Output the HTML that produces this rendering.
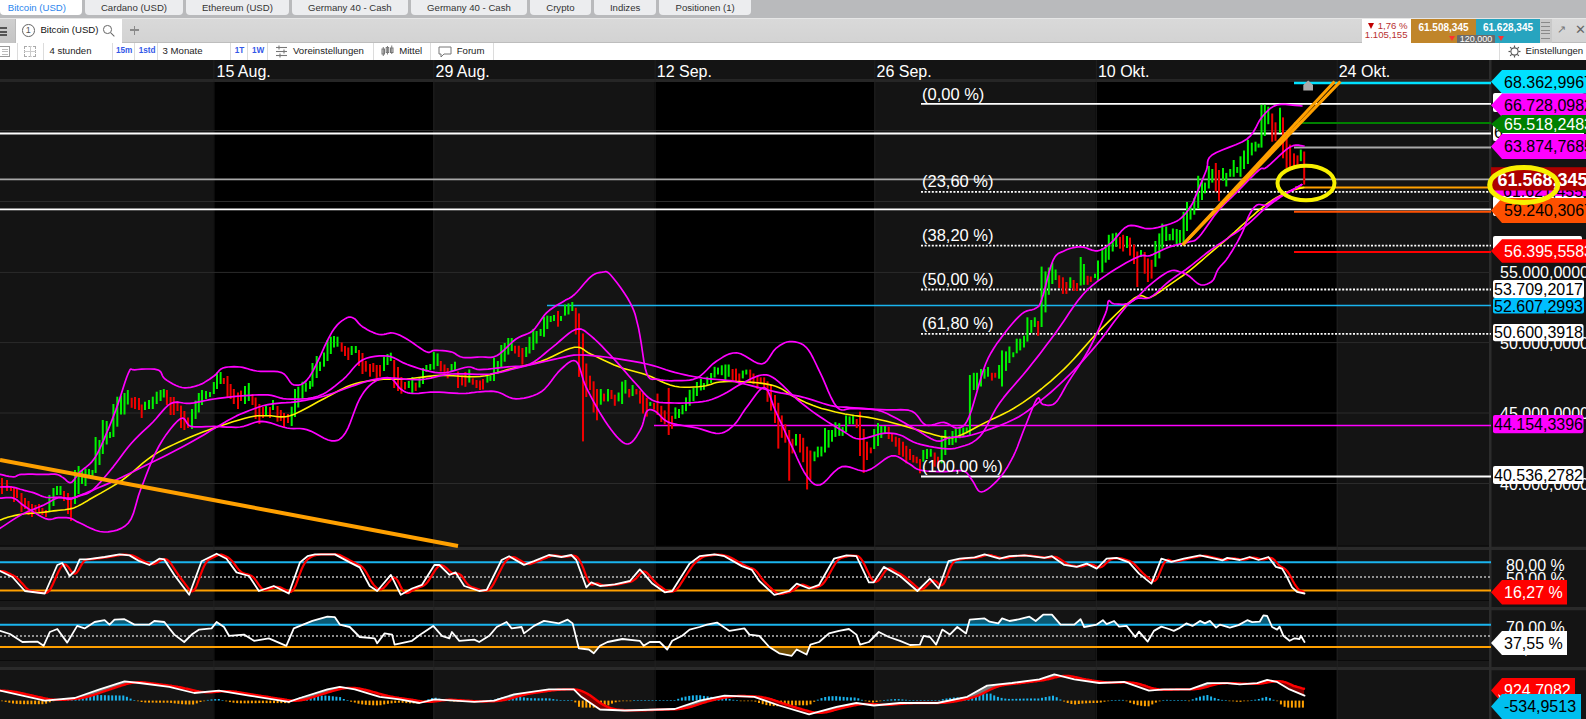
<!DOCTYPE html>
<html><head><meta charset="utf-8">
<style>
html,body{margin:0;padding:0;width:1586px;height:719px;overflow:hidden;background:#000;}
*{box-sizing:border-box;}
body{font-family:"Liberation Sans",sans-serif;position:relative;}
.abs{position:absolute;}
#tabs{left:0;top:0;width:1586px;height:18px;background:#b9babc;}
.tab{position:absolute;top:0;height:14.5px;background:#ecedef;border-radius:0 0 4px 4px;font-size:9.6px;line-height:15.6px;color:#333;text-align:center;white-space:nowrap;}
#bar2{left:0;top:18px;width:1586px;height:24.6px;background:linear-gradient(#d9d9d9,#d3d3d3);border-top:1px solid #e6e6e6;border-bottom:1px solid #bdbdbd;}
#tool{left:0;top:42.6px;width:1586px;height:17.4px;background:#fff;}
.sep{position:absolute;top:0;width:1px;height:17.7px;background:#dcdcdc;}
.tt{position:absolute;top:-1px;font-size:9.6px;line-height:17.7px;color:#222;white-space:nowrap;}
.bl{color:#3358e8;font-size:8.2px;font-weight:bold;}
svg text{font-family:"Liberation Sans",sans-serif;}
</style></head><body>
<svg class="abs" style="left:0;top:0" width="1586" height="719" viewBox="0 0 1586 719">
<rect x="0" y="60" width="1586" height="659" fill="#000"/>
<rect x="0" y="82" width="213.4" height="464.70000000000005" fill="#141414"/>
<rect x="213.4" y="82" width="219.9" height="464.70000000000005" fill="#000"/>
<rect x="433.3" y="82" width="221.3" height="464.70000000000005" fill="#141414"/>
<rect x="654.6" y="82" width="219.69999999999993" height="464.70000000000005" fill="#000"/>
<rect x="874.3" y="82" width="221.5" height="464.70000000000005" fill="#141414"/>
<rect x="1095.8" y="82" width="240.9000000000001" height="464.70000000000005" fill="#000"/>
<rect x="1336.7" y="82" width="154.29999999999995" height="464.70000000000005" fill="#141414"/>
<rect x="0" y="550" width="213.4" height="50" fill="#141414"/>
<rect x="213.4" y="550" width="219.9" height="50" fill="#000"/>
<rect x="433.3" y="550" width="221.3" height="50" fill="#141414"/>
<rect x="654.6" y="550" width="219.69999999999993" height="50" fill="#000"/>
<rect x="874.3" y="550" width="221.5" height="50" fill="#141414"/>
<rect x="1095.8" y="550" width="240.9000000000001" height="50" fill="#000"/>
<rect x="1336.7" y="550" width="154.29999999999995" height="50" fill="#141414"/>
<rect x="0" y="610" width="213.4" height="50" fill="#141414"/>
<rect x="213.4" y="610" width="219.9" height="50" fill="#000"/>
<rect x="433.3" y="610" width="221.3" height="50" fill="#141414"/>
<rect x="654.6" y="610" width="219.69999999999993" height="50" fill="#000"/>
<rect x="874.3" y="610" width="221.5" height="50" fill="#141414"/>
<rect x="1095.8" y="610" width="240.9000000000001" height="50" fill="#000"/>
<rect x="1336.7" y="610" width="154.29999999999995" height="50" fill="#141414"/>
<rect x="0" y="670" width="213.4" height="49" fill="#141414"/>
<rect x="213.4" y="670" width="219.9" height="49" fill="#000"/>
<rect x="433.3" y="670" width="221.3" height="49" fill="#141414"/>
<rect x="654.6" y="670" width="219.69999999999993" height="49" fill="#000"/>
<rect x="874.3" y="670" width="221.5" height="49" fill="#141414"/>
<rect x="1095.8" y="670" width="240.9000000000001" height="49" fill="#000"/>
<rect x="1336.7" y="670" width="154.29999999999995" height="49" fill="#141414"/>
<rect x="0" y="60" width="1491" height="19" fill="#141414"/>
<rect x="0" y="79" width="1491" height="3" fill="#262626"/>
<rect x="0" y="545.6" width="1491" height="1.1" fill="#060606"/>
<rect x="0" y="546.7" width="1491" height="3.3" fill="#2a2a2a"/>
<rect x="0" y="600" width="1491" height="1" fill="#0a0a0a"/>
<rect x="0" y="601" width="1491" height="6" fill="#191919"/>
<rect x="0" y="607" width="1491" height="3" fill="#2a2a2a"/>
<rect x="0" y="660" width="1491" height="1" fill="#0a0a0a"/>
<rect x="0" y="661" width="1491" height="6" fill="#191919"/>
<rect x="0" y="667" width="1491" height="3" fill="#2a2a2a"/>
<rect x="213.4" y="60" width="1" height="659" fill="#242424" opacity="0.8"/>
<rect x="433.3" y="60" width="1" height="659" fill="#242424" opacity="0.8"/>
<rect x="654.6" y="60" width="1" height="659" fill="#242424" opacity="0.8"/>
<rect x="874.3" y="60" width="1" height="659" fill="#242424" opacity="0.8"/>
<rect x="1095.8" y="60" width="1" height="659" fill="#242424" opacity="0.8"/>
<rect x="1336.7" y="60" width="1" height="659" fill="#242424" opacity="0.8"/>
<rect x="1491" y="60" width="95" height="659" fill="#141414"/>
<rect x="1489" y="60" width="2.5" height="659" fill="#2c2c2c"/>
<rect x="1491" y="546.7" width="95" height="3.3" fill="#2a2a2a"/>
<rect x="1491" y="607" width="95" height="3.3" fill="#2a2a2a"/>
<rect x="1491" y="667" width="95" height="3.3" fill="#2a2a2a"/>
<rect x="1491" y="79" width="95" height="3" fill="#262626"/>
<rect x="0" y="130.0" width="1491" height="1" fill="#2b2b2b"/>
<rect x="0" y="201.0" width="1491" height="1" fill="#2b2b2b"/>
<rect x="0" y="271.9" width="1491" height="1" fill="#2b2b2b"/>
<rect x="0" y="342.1" width="1491" height="1" fill="#2b2b2b"/>
<rect x="0" y="412.5" width="1491" height="1" fill="#2b2b2b"/>
<rect x="0" y="483.0" width="1491" height="1" fill="#2b2b2b"/>
<text x="216.5" y="77.4" font-size="16" fill="#fff">15 Aug.</text>
<text x="435.5" y="77.4" font-size="16" fill="#fff">29 Aug.</text>
<text x="656.8" y="77.4" font-size="16" fill="#fff">12 Sep.</text>
<text x="876.5" y="77.4" font-size="16" fill="#fff">26 Sep.</text>
<text x="1097.9" y="77.4" font-size="16" fill="#fff">10 Okt.</text>
<text x="1338.7" y="77.4" font-size="16" fill="#fff">24 Okt.</text>
<line x1="0" y1="133.4" x2="1491" y2="133.4" stroke="#ffffff" stroke-width="2"/>
<line x1="0" y1="179.3" x2="1491" y2="179.3" stroke="#a8a8a8" stroke-width="1.8"/>
<line x1="0" y1="209.4" x2="1491" y2="209.4" stroke="#ffffff" stroke-width="1.7"/>
<line x1="547" y1="305.4" x2="1491" y2="305.4" stroke="#1ab4ee" stroke-width="1.5"/>
<line x1="654" y1="425.4" x2="1491" y2="425.4" stroke="#ff00ff" stroke-width="1.5"/>
<line x1="921" y1="103.8" x2="1491" y2="103.8" stroke="#ffffff" stroke-width="1.8"/>
<line x1="921" y1="191.8" x2="1491" y2="191.8" stroke="#ffffff" stroke-width="1.8" stroke-dasharray="2 1.6"/>
<line x1="921" y1="245.6" x2="1491" y2="245.6" stroke="#ffffff" stroke-width="1.8" stroke-dasharray="2 1.6"/>
<line x1="921" y1="289.5" x2="1491" y2="289.5" stroke="#ffffff" stroke-width="1.8" stroke-dasharray="2 1.6"/>
<line x1="921" y1="333.8" x2="1491" y2="333.8" stroke="#ffffff" stroke-width="1.8" stroke-dasharray="2 1.6"/>
<line x1="921" y1="476.4" x2="1491" y2="476.4" stroke="#ffffff" stroke-width="2"/>
<line x1="1294" y1="83" x2="1491" y2="83" stroke="#00e1ff" stroke-width="2.4"/>
<line x1="1294" y1="123" x2="1491" y2="123" stroke="#008000" stroke-width="2"/>
<line x1="1294" y1="147.5" x2="1491" y2="147.5" stroke="#aaaaaa" stroke-width="2"/>
<line x1="1295" y1="187.5" x2="1491" y2="187.5" stroke="#ffa000" stroke-width="2"/>
<line x1="1294" y1="211.7" x2="1491" y2="211.7" stroke="#ff5000" stroke-width="2"/>
<line x1="1294" y1="252" x2="1491" y2="252" stroke="#ff0000" stroke-width="2"/>
<rect x="1.0" y="478.0" width="2" height="16.0" fill="#f00000"/>
<rect x="6.0" y="480.0" width="2" height="11.0" fill="#f00000"/>
<rect x="10.0" y="486.0" width="2" height="5.0" fill="#f00000"/>
<rect x="13.0" y="488.0" width="2" height="14.0" fill="#f00000"/>
<rect x="16.0" y="489.0" width="2" height="9.0" fill="#f00000"/>
<rect x="20.5" y="493.0" width="2" height="19.0" fill="#f00000"/>
<rect x="24.0" y="498.0" width="2" height="11.0" fill="#f00000"/>
<rect x="27.5" y="501.0" width="2" height="14.0" fill="#f00000"/>
<rect x="31.0" y="504.0" width="2" height="13.0" fill="#f00000"/>
<rect x="34.5" y="505.0" width="2" height="7.0" fill="#f00000"/>
<rect x="38.0" y="504.0" width="2" height="8.0" fill="#f00000"/>
<rect x="41.4" y="508.0" width="2" height="7.0" fill="#f00000"/>
<rect x="45.0" y="510.0" width="2" height="7.0" fill="#f00000"/>
<rect x="48.4" y="495.0" width="2" height="16.0" fill="#00f200"/>
<rect x="52.5" y="488.0" width="2" height="18.0" fill="#00f200"/>
<rect x="56.0" y="486.0" width="2" height="9.0" fill="#00f200"/>
<rect x="59.5" y="486.0" width="2" height="9.0" fill="#00f200"/>
<rect x="63.0" y="491.0" width="2" height="10.0" fill="#f00000"/>
<rect x="67.0" y="493.0" width="2" height="21.0" fill="#f00000"/>
<rect x="70.0" y="498.0" width="2" height="23.0" fill="#f00000"/>
<rect x="74.0" y="470.0" width="2" height="34.0" fill="#00f200"/>
<rect x="77.6" y="466.0" width="2" height="28.0" fill="#00f200"/>
<rect x="81.0" y="470.0" width="2" height="14.0" fill="#00f200"/>
<rect x="84.5" y="468.5" width="2" height="17.5" fill="#00f200"/>
<rect x="88.0" y="469.0" width="2" height="7.0" fill="#00f200"/>
<rect x="91.5" y="470.0" width="2" height="6.0" fill="#00f200"/>
<rect x="94.6" y="437.0" width="2" height="36.0" fill="#00f200"/>
<rect x="98.5" y="440.0" width="2" height="25.0" fill="#00f200"/>
<rect x="101.8" y="420.0" width="2" height="34.0" fill="#00f200"/>
<rect x="105.7" y="421.0" width="2" height="23.5" fill="#00f200"/>
<rect x="109.0" y="432.0" width="2" height="6.0" fill="#00f200"/>
<rect x="112.4" y="404.0" width="2" height="33.0" fill="#00f200"/>
<rect x="116.3" y="396.7" width="2" height="30.0" fill="#00f200"/>
<rect x="120.0" y="395.6" width="2" height="18.9" fill="#00f200"/>
<rect x="123.5" y="393.0" width="2" height="21.5" fill="#00f200"/>
<rect x="126.8" y="390.0" width="2" height="14.5" fill="#00f200"/>
<rect x="130.7" y="397.8" width="2" height="10.0" fill="#f00000"/>
<rect x="134.0" y="397.0" width="2" height="12.0" fill="#f00000"/>
<rect x="138.0" y="398.0" width="2" height="12.0" fill="#f00000"/>
<rect x="140.7" y="404.5" width="2" height="13.5" fill="#f00000"/>
<rect x="144.0" y="401.7" width="2" height="8.3" fill="#00f200"/>
<rect x="148.0" y="400.0" width="2" height="9.0" fill="#00f200"/>
<rect x="151.8" y="396.7" width="2" height="12.3" fill="#00f200"/>
<rect x="155.7" y="391.7" width="2" height="12.3" fill="#00f200"/>
<rect x="159.6" y="390.0" width="2" height="11.0" fill="#00f200"/>
<rect x="162.8" y="389.0" width="2" height="8.5" fill="#00f200"/>
<rect x="165.9" y="390.0" width="2" height="15.0" fill="#f00000"/>
<rect x="169.6" y="397.0" width="2" height="18.0" fill="#f00000"/>
<rect x="172.8" y="397.0" width="2" height="18.0" fill="#f00000"/>
<rect x="176.5" y="401.0" width="2" height="10.0" fill="#f00000"/>
<rect x="180.0" y="405.6" width="2" height="22.4" fill="#f00000"/>
<rect x="183.4" y="411.0" width="2" height="19.0" fill="#f00000"/>
<rect x="187.0" y="417.5" width="2" height="10.5" fill="#f00000"/>
<rect x="191.0" y="409.0" width="2" height="20.0" fill="#00f200"/>
<rect x="194.6" y="400.6" width="2" height="18.4" fill="#00f200"/>
<rect x="197.8" y="393.0" width="2" height="19.5" fill="#00f200"/>
<rect x="201.0" y="390.0" width="2" height="15.0" fill="#00f200"/>
<rect x="205.0" y="391.0" width="2" height="8.0" fill="#00f200"/>
<rect x="209.0" y="392.0" width="2" height="5.0" fill="#00f200"/>
<rect x="212.8" y="382.0" width="2" height="12.0" fill="#00f200"/>
<rect x="216.0" y="372.5" width="2" height="16.5" fill="#00f200"/>
<rect x="219.6" y="372.0" width="2" height="12.0" fill="#00f200"/>
<rect x="222.8" y="378.0" width="2" height="6.0" fill="#f00000"/>
<rect x="226.5" y="376.0" width="2" height="21.0" fill="#f00000"/>
<rect x="229.6" y="384.0" width="2" height="15.0" fill="#f00000"/>
<rect x="232.8" y="389.0" width="2" height="15.0" fill="#f00000"/>
<rect x="237.0" y="392.5" width="2" height="16.5" fill="#f00000"/>
<rect x="240.0" y="390.6" width="2" height="10.4" fill="#f00000"/>
<rect x="244.0" y="386.0" width="2" height="18.0" fill="#00f200"/>
<rect x="247.8" y="383.0" width="2" height="18.0" fill="#00f200"/>
<rect x="251.5" y="394.0" width="2" height="11.0" fill="#f00000"/>
<rect x="254.6" y="397.5" width="2" height="21.5" fill="#f00000"/>
<rect x="258.4" y="404.0" width="2" height="20.0" fill="#f00000"/>
<rect x="262.0" y="407.0" width="2" height="11.0" fill="#f00000"/>
<rect x="265.0" y="406.0" width="2" height="9.0" fill="#00f200"/>
<rect x="269.0" y="407.0" width="2" height="11.0" fill="#f00000"/>
<rect x="272.0" y="400.0" width="2" height="10.0" fill="#00f200"/>
<rect x="276.5" y="406.0" width="2" height="15.7" fill="#f00000"/>
<rect x="279.8" y="410.0" width="2" height="11.0" fill="#f00000"/>
<rect x="283.0" y="413.0" width="2" height="14.0" fill="#f00000"/>
<rect x="287.0" y="414.0" width="2" height="9.0" fill="#f00000"/>
<rect x="290.7" y="406.7" width="2" height="19.3" fill="#00f200"/>
<rect x="294.0" y="389.0" width="2" height="28.0" fill="#00f200"/>
<rect x="297.3" y="386.7" width="2" height="20.8" fill="#00f200"/>
<rect x="301.5" y="381.7" width="2" height="17.3" fill="#00f200"/>
<rect x="304.8" y="382.5" width="2" height="9.2" fill="#00f200"/>
<rect x="309.0" y="381.0" width="2" height="8.0" fill="#00f200"/>
<rect x="311.5" y="363.0" width="2" height="23.7" fill="#00f200"/>
<rect x="315.7" y="356.0" width="2" height="22.0" fill="#00f200"/>
<rect x="319.0" y="361.7" width="2" height="9.3" fill="#00f200"/>
<rect x="323.0" y="352.5" width="2" height="14.2" fill="#00f200"/>
<rect x="326.5" y="340.0" width="2" height="21.0" fill="#00f200"/>
<rect x="329.8" y="336.7" width="2" height="17.3" fill="#00f200"/>
<rect x="333.0" y="336.0" width="2" height="11.5" fill="#00f200"/>
<rect x="336.5" y="336.7" width="2" height="10.0" fill="#00f200"/>
<rect x="340.7" y="342.5" width="2" height="9.2" fill="#f00000"/>
<rect x="344.0" y="346.0" width="2" height="10.0" fill="#f00000"/>
<rect x="347.3" y="347.5" width="2" height="12.5" fill="#f00000"/>
<rect x="350.7" y="346.0" width="2" height="9.0" fill="#00f200"/>
<rect x="354.8" y="346.0" width="2" height="7.0" fill="#00f200"/>
<rect x="358.0" y="350.0" width="2" height="16.0" fill="#f00000"/>
<rect x="361.5" y="353.0" width="2" height="21.0" fill="#f00000"/>
<rect x="364.8" y="361.0" width="2" height="10.7" fill="#f00000"/>
<rect x="369.0" y="364.0" width="2" height="12.7" fill="#f00000"/>
<rect x="372.3" y="363.0" width="2" height="9.0" fill="#f00000"/>
<rect x="375.7" y="365.0" width="2" height="15.0" fill="#f00000"/>
<rect x="379.0" y="365.0" width="2" height="11.7" fill="#f00000"/>
<rect x="383.0" y="356.7" width="2" height="14.3" fill="#00f200"/>
<rect x="386.5" y="354.0" width="2" height="11.0" fill="#00f200"/>
<rect x="389.8" y="352.7" width="2" height="8.3" fill="#00f200"/>
<rect x="393.2" y="360.0" width="2" height="28.0" fill="#f00000"/>
<rect x="397.0" y="367.0" width="2" height="24.0" fill="#f00000"/>
<rect x="400.4" y="377.0" width="2" height="16.7" fill="#f00000"/>
<rect x="404.0" y="382.0" width="2" height="7.5" fill="#f00000"/>
<rect x="407.8" y="381.0" width="2" height="7.0" fill="#00f200"/>
<rect x="411.3" y="377.0" width="2" height="16.0" fill="#00f200"/>
<rect x="414.7" y="382.6" width="2" height="8.4" fill="#f00000"/>
<rect x="418.5" y="377.0" width="2" height="10.5" fill="#00f200"/>
<rect x="422.0" y="368.0" width="2" height="16.0" fill="#00f200"/>
<rect x="425.4" y="365.0" width="2" height="7.0" fill="#00f200"/>
<rect x="429.3" y="364.0" width="2" height="6.0" fill="#00f200"/>
<rect x="432.8" y="352.0" width="2" height="17.4" fill="#00f200"/>
<rect x="436.6" y="353.4" width="2" height="12.6" fill="#00f200"/>
<rect x="439.8" y="361.0" width="2" height="10.5" fill="#f00000"/>
<rect x="443.5" y="364.5" width="2" height="11.1" fill="#f00000"/>
<rect x="446.7" y="368.0" width="2" height="10.4" fill="#f00000"/>
<rect x="450.6" y="364.0" width="2" height="8.0" fill="#00f200"/>
<rect x="454.0" y="361.7" width="2" height="9.1" fill="#00f200"/>
<rect x="457.0" y="371.5" width="2" height="16.5" fill="#f00000"/>
<rect x="461.0" y="375.6" width="2" height="9.8" fill="#f00000"/>
<rect x="464.4" y="372.0" width="2" height="14.8" fill="#f00000"/>
<rect x="468.3" y="369.4" width="2" height="13.2" fill="#00f200"/>
<rect x="471.8" y="378.4" width="2" height="6.3" fill="#f00000"/>
<rect x="475.5" y="380.0" width="2" height="8.0" fill="#f00000"/>
<rect x="479.0" y="380.5" width="2" height="9.5" fill="#f00000"/>
<rect x="482.0" y="379.0" width="2" height="10.5" fill="#f00000"/>
<rect x="486.4" y="375.6" width="2" height="7.0" fill="#00f200"/>
<rect x="489.4" y="375.6" width="2" height="5.4" fill="#00f200"/>
<rect x="493.0" y="357.6" width="2" height="23.4" fill="#00f200"/>
<rect x="496.8" y="361.0" width="2" height="12.5" fill="#00f200"/>
<rect x="500.3" y="345.0" width="2" height="22.3" fill="#00f200"/>
<rect x="503.7" y="343.0" width="2" height="18.7" fill="#00f200"/>
<rect x="507.3" y="338.0" width="2" height="16.6" fill="#00f200"/>
<rect x="510.7" y="338.0" width="2" height="13.0" fill="#00f200"/>
<rect x="514.0" y="345.7" width="2" height="7.8" fill="#f00000"/>
<rect x="517.8" y="345.7" width="2" height="11.3" fill="#f00000"/>
<rect x="521.4" y="348.0" width="2" height="16.6" fill="#f00000"/>
<rect x="525.2" y="347.0" width="2" height="10.0" fill="#00f200"/>
<rect x="528.5" y="336.8" width="2" height="16.7" fill="#00f200"/>
<rect x="532.3" y="329.0" width="2" height="21.0" fill="#00f200"/>
<rect x="535.6" y="331.0" width="2" height="12.5" fill="#00f200"/>
<rect x="539.6" y="329.0" width="2" height="7.0" fill="#00f200"/>
<rect x="543.0" y="316.7" width="2" height="20.1" fill="#00f200"/>
<rect x="546.3" y="315.6" width="2" height="13.4" fill="#00f200"/>
<rect x="549.7" y="316.0" width="2" height="6.0" fill="#00f200"/>
<rect x="553.0" y="315.0" width="2" height="6.0" fill="#00f200"/>
<rect x="557.0" y="311.0" width="2" height="15.7" fill="#f00000"/>
<rect x="560.0" y="316.0" width="2" height="5.0" fill="#00f200"/>
<rect x="564.0" y="304.5" width="2" height="11.1" fill="#00f200"/>
<rect x="567.5" y="303.4" width="2" height="11.1" fill="#00f200"/>
<rect x="571.3" y="302.0" width="2" height="9.0" fill="#00f200"/>
<rect x="574.8" y="307.8" width="2" height="26.7" fill="#f00000"/>
<rect x="578.0" y="313.4" width="2" height="63.5" fill="#f00000"/>
<rect x="582.0" y="333.4" width="2" height="108.0" fill="#f00000"/>
<rect x="585.3" y="363.5" width="2" height="33.5" fill="#f00000"/>
<rect x="589.0" y="375.7" width="2" height="14.3" fill="#f00000"/>
<rect x="592.6" y="381.3" width="2" height="31.2" fill="#f00000"/>
<rect x="596.0" y="389.0" width="2" height="31.3" fill="#f00000"/>
<rect x="599.8" y="389.0" width="2" height="15.7" fill="#00f200"/>
<rect x="603.0" y="393.6" width="2" height="7.8" fill="#f00000"/>
<rect x="607.0" y="389.0" width="2" height="12.4" fill="#00f200"/>
<rect x="610.5" y="390.0" width="2" height="9.0" fill="#f00000"/>
<rect x="613.8" y="394.7" width="2" height="11.1" fill="#f00000"/>
<rect x="617.6" y="392.5" width="2" height="8.9" fill="#00f200"/>
<rect x="621.1" y="381.6" width="2" height="22.4" fill="#00f200"/>
<rect x="624.4" y="380.0" width="2" height="13.6" fill="#00f200"/>
<rect x="628.2" y="389.0" width="2" height="8.4" fill="#f00000"/>
<rect x="631.6" y="385.0" width="2" height="11.0" fill="#00f200"/>
<rect x="635.4" y="389.0" width="2" height="5.4" fill="#f00000"/>
<rect x="639.0" y="390.5" width="2" height="13.1" fill="#f00000"/>
<rect x="642.0" y="392.8" width="2" height="20.7" fill="#f00000"/>
<rect x="645.8" y="398.0" width="2" height="18.6" fill="#f00000"/>
<rect x="649.3" y="402.0" width="2" height="4.0" fill="#00f200"/>
<rect x="653.0" y="402.8" width="2" height="6.9" fill="#f00000"/>
<rect x="656.5" y="393.6" width="2" height="21.4" fill="#f00000"/>
<rect x="660.3" y="405.8" width="2" height="16.2" fill="#f00000"/>
<rect x="663.7" y="410.4" width="2" height="13.8" fill="#f00000"/>
<rect x="667.7" y="388.0" width="2" height="47.0" fill="#f00000"/>
<rect x="671.0" y="415.8" width="2" height="13.0" fill="#f00000"/>
<rect x="674.4" y="407.4" width="2" height="11.5" fill="#00f200"/>
<rect x="678.0" y="409.0" width="2" height="9.0" fill="#00f200"/>
<rect x="681.5" y="405.0" width="2" height="9.3" fill="#00f200"/>
<rect x="685.0" y="397.4" width="2" height="13.8" fill="#00f200"/>
<rect x="688.7" y="389.8" width="2" height="16.0" fill="#00f200"/>
<rect x="692.5" y="388.0" width="2" height="13.3" fill="#00f200"/>
<rect x="695.9" y="382.0" width="2" height="14.0" fill="#00f200"/>
<rect x="699.9" y="379.0" width="2" height="11.5" fill="#00f200"/>
<rect x="702.9" y="383.0" width="2" height="6.8" fill="#00f200"/>
<rect x="706.3" y="376.8" width="2" height="9.2" fill="#00f200"/>
<rect x="710.1" y="373.0" width="2" height="10.0" fill="#00f200"/>
<rect x="713.6" y="366.8" width="2" height="10.7" fill="#00f200"/>
<rect x="717.0" y="367.6" width="2" height="6.9" fill="#00f200"/>
<rect x="720.8" y="365.3" width="2" height="9.9" fill="#00f200"/>
<rect x="724.4" y="364.5" width="2" height="15.3" fill="#00f200"/>
<rect x="727.7" y="364.5" width="2" height="12.3" fill="#00f200"/>
<rect x="731.6" y="369.0" width="2" height="12.3" fill="#f00000"/>
<rect x="735.0" y="368.6" width="2" height="13.7" fill="#f00000"/>
<rect x="738.3" y="373.5" width="2" height="10.9" fill="#f00000"/>
<rect x="741.8" y="370.6" width="2" height="7.8" fill="#00f200"/>
<rect x="745.3" y="369.6" width="2" height="4.9" fill="#00f200"/>
<rect x="749.2" y="369.6" width="2" height="12.7" fill="#f00000"/>
<rect x="752.5" y="373.5" width="2" height="10.7" fill="#f00000"/>
<rect x="756.4" y="375.5" width="2" height="13.5" fill="#f00000"/>
<rect x="759.7" y="377.4" width="2" height="6.8" fill="#f00000"/>
<rect x="763.2" y="377.4" width="2" height="9.8" fill="#f00000"/>
<rect x="766.5" y="381.3" width="2" height="20.5" fill="#f00000"/>
<rect x="770.0" y="385.0" width="2" height="25.6" fill="#f00000"/>
<rect x="774.0" y="395.0" width="2" height="28.0" fill="#f00000"/>
<rect x="777.3" y="402.8" width="2" height="45.8" fill="#f00000"/>
<rect x="780.8" y="415.4" width="2" height="22.4" fill="#f00000"/>
<rect x="784.3" y="424.2" width="2" height="18.5" fill="#f00000"/>
<rect x="788.2" y="430.0" width="2" height="50.7" fill="#f00000"/>
<rect x="791.5" y="438.8" width="2" height="14.6" fill="#f00000"/>
<rect x="795.0" y="434.0" width="2" height="11.6" fill="#00f200"/>
<rect x="799.0" y="434.0" width="2" height="18.5" fill="#f00000"/>
<rect x="802.2" y="437.8" width="2" height="24.4" fill="#f00000"/>
<rect x="806.1" y="446.6" width="2" height="42.9" fill="#f00000"/>
<rect x="809.4" y="450.5" width="2" height="29.3" fill="#f00000"/>
<rect x="813.5" y="451.5" width="2" height="9.7" fill="#00f200"/>
<rect x="816.8" y="446.6" width="2" height="10.7" fill="#00f200"/>
<rect x="820.4" y="446.6" width="2" height="9.8" fill="#00f200"/>
<rect x="824.0" y="428.0" width="2" height="24.5" fill="#00f200"/>
<rect x="827.6" y="430.0" width="2" height="17.6" fill="#00f200"/>
<rect x="831.0" y="430.0" width="2" height="11.7" fill="#00f200"/>
<rect x="834.4" y="422.2" width="2" height="14.7" fill="#00f200"/>
<rect x="838.3" y="423.2" width="2" height="12.7" fill="#00f200"/>
<rect x="841.6" y="427.1" width="2" height="8.8" fill="#00f200"/>
<rect x="845.1" y="415.4" width="2" height="16.6" fill="#00f200"/>
<rect x="848.6" y="416.4" width="2" height="7.8" fill="#00f200"/>
<rect x="852.1" y="415.8" width="2" height="8.4" fill="#00f200"/>
<rect x="855.7" y="419.0" width="2" height="9.0" fill="#f00000"/>
<rect x="859.0" y="411.7" width="2" height="44.3" fill="#f00000"/>
<rect x="862.7" y="429.0" width="2" height="44.0" fill="#f00000"/>
<rect x="866.0" y="441.7" width="2" height="18.3" fill="#f00000"/>
<rect x="869.8" y="447.5" width="2" height="5.8" fill="#f00000"/>
<rect x="873.2" y="429.0" width="2" height="20.0" fill="#00f200"/>
<rect x="877.0" y="423.0" width="2" height="23.0" fill="#00f200"/>
<rect x="880.3" y="426.0" width="2" height="12.0" fill="#00f200"/>
<rect x="884.0" y="426.0" width="2" height="7.0" fill="#00f200"/>
<rect x="887.7" y="426.7" width="2" height="12.3" fill="#f00000"/>
<rect x="891.0" y="434.0" width="2" height="7.7" fill="#f00000"/>
<rect x="894.8" y="436.7" width="2" height="10.0" fill="#f00000"/>
<rect x="898.2" y="438.0" width="2" height="17.0" fill="#f00000"/>
<rect x="902.0" y="441.7" width="2" height="15.0" fill="#f00000"/>
<rect x="905.3" y="445.8" width="2" height="17.5" fill="#f00000"/>
<rect x="909.0" y="449.0" width="2" height="11.0" fill="#f00000"/>
<rect x="912.3" y="455.0" width="2" height="7.5" fill="#f00000"/>
<rect x="915.7" y="456.7" width="2" height="6.6" fill="#f00000"/>
<rect x="919.0" y="459.0" width="2" height="14.3" fill="#f00000"/>
<rect x="922.3" y="450.0" width="2" height="11.7" fill="#00f200"/>
<rect x="926.0" y="449.0" width="2" height="10.0" fill="#00f200"/>
<rect x="929.8" y="449.0" width="2" height="7.7" fill="#00f200"/>
<rect x="933.7" y="452.5" width="2" height="14.2" fill="#f00000"/>
<rect x="937.0" y="456.7" width="2" height="11.6" fill="#f00000"/>
<rect x="940.7" y="436.7" width="2" height="26.6" fill="#00f200"/>
<rect x="944.3" y="430.0" width="2" height="25.0" fill="#00f200"/>
<rect x="948.2" y="436.0" width="2" height="9.0" fill="#00f200"/>
<rect x="951.5" y="431.0" width="2" height="14.0" fill="#00f200"/>
<rect x="954.8" y="428.3" width="2" height="14.2" fill="#00f200"/>
<rect x="958.7" y="426.7" width="2" height="11.6" fill="#00f200"/>
<rect x="962.3" y="427.5" width="2" height="9.2" fill="#00f200"/>
<rect x="965.7" y="427.5" width="2" height="5.8" fill="#00f200"/>
<rect x="968.9" y="375.0" width="2" height="60.0" fill="#00f200"/>
<rect x="972.8" y="372.8" width="2" height="17.2" fill="#00f200"/>
<rect x="976.0" y="372.8" width="2" height="17.2" fill="#00f200"/>
<rect x="980.0" y="369.0" width="2" height="17.5" fill="#00f200"/>
<rect x="983.5" y="369.0" width="2" height="9.7" fill="#00f200"/>
<rect x="987.0" y="367.0" width="2" height="9.7" fill="#00f200"/>
<rect x="990.9" y="372.8" width="2" height="7.8" fill="#f00000"/>
<rect x="994.2" y="372.8" width="2" height="4.9" fill="#f00000"/>
<rect x="998.1" y="365.0" width="2" height="13.7" fill="#00f200"/>
<rect x="1001.0" y="350.4" width="2" height="36.1" fill="#00f200"/>
<rect x="1005.0" y="351.4" width="2" height="19.5" fill="#00f200"/>
<rect x="1008.4" y="346.5" width="2" height="16.5" fill="#00f200"/>
<rect x="1012.3" y="352.3" width="2" height="4.9" fill="#00f200"/>
<rect x="1015.7" y="338.7" width="2" height="14.6" fill="#00f200"/>
<rect x="1019.2" y="338.7" width="2" height="11.7" fill="#00f200"/>
<rect x="1023.0" y="335.8" width="2" height="11.7" fill="#00f200"/>
<rect x="1026.4" y="317.3" width="2" height="24.3" fill="#00f200"/>
<rect x="1030.3" y="320.0" width="2" height="12.8" fill="#00f200"/>
<rect x="1033.8" y="317.3" width="2" height="9.7" fill="#00f200"/>
<rect x="1037.1" y="321.0" width="2" height="14.8" fill="#f00000"/>
<rect x="1040.6" y="266.6" width="2" height="60.4" fill="#00f200"/>
<rect x="1044.5" y="271.4" width="2" height="41.0" fill="#00f200"/>
<rect x="1047.8" y="267.5" width="2" height="27.3" fill="#00f200"/>
<rect x="1051.3" y="262.7" width="2" height="21.3" fill="#00f200"/>
<rect x="1054.6" y="269.5" width="2" height="10.5" fill="#00f200"/>
<rect x="1058.2" y="275.3" width="2" height="12.7" fill="#f00000"/>
<rect x="1061.9" y="277.3" width="2" height="16.6" fill="#f00000"/>
<rect x="1065.4" y="282.0" width="2" height="11.9" fill="#f00000"/>
<rect x="1069.3" y="277.3" width="2" height="10.7" fill="#00f200"/>
<rect x="1072.6" y="280.0" width="2" height="11.0" fill="#f00000"/>
<rect x="1076.0" y="283.0" width="2" height="8.0" fill="#f00000"/>
<rect x="1079.7" y="257.0" width="2" height="28.5" fill="#00f200"/>
<rect x="1082.9" y="264.0" width="2" height="20.8" fill="#00f200"/>
<rect x="1086.6" y="275.8" width="2" height="9.0" fill="#f00000"/>
<rect x="1089.8" y="276.5" width="2" height="5.5" fill="#f00000"/>
<rect x="1094.0" y="273.7" width="2" height="4.3" fill="#00f200"/>
<rect x="1097.0" y="260.5" width="2" height="20.2" fill="#00f200"/>
<rect x="1101.3" y="248.0" width="2" height="24.3" fill="#00f200"/>
<rect x="1104.7" y="247.3" width="2" height="15.3" fill="#00f200"/>
<rect x="1107.8" y="234.8" width="2" height="25.0" fill="#00f200"/>
<rect x="1111.7" y="233.4" width="2" height="18.1" fill="#00f200"/>
<rect x="1115.2" y="232.7" width="2" height="13.9" fill="#00f200"/>
<rect x="1119.0" y="236.9" width="2" height="11.8" fill="#f00000"/>
<rect x="1122.1" y="234.8" width="2" height="16.7" fill="#f00000"/>
<rect x="1126.0" y="236.0" width="2" height="12.0" fill="#00f200"/>
<rect x="1129.0" y="237.6" width="2" height="18.0" fill="#f00000"/>
<rect x="1133.0" y="244.5" width="2" height="19.5" fill="#f00000"/>
<rect x="1136.3" y="251.5" width="2" height="35.5" fill="#f00000"/>
<rect x="1140.0" y="250.0" width="2" height="7.0" fill="#00f200"/>
<rect x="1143.7" y="252.0" width="2" height="21.7" fill="#f00000"/>
<rect x="1146.9" y="258.4" width="2" height="23.6" fill="#f00000"/>
<rect x="1150.6" y="259.8" width="2" height="18.8" fill="#f00000"/>
<rect x="1154.4" y="241.0" width="2" height="25.8" fill="#00f200"/>
<rect x="1158.3" y="233.4" width="2" height="25.0" fill="#00f200"/>
<rect x="1161.3" y="223.6" width="2" height="25.1" fill="#00f200"/>
<rect x="1165.2" y="226.4" width="2" height="14.6" fill="#00f200"/>
<rect x="1168.7" y="234.0" width="2" height="6.3" fill="#00f200"/>
<rect x="1171.9" y="228.5" width="2" height="11.8" fill="#00f200"/>
<rect x="1175.7" y="229.0" width="2" height="15.5" fill="#00f200"/>
<rect x="1178.9" y="230.0" width="2" height="14.5" fill="#00f200"/>
<rect x="1182.6" y="211.8" width="2" height="31.2" fill="#00f200"/>
<rect x="1186.0" y="202.0" width="2" height="29.0" fill="#00f200"/>
<rect x="1189.5" y="206.0" width="2" height="13.6" fill="#00f200"/>
<rect x="1193.3" y="198.0" width="2" height="16.7" fill="#00f200"/>
<rect x="1197.2" y="175.8" width="2" height="33.2" fill="#00f200"/>
<rect x="1201.0" y="178.7" width="2" height="21.3" fill="#00f200"/>
<rect x="1204.0" y="182.6" width="2" height="10.7" fill="#00f200"/>
<rect x="1207.8" y="166.0" width="2" height="22.5" fill="#00f200"/>
<rect x="1211.3" y="169.0" width="2" height="13.6" fill="#00f200"/>
<rect x="1214.8" y="163.0" width="2" height="28.4" fill="#f00000"/>
<rect x="1218.0" y="170.0" width="2" height="31.0" fill="#f00000"/>
<rect x="1222.0" y="168.0" width="2" height="12.7" fill="#00f200"/>
<rect x="1225.3" y="172.9" width="2" height="13.6" fill="#00f200"/>
<rect x="1229.2" y="169.0" width="2" height="7.8" fill="#00f200"/>
<rect x="1232.7" y="160.0" width="2" height="16.8" fill="#00f200"/>
<rect x="1236.2" y="167.0" width="2" height="5.9" fill="#00f200"/>
<rect x="1239.5" y="156.3" width="2" height="20.5" fill="#00f200"/>
<rect x="1243.0" y="150.5" width="2" height="18.5" fill="#00f200"/>
<rect x="1246.9" y="139.8" width="2" height="24.2" fill="#00f200"/>
<rect x="1250.8" y="142.7" width="2" height="12.7" fill="#00f200"/>
<rect x="1254.5" y="141.7" width="2" height="9.8" fill="#00f200"/>
<rect x="1257.6" y="143.7" width="2" height="3.9" fill="#00f200"/>
<rect x="1260.5" y="104.7" width="2" height="42.9" fill="#00f200"/>
<rect x="1263.8" y="104.7" width="2" height="31.3" fill="#00f200"/>
<rect x="1267.3" y="106.7" width="2" height="17.5" fill="#00f200"/>
<rect x="1271.2" y="113.5" width="2" height="28.2" fill="#f00000"/>
<rect x="1274.5" y="122.3" width="2" height="18.5" fill="#f00000"/>
<rect x="1279.0" y="107.7" width="2" height="25.3" fill="#00f200"/>
<rect x="1282.0" y="117.4" width="2" height="40.9" fill="#f00000"/>
<rect x="1285.6" y="136.9" width="2" height="31.1" fill="#f00000"/>
<rect x="1289.1" y="144.6" width="2" height="22.4" fill="#f00000"/>
<rect x="1293.0" y="153.4" width="2" height="15.6" fill="#f00000"/>
<rect x="1296.5" y="155.4" width="2" height="9.6" fill="#f00000"/>
<rect x="1299.8" y="149.5" width="2" height="11.7" fill="#00f200"/>
<rect x="1303.2" y="151.5" width="2" height="33.1" fill="#f00000"/>
<path d="M0.0,520.1 L1.0,519.7 L2.3,519.2 L3.9,518.6 L5.7,517.9 L7.7,517.3 L9.7,516.7 L11.8,516.2 L14.2,515.6 L16.7,515.1 L19.3,514.6 L21.8,514.2 L24.3,513.8 L26.7,513.5 L29.2,513.4 L31.6,513.2 L34.0,513.1 L36.5,513.0 L38.9,512.8 L41.3,512.5 L43.7,512.2 L46.1,511.9 L48.5,511.6 L51.0,511.2 L53.5,510.9 L56.2,510.6 L59.1,510.3 L62.0,510.0 L64.9,509.7 L67.6,509.3 L70.0,508.9 L72.0,508.4 L73.7,507.9 L75.3,507.3 L76.8,506.6 L78.3,505.9 L80.0,505.0 L81.7,504.1 L83.2,503.3 L84.7,502.4 L86.6,501.3 L88.9,499.8 L92.0,498.0 L96.0,495.7 L100.8,493.1 L106.0,490.1 L111.6,486.9 L117.1,483.5 L122.4,480.0 L127.5,476.2 L132.6,472.0 L137.7,467.6 L142.8,463.2 L147.9,459.1 L153.0,455.5 L158.1,452.4 L163.2,449.5 L168.3,447.0 L173.4,444.6 L178.5,442.3 L183.6,440.0 L188.6,437.8 L193.5,435.7 L198.5,433.7 L203.5,431.8 L208.6,429.9 L214.0,428.0 L219.9,426.0 L226.3,423.9 L232.8,421.8 L239.1,419.9 L245.0,418.3 L250.0,417.0 L254.0,416.2 L257.1,415.8 L259.8,415.7 L262.2,415.7 L264.8,415.7 L267.8,415.7 L271.1,415.8 L274.5,416.2 L277.9,416.7 L281.6,416.9 L285.6,416.7 L290.0,415.7 L295.0,413.9 L300.5,411.3 L306.3,408.2 L312.3,405.0 L318.0,401.8 L323.4,399.0 L328.4,396.4 L333.1,393.8 L337.6,391.3 L342.1,388.9 L346.6,386.8 L351.2,385.0 L355.8,383.5 L360.5,382.4 L365.1,381.5 L369.7,380.7 L374.4,380.1 L379.0,379.6 L383.6,379.3 L388.1,379.2 L392.6,379.2 L397.1,379.2 L401.9,379.2 L406.8,379.0 L411.9,378.5 L417.2,377.8 L422.6,377.1 L428.2,376.4 L434.0,375.8 L440.0,375.4 L446.4,375.4 L453.3,375.7 L460.3,376.2 L467.3,376.6 L474.0,376.7 L480.0,376.5 L485.3,375.8 L490.0,374.8 L494.3,373.6 L498.6,372.3 L503.0,370.9 L507.8,369.6 L513.0,368.4 L518.5,367.1 L524.2,365.8 L529.9,364.5 L535.6,362.9 L541.2,361.2 L546.9,359.0 L552.9,356.2 L558.9,353.3 L564.6,350.6 L569.9,348.5 L574.5,347.3 L578.1,347.2 L580.9,347.9 L583.2,349.2 L585.4,350.8 L588.0,352.6 L591.2,354.3 L595.2,356.1 L599.6,358.2 L604.4,360.5 L609.3,362.7 L614.2,364.9 L619.0,366.8 L623.6,368.4 L628.3,369.7 L632.9,371.0 L637.5,372.2 L642.2,373.5 L646.8,375.0 L651.4,376.8 L656.1,379.0 L660.7,381.2 L665.4,383.3 L670.1,385.0 L674.7,386.3 L679.5,387.0 L684.4,387.3 L689.2,387.3 L694.0,387.0 L698.5,386.7 L702.5,386.3 L705.9,385.8 L708.7,385.0 L711.3,384.2 L713.8,383.3 L716.6,382.5 L720.0,382.0 L724.0,381.7 L728.5,381.5 L733.3,381.5 L738.2,381.5 L743.0,381.7 L747.8,382.0 L752.5,382.4 L757.4,382.8 L762.2,383.4 L767.0,384.1 L771.5,385.1 L775.6,386.2 L779.3,387.7 L782.6,389.4 L785.6,391.4 L788.6,393.4 L791.7,395.5 L795.0,397.3 L798.5,399.0 L802.0,400.7 L805.6,402.4 L809.4,404.0 L813.2,405.6 L817.3,407.0 L821.6,408.4 L826.1,409.6 L830.8,410.8 L835.5,412.0 L840.3,413.0 L845.0,414.0 L849.7,414.8 L854.3,415.5 L859.0,416.1 L863.7,416.7 L868.3,417.4 L873.0,418.2 L877.6,419.2 L882.2,420.2 L886.8,421.3 L891.4,422.5 L896.1,423.7 L900.8,425.0 L905.8,426.4 L911.0,427.9 L916.3,429.5 L921.3,431.1 L926.0,432.5 L930.0,433.6 L933.2,434.5 L935.8,435.2 L937.9,435.8 L939.8,436.3 L941.8,436.6 L943.9,436.9 L946.1,437.2 L948.0,437.5 L950.0,437.7 L952.1,437.6 L954.7,437.2 L957.8,436.3 L961.6,434.8 L966.0,432.7 L970.8,430.2 L975.8,427.5 L980.8,424.9 L985.6,422.4 L990.2,420.1 L994.9,418.0 L999.6,415.8 L1004.2,413.5 L1008.9,411.1 L1013.5,408.5 L1018.1,405.6 L1022.8,402.6 L1027.4,399.4 L1032.0,396.1 L1036.7,392.6 L1041.3,389.0 L1045.9,385.2 L1050.6,381.3 L1055.2,377.2 L1059.8,373.0 L1064.5,368.6 L1069.1,364.0 L1073.6,359.3 L1078.0,354.4 L1082.4,349.4 L1086.9,344.2 L1091.7,338.8 L1096.9,333.4 L1102.9,327.4 L1109.6,320.6 L1116.6,313.8 L1123.4,307.3 L1129.6,301.8 L1134.7,297.9 L1138.5,295.9 L1141.3,295.6 L1143.5,296.3 L1145.4,297.2 L1147.5,297.9 L1150.0,297.5 L1153.0,296.1 L1156.2,294.2 L1159.5,292.0 L1162.9,289.6 L1166.2,287.1 L1169.5,284.8 L1172.7,282.6 L1176.0,280.4 L1179.2,278.2 L1182.4,276.0 L1185.7,273.6 L1188.9,271.2 L1192.1,268.6 L1195.4,265.9 L1198.6,263.1 L1201.9,260.3 L1205.1,257.5 L1208.4,254.7 L1211.7,251.9 L1214.9,249.2 L1218.2,246.5 L1221.4,243.7 L1224.7,240.9 L1227.9,238.1 L1231.1,235.2 L1234.4,232.3 L1237.6,229.3 L1240.8,226.4 L1244.1,223.5 L1247.3,220.6 L1250.5,217.7 L1253.8,214.8 L1257.0,211.9 L1260.3,209.1 L1263.5,206.5 L1266.8,204.0 L1270.1,201.7 L1273.4,199.5 L1276.7,197.5 L1279.9,195.6 L1283.2,193.9 L1286.3,192.4 L1289.5,191.1 L1292.9,190.1 L1296.3,189.2 L1299.3,188.5 L1301.9,188.0 L1303.8,187.5" fill="none" stroke="#ffee00" stroke-width="1.6" stroke-linejoin="round" stroke-linecap="round"/>
<path d="M0.0,528.4 L2.2,526.9 L5.3,524.9 L9.0,522.4 L12.8,519.9 L16.4,517.6 L19.5,515.7 L22.0,514.3 L24.2,513.2 L26.3,512.3 L28.2,511.5 L30.1,510.7 L32.1,509.9 L34.1,509.1 L36.0,508.3 L37.8,507.5 L39.7,506.8 L41.7,505.9 L43.8,505.0 L46.1,503.8 L48.6,502.4 L51.1,500.9 L53.6,499.6 L56.1,498.4 L58.4,497.7 L60.5,497.5 L62.5,497.7 L64.5,498.2 L66.4,498.8 L68.2,499.2 L70.0,499.2 L71.7,498.9 L73.4,498.3 L75.0,497.6 L76.6,496.9 L78.2,496.1 L80.0,495.3 L81.6,494.7 L83.1,494.1 L84.6,493.6 L86.4,492.9 L88.7,491.9 L91.8,490.6 L95.5,489.0 L99.5,487.3 L104.0,485.4 L109.2,483.1 L115.3,480.3 L122.4,476.9 L131.1,472.7 L141.4,467.6 L152.6,462.1 L163.9,456.4 L174.5,451.1 L183.6,446.3 L191.3,442.1 L198.3,438.1 L204.5,434.4 L210.2,430.9 L215.5,427.7 L220.3,424.9 L224.5,422.5 L227.8,420.5 L230.7,418.9 L233.5,417.4 L236.4,415.9 L240.0,414.3 L244.2,412.6 L248.7,410.7 L253.4,409.0 L258.2,407.3 L263.1,405.8 L267.8,404.6 L272.4,403.8 L277.1,403.3 L281.7,402.9 L286.3,402.7 L291.0,402.3 L295.6,401.8 L300.2,401.1 L304.9,400.3 L309.5,399.5 L314.1,398.6 L318.8,397.5 L323.4,396.3 L328.1,394.9 L332.9,393.2 L337.6,391.5 L342.3,389.7 L346.9,388.0 L351.2,386.5 L355.3,385.1 L359.3,383.8 L363.1,382.5 L366.7,381.4 L370.2,380.4 L373.5,379.6 L376.4,379.0 L378.9,378.6 L381.2,378.3 L383.7,378.1 L386.5,378.0 L390.0,378.0 L394.3,378.2 L399.2,378.6 L404.5,379.1 L410.0,379.5 L415.5,379.7 L420.8,379.6 L425.8,379.0 L430.7,378.1 L435.6,376.9 L440.5,375.7 L445.7,374.7 L451.3,374.0 L457.4,373.8 L463.9,373.9 L470.6,374.1 L477.3,374.3 L483.9,374.4 L490.0,374.0 L495.6,373.2 L500.9,372.2 L506.0,370.9 L511.1,369.5 L516.2,368.1 L521.7,366.8 L527.7,365.4 L534.1,363.9 L540.6,362.4 L546.9,361.0 L552.8,359.6 L557.9,358.5 L562.0,357.6 L565.3,356.8 L568.1,356.1 L570.8,355.6 L573.8,355.2 L577.3,355.0 L581.3,355.0 L585.4,355.1 L589.8,355.3 L594.5,355.8 L599.6,356.3 L605.1,357.0 L611.4,357.9 L618.5,358.9 L625.9,360.1 L633.4,361.4 L640.5,362.7 L646.8,364.0 L652.2,365.4 L657.1,366.8 L661.6,368.3 L665.9,369.8 L670.2,371.1 L674.7,372.4 L679.3,373.5 L684.0,374.6 L688.6,375.6 L693.3,376.5 L697.9,377.3 L702.5,378.0 L707.3,378.6 L712.3,379.1 L717.2,379.5 L722.0,379.9 L726.3,380.3 L730.0,380.7 L732.7,381.1 L734.4,381.4 L735.7,381.7 L737.1,382.1 L739.1,382.6 L742.2,383.4 L746.6,384.5 L752.0,385.9 L757.9,387.4 L764.1,389.0 L770.1,390.5 L775.6,391.8 L780.6,392.9 L785.3,393.7 L789.9,394.6 L794.3,395.4 L798.8,396.2 L803.4,397.3 L808.1,398.6 L813.0,400.1 L817.9,401.7 L822.6,403.3 L827.1,404.6 L831.2,405.7 L834.8,406.4 L837.8,406.8 L840.7,407.0 L843.5,407.1 L846.5,407.2 L850.0,407.5 L854.1,407.8 L858.7,408.1 L863.5,408.4 L868.3,408.8 L872.7,409.3 L876.7,410.0 L880.0,410.8 L882.7,411.7 L885.2,412.7 L887.6,413.8 L890.3,415.2 L893.3,416.7 L896.8,418.6 L900.7,420.7 L904.8,423.1 L908.9,425.5 L912.9,427.8 L916.7,430.0 L920.3,432.1 L923.9,434.4 L927.3,436.6 L930.7,438.5 L933.8,440.0 L936.7,441.0 L939.2,441.2 L941.3,440.9 L943.2,440.1 L945.2,439.1 L947.4,438.2 L950.0,437.5 L952.9,437.2 L955.9,437.1 L959.1,437.0 L962.7,436.8 L966.8,436.2 L971.7,435.0 L977.7,433.2 L984.7,431.0 L992.2,428.4 L999.9,425.5 L1007.1,422.5 L1013.5,419.6 L1018.9,416.7 L1023.8,413.6 L1028.3,410.5 L1032.6,407.2 L1036.8,403.8 L1041.3,400.2 L1045.9,396.4 L1050.6,392.5 L1055.2,388.3 L1059.8,384.1 L1064.5,379.7 L1069.1,375.1 L1073.7,370.5 L1078.1,365.7 L1082.6,360.9 L1087.2,355.8 L1091.9,350.4 L1096.9,344.5 L1102.4,337.7 L1108.3,329.8 L1114.3,321.6 L1120.3,313.8 L1125.8,307.0 L1130.7,302.0 L1134.8,299.2 L1138.2,298.1 L1141.2,298.1 L1144.1,298.5 L1146.9,298.5 L1150.0,297.5 L1153.2,295.4 L1156.5,292.8 L1159.7,289.8 L1163.0,286.7 L1166.3,283.7 L1169.5,281.0 L1172.7,278.6 L1176.0,276.3 L1179.2,274.1 L1182.4,271.9 L1185.7,269.7 L1188.9,267.3 L1192.1,264.8 L1195.4,262.2 L1198.6,259.6 L1201.9,256.9 L1205.1,254.3 L1208.4,251.8 L1211.7,249.4 L1214.9,247.1 L1218.2,244.8 L1221.4,242.6 L1224.7,240.4 L1227.9,238.1 L1231.1,235.9 L1234.4,233.7 L1237.6,231.5 L1240.8,229.3 L1244.1,227.0 L1247.3,224.5 L1250.5,221.8 L1253.8,218.8 L1257.0,215.8 L1260.3,212.7 L1263.5,209.7 L1266.8,207.0 L1270.1,204.5 L1273.4,202.0 L1276.8,199.7 L1280.1,197.4 L1283.3,195.3 L1286.3,193.4 L1289.3,191.6 L1292.3,189.8 L1295.3,188.2 L1297.9,186.7 L1300.2,185.5 L1301.8,184.6" fill="none" stroke="#ff00ff" stroke-width="1.7" stroke-linejoin="round" stroke-linecap="round"/>
<path d="M0.0,498.2 L1.5,498.1 L3.6,497.9 L6.1,497.7 L8.8,497.6 L11.3,497.7 L13.6,498.2 L15.4,499.0 L17.0,500.0 L18.5,501.3 L20.0,502.7 L21.9,504.3 L24.3,506.0 L27.3,508.0 L31.0,510.4 L34.9,512.9 L38.8,515.3 L42.5,517.3 L45.7,518.7 L48.3,519.3 L50.6,519.3 L52.7,519.0 L54.6,518.4 L56.4,517.9 L58.4,517.7 L60.4,517.6 L62.4,517.6 L64.4,517.6 L66.3,517.7 L68.2,517.9 L70.0,518.2 L71.6,518.7 L72.9,519.3 L74.2,520.1 L75.7,520.9 L77.5,521.9 L80.0,523.0 L83.2,524.5 L86.9,526.4 L91.1,528.4 L95.4,530.2 L99.8,531.5 L104.0,532.0 L108.2,531.8 L112.6,531.2 L117.0,530.1 L121.2,528.4 L125.1,526.0 L128.5,522.8 L131.2,518.7 L133.3,513.7 L135.0,508.0 L136.7,501.9 L138.5,495.5 L140.8,489.0 L143.5,482.2 L146.3,474.8 L149.3,467.1 L152.5,459.5 L155.7,452.4 L159.0,446.0 L162.5,440.1 L166.3,434.4 L170.2,429.2 L174.0,424.6 L177.5,421.0 L180.5,418.7 L182.7,418.0 L184.4,419.0 L185.7,420.8 L187.0,423.1 L188.7,425.2 L191.0,426.4 L194.1,426.8 L197.6,426.9 L201.5,426.8 L205.6,426.6 L209.8,426.5 L214.0,426.4 L218.2,426.5 L222.6,426.8 L227.1,427.1 L231.5,427.2 L235.9,427.3 L240.0,427.0 L243.9,426.3 L247.5,425.1 L251.1,423.8 L254.6,422.5 L258.2,421.6 L262.0,421.3 L266.1,421.8 L270.3,422.8 L274.6,424.2 L278.9,425.7 L283.1,427.0 L287.0,428.0 L290.5,428.5 L293.8,428.6 L296.8,428.5 L299.9,428.5 L303.2,428.8 L306.7,429.6 L310.7,431.1 L315.1,433.3 L319.6,435.8 L324.1,438.2 L328.2,440.0 L331.8,440.8 L334.8,440.8 L337.3,440.4 L339.4,439.4 L341.5,437.8 L343.5,435.5 L345.7,432.4 L348.0,428.1 L350.3,422.5 L352.6,416.2 L355.0,409.8 L357.3,403.9 L359.6,399.0 L361.9,395.1 L364.1,391.8 L366.4,388.9 L368.7,386.4 L371.0,384.3 L373.5,382.4 L376.2,380.8 L379.0,379.4 L381.9,378.5 L384.8,377.9 L387.5,377.7 L390.0,378.0 L392.1,379.1 L394.1,380.9 L395.8,383.1 L397.5,385.5 L399.2,387.6 L401.0,389.3 L402.8,390.5 L404.4,391.4 L406.0,392.2 L407.8,392.8 L409.9,393.2 L412.4,393.5 L415.4,393.5 L418.8,393.3 L422.5,392.9 L426.5,392.5 L430.5,392.1 L434.7,392.0 L439.1,392.1 L443.9,392.4 L448.9,392.8 L453.8,393.1 L458.4,393.4 L462.5,393.5 L466.0,393.4 L469.1,393.1 L471.9,392.7 L474.6,392.4 L477.2,392.0 L480.0,391.8 L482.8,391.6 L485.5,391.4 L488.2,391.3 L491.0,391.2 L493.8,391.4 L496.7,391.8 L499.7,392.7 L502.7,394.1 L505.8,395.7 L509.0,397.2 L512.4,398.4 L516.0,398.8 L519.9,398.6 L524.2,398.1 L528.6,397.1 L533.0,395.8 L537.3,394.0 L541.2,391.8 L544.8,388.8 L548.2,385.0 L551.5,380.8 L554.6,376.5 L557.7,372.7 L560.6,369.6 L563.5,367.0 L566.2,364.5 L568.9,362.4 L571.4,361.0 L573.8,360.5 L576.0,361.2 L577.9,363.4 L579.4,366.9 L580.8,371.3 L582.2,376.3 L583.7,381.4 L585.7,386.3 L588.1,391.2 L590.8,396.4 L593.6,401.7 L596.6,407.0 L599.5,412.1 L602.4,416.8 L605.2,421.2 L608.1,425.5 L611.0,429.5 L613.9,433.2 L616.5,436.4 L619.0,439.0 L621.2,441.0 L623.1,442.5 L624.9,443.5 L626.7,444.0 L628.4,443.9 L630.2,443.3 L632.1,441.9 L634.1,439.7 L636.1,437.0 L638.0,433.9 L639.8,430.9 L641.3,428.0 L642.5,425.1 L643.4,421.9 L644.2,418.7 L645.0,415.7 L645.8,413.1 L646.8,411.3 L648.0,410.2 L649.2,409.7 L650.5,409.6 L651.9,409.9 L653.5,410.5 L655.2,411.3 L657.0,412.6 L658.9,414.4 L660.9,416.5 L663.1,418.7 L665.8,420.7 L669.0,422.4 L672.9,423.7 L677.5,424.7 L682.5,425.5 L687.6,426.3 L692.5,427.1 L697.0,428.0 L701.1,429.1 L705.0,430.4 L708.8,431.6 L712.4,432.7 L715.8,433.4 L719.0,433.5 L721.9,433.0 L724.6,432.1 L727.0,430.8 L729.3,429.2 L731.7,427.2 L734.0,425.0 L736.3,422.4 L738.6,419.3 L740.8,415.9 L743.0,412.4 L745.3,409.0 L747.8,405.7 L750.5,402.1 L753.4,398.0 L756.3,394.0 L759.2,390.5 L762.0,388.2 L764.5,387.6 L766.6,389.0 L768.4,391.9 L770.0,396.0 L771.7,400.9 L773.5,406.1 L775.6,411.2 L778.1,416.6 L780.9,422.6 L783.8,429.0 L786.7,435.5 L789.6,441.7 L792.3,447.4 L794.8,452.7 L797.1,458.0 L799.4,462.9 L801.7,467.6 L803.9,471.7 L806.2,475.2 L808.4,478.2 L810.5,480.8 L812.6,483.0 L814.8,484.5 L817.2,485.2 L820.0,485.0 L823.1,483.3 L826.5,480.2 L830.1,476.2 L833.9,472.2 L837.8,468.8 L841.7,466.7 L845.7,466.3 L849.8,467.1 L854.0,468.5 L858.2,470.0 L862.5,471.0 L866.7,470.8 L871.0,469.1 L875.3,466.4 L879.7,463.1 L884.0,459.8 L888.0,457.2 L891.7,455.8 L895.0,455.8 L898.0,456.7 L900.8,458.2 L903.4,460.0 L905.9,461.8 L908.3,463.3 L910.4,464.5 L912.2,465.8 L913.8,467.0 L915.5,468.2 L917.5,469.2 L920.0,470.0 L923.0,470.6 L926.5,471.0 L930.2,471.3 L934.1,471.5 L938.0,471.6 L941.7,471.7 L945.5,471.6 L949.4,471.3 L953.3,470.9 L957.1,470.6 L960.4,470.6 L963.3,471.0 L965.5,471.9 L967.1,473.2 L968.4,474.7 L969.5,476.4 L970.7,478.2 L972.0,480.0 L973.4,482.1 L974.8,484.7 L976.2,487.4 L977.7,489.8 L979.4,491.5 L981.5,492.0 L984.1,491.3 L987.1,489.6 L990.3,487.1 L993.6,484.2 L996.7,481.1 L999.6,478.0 L1002.2,474.8 L1004.6,471.4 L1007.0,467.8 L1009.2,463.9 L1011.4,459.9 L1013.5,455.8 L1015.5,451.5 L1017.4,447.0 L1019.1,442.3 L1020.9,437.6 L1022.7,432.8 L1024.6,428.0 L1026.7,422.8 L1028.9,417.1 L1031.2,411.3 L1033.4,406.0 L1035.4,401.7 L1037.1,398.8 L1038.4,397.8 L1039.2,398.3 L1039.9,399.8 L1040.6,401.7 L1041.4,403.4 L1042.7,404.3 L1044.4,404.7 L1046.3,405.1 L1048.4,405.4 L1050.7,405.2 L1053.0,404.5 L1055.2,403.0 L1057.4,400.6 L1059.5,397.4 L1061.7,393.7 L1064.0,389.5 L1066.4,385.1 L1069.1,380.7 L1072.1,376.1 L1075.3,371.3 L1078.7,366.2 L1082.1,360.9 L1085.4,355.5 L1088.6,350.0 L1091.7,344.0 L1094.9,337.5 L1098.0,330.8 L1100.8,324.4 L1103.3,318.6 L1105.3,313.9 L1106.6,310.2 L1107.3,307.3 L1107.6,305.0 L1107.8,303.3 L1108.0,302.0 L1108.5,301.0 L1109.2,300.6 L1109.7,300.9 L1110.4,301.7 L1111.3,302.6 L1112.4,303.4 L1114.0,303.8 L1116.1,304.0 L1118.6,304.2 L1121.5,304.4 L1124.5,304.2 L1127.6,303.6 L1130.7,302.4 L1133.8,300.4 L1136.9,297.6 L1140.2,294.4 L1143.5,291.0 L1146.7,287.7 L1150.0,284.8 L1153.3,282.1 L1156.8,279.4 L1160.2,276.8 L1163.6,274.5 L1166.7,272.6 L1169.5,271.2 L1171.9,270.5 L1174.1,270.3 L1176.0,270.6 L1177.8,271.1 L1179.5,271.7 L1181.1,272.2 L1182.6,272.6 L1183.8,273.1 L1185.0,273.6 L1186.2,274.3 L1187.4,275.0 L1188.9,276.0 L1190.6,277.3 L1192.5,279.0 L1194.5,280.9 L1196.6,282.6 L1198.6,284.0 L1200.6,284.8 L1202.6,285.0 L1204.7,284.8 L1206.8,284.2 L1208.8,283.3 L1210.7,282.2 L1212.3,281.0 L1213.6,279.5 L1214.5,277.7 L1215.3,275.6 L1216.1,273.5 L1217.0,271.3 L1218.1,269.3 L1219.5,267.5 L1220.9,265.8 L1222.5,264.2 L1224.2,262.4 L1226.0,260.2 L1227.9,257.6 L1230.0,254.3 L1232.4,250.5 L1234.8,246.4 L1237.3,242.1 L1239.5,238.0 L1241.5,234.2 L1243.1,230.6 L1244.5,227.1 L1245.8,223.7 L1246.9,220.4 L1248.1,217.4 L1249.3,214.8 L1250.6,212.5 L1251.8,210.5 L1253.0,208.7 L1254.3,207.2 L1255.6,206.0 L1257.0,205.0 L1258.5,204.5 L1260.1,204.5 L1261.8,204.8 L1263.5,205.1 L1265.1,205.3 L1266.8,205.0 L1268.4,204.3 L1269.9,203.2 L1271.4,202.0 L1273.0,200.7 L1274.7,199.4 L1276.5,198.2 L1278.6,197.1 L1280.8,195.9 L1283.2,194.8 L1285.6,193.7 L1287.9,192.5 L1290.1,191.4 L1292.3,190.2 L1294.6,188.9 L1296.8,187.6 L1298.8,186.4 L1300.5,185.3 L1301.8,184.6" fill="none" stroke="#ff00ff" stroke-width="1.7" stroke-linejoin="round" stroke-linecap="round"/>
<path d="M0.0,487.0 L1.3,487.0 L3.0,486.9 L5.1,486.8 L7.3,486.7 L9.6,486.8 L11.7,487.0 L13.8,487.4 L15.9,487.9 L18.1,488.5 L20.3,489.2 L22.4,489.8 L24.3,490.4 L26.1,490.8 L27.7,491.2 L29.2,491.6 L30.7,492.0 L32.3,492.4 L34.0,492.9 L35.8,493.6 L37.7,494.4 L39.7,495.3 L41.7,496.1 L43.7,496.8 L45.7,497.3 L47.8,497.5 L49.9,497.6 L52.1,497.5 L54.2,497.4 L56.3,497.3 L58.4,497.3 L60.4,497.4 L62.4,497.7 L64.4,497.9 L66.3,498.1 L68.2,498.2 L70.0,498.2 L71.7,498.0 L73.4,497.7 L75.0,497.4 L76.6,496.9 L78.2,496.4 L80.0,495.8 L81.8,495.3 L83.6,494.8 L85.5,494.3 L87.5,493.5 L89.6,492.3 L92.0,490.6 L94.6,488.2 L97.4,485.4 L100.4,482.1 L103.5,478.5 L106.7,474.7 L110.0,470.8 L113.4,466.6 L116.9,461.9 L120.6,457.0 L124.3,452.1 L128.0,447.3 L131.6,443.0 L135.2,439.1 L138.9,435.4 L142.5,431.9 L146.1,428.6 L149.6,425.3 L153.0,422.0 L156.2,418.5 L159.2,414.9 L162.2,411.4 L165.1,408.1 L168.0,405.4 L171.0,403.4 L174.1,402.4 L177.1,402.2 L180.1,402.5 L183.3,403.0 L186.5,403.4 L190.0,403.4 L193.7,402.9 L197.6,402.2 L201.6,401.4 L205.7,400.5 L209.8,399.7 L214.0,399.0 L218.2,398.4 L222.5,397.8 L226.8,397.3 L231.1,396.8 L235.5,396.4 L240.0,396.0 L244.6,395.6 L249.5,395.3 L254.3,395.0 L259.1,394.8 L263.6,394.8 L267.8,394.9 L271.4,395.4 L274.4,396.1 L277.2,397.0 L280.1,397.9 L283.2,398.6 L287.0,399.0 L291.5,399.1 L296.7,399.1 L302.1,399.0 L307.6,398.5 L313.0,397.6 L317.9,396.3 L322.5,394.4 L326.9,391.9 L331.1,389.0 L335.2,385.9 L339.1,382.7 L342.9,379.6 L346.4,376.3 L349.6,372.7 L352.6,369.0 L355.7,365.5 L358.9,362.4 L362.4,360.0 L366.3,358.3 L370.5,357.1 L374.9,356.3 L379.3,355.8 L383.5,355.8 L387.4,356.0 L390.9,356.7 L394.2,357.9 L397.3,359.5 L400.3,361.2 L403.5,362.9 L406.8,364.3 L410.4,365.6 L414.2,366.9 L418.1,368.2 L421.9,369.4 L425.6,370.4 L429.0,371.2 L432.0,371.8 L434.8,372.3 L437.4,372.7 L440.0,372.9 L442.8,372.8 L445.8,372.6 L449.3,372.0 L453.2,370.9 L457.2,369.7 L461.2,368.5 L464.8,367.5 L468.0,367.0 L470.4,367.0 L472.2,367.5 L473.6,368.1 L475.2,368.8 L477.2,369.4 L480.0,369.6 L483.8,369.4 L488.3,369.1 L493.3,368.5 L498.4,367.9 L503.3,367.3 L507.8,366.8 L511.8,366.5 L515.6,366.4 L519.2,366.3 L522.8,366.0 L526.4,365.3 L530.0,364.0 L533.7,362.0 L537.4,359.5 L541.1,356.6 L544.8,353.5 L548.5,350.3 L552.3,347.3 L556.3,344.1 L560.4,340.5 L564.6,336.8 L568.7,333.5 L572.5,330.9 L576.0,329.3 L578.9,328.8 L581.4,329.2 L583.7,330.2 L585.9,331.8 L588.4,333.9 L591.2,336.2 L594.5,339.0 L598.1,342.4 L601.9,346.2 L605.8,350.3 L609.7,354.4 L613.5,358.5 L617.3,362.6 L621.1,366.9 L625.0,371.4 L628.7,375.7 L632.3,379.8 L635.7,383.5 L638.7,386.9 L641.5,390.2 L644.0,393.2 L646.6,396.0 L649.4,398.3 L652.4,400.2 L655.7,401.5 L659.2,402.3 L662.9,402.7 L666.7,402.9 L670.6,402.9 L674.7,403.0 L679.1,403.1 L683.9,403.0 L688.9,402.8 L693.8,402.5 L698.4,402.1 L702.5,401.6 L706.0,401.0 L708.9,400.3 L711.6,399.5 L714.2,398.5 L716.9,397.4 L720.0,396.0 L723.5,394.3 L727.2,392.2 L731.0,389.9 L734.8,387.5 L738.6,385.3 L742.2,383.4 L745.7,381.6 L749.1,379.8 L752.5,378.1 L755.7,376.7 L758.8,375.6 L761.7,375.0 L764.2,374.8 L766.4,374.9 L768.5,375.3 L770.6,376.2 L772.9,377.5 L775.6,379.3 L778.8,381.8 L782.4,385.1 L786.2,388.9 L790.2,392.8 L794.1,396.6 L797.9,400.0 L801.6,403.1 L805.3,406.0 L808.9,408.8 L812.6,411.6 L816.3,414.2 L820.0,416.8 L823.8,419.3 L827.7,421.9 L831.5,424.3 L835.4,426.6 L839.0,428.7 L842.4,430.7 L845.4,432.6 L848.1,434.4 L850.6,436.1 L853.1,437.5 L855.9,438.5 L859.0,439.0 L862.7,438.8 L866.8,437.9 L871.1,436.6 L875.5,435.2 L879.6,434.0 L883.3,433.3 L886.5,433.1 L889.4,433.1 L892.1,433.3 L894.7,433.7 L897.3,434.2 L900.0,435.0 L902.7,436.0 L905.3,437.4 L907.8,438.9 L910.5,440.5 L913.4,442.0 L916.7,443.3 L920.5,444.4 L924.7,445.4 L929.2,446.4 L933.7,447.2 L937.9,447.8 L941.7,448.3 L944.9,448.6 L947.7,448.8 L950.2,448.9 L952.7,448.7 L955.4,448.3 L958.3,447.5 L961.6,446.5 L965.1,445.5 L968.8,444.2 L972.5,442.4 L976.2,439.9 L979.7,436.7 L983.0,432.4 L986.2,427.2 L989.3,421.3 L992.4,415.1 L995.8,408.9 L999.6,403.0 L1003.8,397.4 L1008.3,391.9 L1013.0,386.5 L1017.8,380.9 L1022.7,375.3 L1027.4,369.6 L1032.0,363.8 L1036.7,357.9 L1041.3,351.9 L1045.9,345.8 L1050.5,339.7 L1055.2,333.4 L1059.9,326.8 L1064.6,319.9 L1069.3,312.8 L1074.0,306.0 L1078.7,299.6 L1083.4,294.0 L1088.1,289.2 L1092.7,285.1 L1097.4,281.4 L1102.0,278.1 L1106.7,274.9 L1111.3,271.8 L1116.1,268.7 L1121.2,265.7 L1126.2,262.8 L1131.0,260.3 L1135.4,258.1 L1139.0,256.5 L1141.7,255.6 L1143.6,255.4 L1145.0,255.6 L1146.3,255.9 L1147.9,256.0 L1150.0,255.6 L1152.8,254.6 L1155.9,253.1 L1159.2,251.5 L1162.7,249.8 L1166.2,248.2 L1169.5,246.9 L1172.9,245.9 L1176.3,245.0 L1179.8,244.2 L1183.1,243.5 L1186.2,242.8 L1188.9,242.0 L1191.0,241.4 L1192.5,241.2 L1193.8,240.9 L1195.1,240.4 L1196.6,239.2 L1198.7,237.2 L1201.4,234.0 L1204.5,229.8 L1207.8,225.0 L1211.3,220.0 L1214.7,215.1 L1218.1,210.9 L1221.3,207.3 L1224.5,204.0 L1227.7,200.8 L1231.0,197.8 L1234.2,194.7 L1237.6,191.4 L1241.2,187.7 L1245.1,183.7 L1249.0,179.7 L1252.8,175.8 L1256.2,172.5 L1259.0,170.0 L1260.9,168.6 L1262.1,168.3 L1262.9,168.4 L1263.7,168.6 L1265.0,168.3 L1267.0,167.0 L1270.1,164.4 L1273.9,160.9 L1278.1,156.9 L1282.4,152.9 L1286.5,149.4 L1290.0,147.0 L1293.0,145.7 L1295.9,145.2 L1298.4,145.2 L1300.7,145.6 L1302.6,145.9 L1304.0,146.0" fill="none" stroke="#ff00ff" stroke-width="1.7" stroke-linejoin="round" stroke-linecap="round"/>
<path d="M0.0,474.4 L1.5,474.7 L3.7,475.2 L6.3,475.8 L9.0,476.3 L11.5,476.6 L13.6,476.8 L15.1,476.6 L16.1,476.3 L16.9,475.8 L17.9,475.2 L19.3,474.7 L21.4,474.4 L24.4,474.3 L28.1,474.2 L32.3,474.2 L36.5,474.3 L40.5,474.4 L43.8,474.4 L46.5,474.4 L48.9,474.3 L51.1,474.2 L53.0,474.1 L54.7,474.2 L56.4,474.4 L57.9,474.8 L59.1,475.2 L60.2,475.8 L61.2,476.4 L62.2,477.1 L63.3,477.8 L64.5,478.7 L65.8,479.9 L67.0,481.1 L68.3,482.1 L69.6,482.7 L71.0,482.6 L72.4,481.7 L73.8,480.2 L75.2,478.3 L76.7,476.1 L78.3,473.9 L80.0,472.0 L81.9,470.3 L83.9,468.7 L86.0,467.1 L88.1,465.4 L90.1,463.6 L92.0,461.6 L93.6,459.5 L95.0,457.6 L96.3,455.4 L97.7,452.9 L99.2,449.9 L101.0,446.0 L103.2,441.1 L105.6,435.4 L108.3,429.1 L111.0,422.5 L113.6,415.9 L116.0,409.6 L118.3,403.1 L120.6,396.1 L122.8,389.1 L124.9,382.6 L126.8,377.0 L128.5,372.8 L129.7,370.3 L130.4,369.2 L130.9,369.0 L131.6,369.3 L132.7,369.7 L134.6,369.8 L137.6,369.5 L141.6,369.2 L146.0,369.0 L150.5,369.0 L154.5,369.2 L157.6,369.8 L159.6,370.8 L160.9,372.2 L161.7,373.9 L162.4,375.6 L163.4,377.4 L165.0,379.0 L167.3,380.6 L170.0,382.3 L172.9,384.0 L176.0,385.5 L179.1,386.7 L182.0,387.5 L184.9,387.8 L187.7,387.7 L190.6,387.3 L193.5,386.7 L196.3,385.9 L199.0,385.0 L201.7,383.9 L204.4,382.4 L207.0,380.8 L209.5,379.2 L211.9,377.5 L214.0,376.0 L215.8,374.5 L217.1,373.0 L218.4,371.5 L219.6,370.1 L221.1,368.9 L223.0,368.0 L225.4,367.4 L228.1,367.0 L231.0,366.8 L234.1,366.7 L237.1,366.8 L240.0,367.0 L242.7,367.4 L245.3,368.1 L247.8,368.8 L250.5,369.7 L253.4,370.4 L256.7,371.0 L260.5,371.3 L264.9,371.3 L269.5,371.3 L274.0,371.4 L278.2,371.7 L281.7,372.6 L284.4,374.3 L286.6,376.7 L288.4,379.4 L290.1,382.0 L291.9,384.0 L294.0,385.0 L296.3,385.2 L298.7,385.1 L301.1,384.5 L303.7,383.0 L306.5,380.5 L309.5,376.8 L312.9,371.1 L316.7,363.5 L320.8,354.9 L324.7,346.2 L328.5,338.4 L331.8,332.3 L334.7,328.1 L337.3,324.9 L339.6,322.6 L341.8,320.9 L343.8,319.6 L345.7,318.4 L347.4,317.5 L348.9,317.1 L350.2,317.0 L351.4,317.3 L352.7,317.8 L354.0,318.4 L355.3,319.3 L356.5,320.6 L357.7,322.1 L359.0,323.7 L360.5,325.2 L362.4,326.7 L364.7,328.1 L367.4,329.7 L370.3,331.2 L373.4,332.6 L376.3,333.7 L379.0,334.5 L381.5,334.7 L383.9,334.4 L386.2,333.9 L388.4,333.3 L390.7,332.9 L393.0,333.0 L395.2,333.5 L397.4,334.2 L399.6,335.1 L401.8,336.2 L404.2,337.5 L406.8,339.0 L409.8,340.9 L413.3,343.3 L416.9,345.9 L420.4,348.3 L423.6,350.4 L426.3,351.8 L428.3,352.4 L429.6,352.3 L430.7,351.8 L431.7,351.2 L433.0,350.6 L434.7,350.4 L437.0,350.4 L439.7,350.5 L442.7,350.7 L445.6,350.9 L448.5,351.3 L451.0,351.8 L453.1,352.5 L455.0,353.5 L456.7,354.7 L458.4,355.7 L460.3,356.7 L462.5,357.3 L465.1,357.6 L467.9,357.7 L470.9,357.6 L474.0,357.4 L477.1,357.2 L480.0,357.0 L482.8,357.0 L485.5,357.2 L488.2,357.4 L491.0,357.3 L493.8,356.8 L496.7,355.7 L499.8,353.7 L503.0,351.0 L506.3,347.8 L509.7,344.5 L512.9,341.5 L516.0,339.0 L519.0,337.2 L521.9,335.9 L524.7,334.9 L527.5,333.8 L530.2,332.5 L532.8,330.6 L535.3,328.1 L537.5,325.1 L539.8,321.8 L542.0,318.5 L544.3,315.3 L546.7,312.6 L549.4,310.3 L552.3,308.2 L555.2,306.3 L558.1,304.6 L560.9,302.9 L563.4,301.4 L565.5,300.1 L567.3,299.2 L568.9,298.4 L570.6,297.5 L572.4,296.2 L574.5,294.5 L577.0,292.0 L579.9,288.8 L582.8,285.3 L585.8,281.8 L588.7,278.7 L591.2,276.4 L593.4,274.8 L595.4,273.7 L597.3,273.0 L599.1,272.6 L600.8,272.3 L602.4,272.2 L603.8,272.0 L605.0,271.7 L606.0,271.6 L607.2,272.0 L608.7,273.0 L610.7,275.0 L613.4,278.2 L616.8,282.5 L620.5,287.5 L624.1,292.8 L627.5,298.0 L630.2,302.8 L632.2,306.9 L633.8,310.6 L635.1,314.2 L636.1,318.1 L637.2,322.6 L638.5,327.9 L639.8,334.8 L641.2,343.1 L642.5,352.0 L643.8,360.6 L645.2,368.2 L646.8,373.7 L648.4,377.0 L650.1,378.7 L651.9,379.3 L653.8,379.2 L655.8,379.1 L658.0,379.3 L660.4,379.8 L663.0,380.2 L665.7,380.5 L668.5,380.7 L671.5,380.8 L674.7,380.7 L678.1,380.7 L681.8,380.6 L685.7,380.5 L689.6,380.1 L693.4,379.3 L697.0,378.0 L700.4,375.9 L703.6,373.1 L706.8,370.0 L710.0,366.7 L713.1,363.7 L716.4,361.2 L719.7,359.1 L722.9,357.1 L726.2,355.2 L729.6,353.8 L733.0,353.0 L736.7,352.8 L740.7,353.8 L745.1,356.1 L749.6,358.8 L754.0,361.5 L758.1,363.4 L761.7,364.0 L764.7,362.9 L767.2,360.6 L769.3,357.5 L771.4,354.2 L773.4,351.1 L775.6,348.7 L777.9,346.9 L780.1,345.3 L782.4,343.9 L784.7,342.8 L787.0,342.0 L789.5,341.7 L792.2,341.7 L795.0,341.9 L797.9,342.5 L800.7,343.5 L803.6,345.1 L806.2,347.3 L808.6,350.2 L810.9,353.8 L813.1,358.0 L815.3,362.5 L817.6,367.3 L820.0,372.3 L822.6,377.9 L825.4,384.4 L828.2,391.1 L831.1,397.5 L834.0,403.0 L836.8,407.0 L839.4,409.2 L841.8,410.0 L844.1,409.8 L846.7,409.2 L849.8,408.6 L853.5,408.5 L858.2,408.7 L863.7,408.9 L869.6,409.2 L875.7,409.4 L881.5,409.6 L886.8,409.8 L891.6,409.9 L896.2,409.8 L900.6,409.7 L904.7,409.8 L908.5,410.2 L911.9,411.2 L914.8,413.0 L917.2,415.5 L919.3,418.3 L921.3,421.2 L923.4,423.5 L925.8,425.0 L928.6,425.4 L931.7,425.0 L934.9,424.2 L938.0,423.3 L941.1,422.5 L943.9,422.4 L946.5,423.1 L948.9,424.3 L951.3,425.7 L953.5,427.1 L955.7,427.9 L957.8,428.0 L959.8,427.6 L961.5,427.1 L963.2,426.1 L965.0,424.3 L966.9,421.4 L969.0,416.9 L971.5,410.2 L974.1,401.4 L977.0,391.5 L979.9,381.3 L982.8,371.8 L985.6,364.0 L988.3,357.9 L991.1,352.7 L993.8,348.2 L996.5,344.1 L999.4,340.2 L1002.3,336.2 L1005.5,332.0 L1008.8,327.7 L1012.2,323.7 L1015.6,319.9 L1018.8,316.6 L1021.8,313.9 L1024.5,312.0 L1027.1,310.9 L1029.6,310.2 L1031.9,309.8 L1033.9,309.2 L1035.7,308.3 L1037.1,307.4 L1038.1,306.7 L1038.9,306.0 L1039.6,304.9 L1040.5,302.8 L1041.7,299.6 L1043.3,294.5 L1045.1,287.8 L1047.0,280.2 L1049.0,272.6 L1051.0,265.8 L1052.9,260.7 L1054.7,257.3 L1056.4,255.1 L1058.1,253.6 L1059.9,252.7 L1061.8,251.9 L1064.0,250.9 L1066.5,249.8 L1069.2,248.8 L1072.0,248.0 L1074.9,247.3 L1077.9,246.9 L1080.7,246.8 L1083.5,247.2 L1086.4,248.0 L1089.2,249.1 L1092.0,250.1 L1094.8,250.8 L1097.4,250.9 L1099.8,250.3 L1102.1,249.4 L1104.4,248.0 L1106.6,246.4 L1108.9,244.6 L1111.3,242.6 L1113.9,240.1 L1116.6,236.9 L1119.3,233.6 L1122.1,230.3 L1125.0,227.7 L1128.0,225.9 L1131.1,225.3 L1134.5,225.6 L1137.9,226.4 L1141.2,227.4 L1144.4,228.3 L1147.4,228.7 L1150.0,228.7 L1152.4,228.5 L1154.7,228.1 L1156.9,227.7 L1159.2,227.1 L1161.7,226.4 L1164.5,225.6 L1167.5,224.7 L1170.6,223.7 L1173.7,222.5 L1176.6,221.2 L1179.2,219.6 L1181.6,217.7 L1183.7,215.5 L1185.8,213.2 L1187.7,210.7 L1189.4,208.3 L1190.9,206.0 L1192.2,204.0 L1193.1,202.1 L1193.9,200.3 L1194.7,198.4 L1195.6,196.1 L1196.7,193.4 L1198.1,190.0 L1199.8,186.1 L1201.6,181.9 L1203.3,177.6 L1205.0,173.5 L1206.4,170.0 L1207.2,167.0 L1207.5,164.4 L1207.6,162.0 L1208.1,159.8 L1209.4,157.5 L1212.0,155.0 L1216.4,152.5 L1222.2,150.0 L1228.9,147.4 L1235.7,144.8 L1242.0,142.0 L1247.0,139.0 L1250.7,135.6 L1253.5,131.7 L1255.8,127.8 L1257.7,123.8 L1259.7,120.2 L1262.0,117.0 L1264.4,114.3 L1266.6,111.8 L1268.9,109.6 L1271.3,107.7 L1273.9,106.1 L1277.0,105.0 L1280.9,104.4 L1285.5,104.4 L1290.4,104.8 L1295.1,105.3 L1299.2,105.7 L1302.0,106.0" fill="none" stroke="#ff00ff" stroke-width="1.7" stroke-linejoin="round" stroke-linecap="round"/>
<text x="922" y="100" font-size="16.5" fill="#fff">(0,00 %)</text>
<text x="922" y="187" font-size="16.5" fill="#fff">(23,60 %)</text>
<text x="922" y="241" font-size="16.5" fill="#fff">(38,20 %)</text>
<text x="922" y="285" font-size="16.5" fill="#fff">(50,00 %)</text>
<text x="922" y="329" font-size="16.5" fill="#fff">(61,80 %)</text>
<text x="922" y="472" font-size="16.5" fill="#fff">(100,00 %)</text>
<line x1="0" y1="460" x2="458" y2="546" stroke="#ffa000" stroke-width="4"/>
<line x1="1182.5" y1="245" x2="1334.6" y2="81.5" stroke="#ffa000" stroke-width="3.2"/>
<line x1="1182.5" y1="245" x2="1340.4" y2="81.5" stroke="#ffa000" stroke-width="3.2"/>
<path d="M1303.3,85 L1308.2,80.4 L1313,85 L1313,90.4 L1303.3,90.4 Z" fill="#aaaaaa"/>
<ellipse cx="1306" cy="183" rx="28.5" ry="17.3" fill="none" stroke="#f8f000" stroke-width="4"/>
<line x1="0" y1="562.3" x2="1491" y2="562.3" stroke="#1ab4ee" stroke-width="2"/>
<line x1="0" y1="577" x2="1491" y2="577" stroke="#bbbbbb" stroke-width="1.6" stroke-dasharray="2 2"/>
<line x1="0" y1="590.6" x2="1491" y2="590.6" stroke="#ffa000" stroke-width="2"/>
<path d="M0.0,571.0 L1.5,571.1 L3.0,571.2 L4.5,571.6 L6.0,572.1 L7.5,572.7 L9.0,573.4 L10.5,574.1 L12.0,574.9 L13.5,575.6 L15.0,576.5 L16.5,577.7 L18.0,579.0 L19.5,580.5 L21.0,582.2 L22.5,583.8 L24.0,585.5 L25.5,587.2 L27.0,588.7 L28.5,589.8 L30.0,590.7 L31.5,591.2 L33.0,591.5 L34.5,591.7 L36.0,591.9 L37.5,592.1 L39.0,592.3 L40.5,592.5 L42.0,592.6 L43.5,592.8 L45.0,593.0 L46.5,592.9 L48.0,592.0 L49.5,590.4 L51.0,588.1 L52.5,585.1 L54.0,581.6 L55.5,578.2 L57.0,574.8 L58.5,571.5 L60.0,568.7 L61.5,566.5 L63.0,564.8 L64.5,564.3 L66.0,564.8 L67.5,566.1 L69.0,567.9 L70.5,570.5 L72.0,572.3 L73.5,573.4 L75.0,573.7 L76.5,572.9 L78.0,570.9 L79.5,568.4 L81.0,565.6 L82.5,563.2 L84.0,561.2 L85.5,560.0 L87.0,559.4 L88.5,559.4 L90.0,559.3 L91.5,559.2 L93.0,559.1 L94.5,558.9 L96.0,558.7 L97.5,558.5 L99.0,558.3 L100.5,558.1 L102.0,557.9 L103.5,557.7 L105.0,557.5 L106.5,557.3 L108.0,557.1 L109.5,556.8 L111.0,556.6 L112.5,556.3 L114.0,556.1 L115.5,555.8 L117.0,555.5 L118.5,555.3 L120.0,555.0 L121.5,554.8 L123.0,554.7 L124.5,554.6 L126.0,554.7 L127.5,554.8 L129.0,555.0 L130.5,555.1 L132.0,555.4 L133.5,555.8 L135.0,556.4 L136.5,557.2 L138.0,558.0 L139.5,558.9 L141.0,559.8 L142.5,560.6 L144.0,561.3 L145.5,562.0 L147.0,562.6 L148.5,563.1 L150.0,563.7 L151.5,564.1 L153.0,564.1 L154.5,563.8 L156.0,563.3 L157.5,562.4 L159.0,561.4 L160.5,560.5 L162.0,559.8 L163.5,559.4 L165.0,559.1 L166.5,559.5 L168.0,560.5 L169.5,561.9 L171.0,563.7 L172.5,566.0 L174.0,568.3 L175.5,570.6 L177.0,572.9 L178.5,575.1 L180.0,577.2 L181.5,579.3 L183.0,581.2 L184.5,583.2 L186.0,585.2 L187.5,587.2 L189.0,589.2 L190.5,591.0 L192.0,591.5 L193.5,590.8 L195.0,589.0 L196.5,585.9 L198.0,581.8 L199.5,577.7 L201.0,573.7 L202.5,569.6 L204.0,566.2 L205.5,563.4 L207.0,561.3 L208.5,559.8 L210.0,559.0 L211.5,558.2 L213.0,557.5 L214.5,556.8 L216.0,556.0 L217.5,555.2 L219.0,554.8 L220.5,554.6 L222.0,554.7 L223.5,555.2 L225.0,555.9 L226.5,556.7 L228.0,557.5 L229.5,558.6 L231.0,560.0 L232.5,561.6 L234.0,563.5 L235.5,565.5 L237.0,567.6 L238.5,569.4 L240.0,571.0 L241.5,572.1 L243.0,573.0 L244.5,573.6 L246.0,574.0 L247.5,574.4 L249.0,574.8 L250.5,575.4 L252.0,576.3 L253.5,577.6 L255.0,579.3 L256.5,581.3 L258.0,583.6 L259.5,585.8 L261.0,587.7 L262.5,589.0 L264.0,589.8 L265.5,590.0 L267.0,589.6 L268.5,589.1 L270.0,588.6 L271.5,588.1 L273.0,587.6 L274.5,587.1 L276.0,586.8 L277.5,586.8 L279.0,587.0 L280.5,587.4 L282.0,588.1 L283.5,588.9 L285.0,589.6 L286.5,590.4 L288.0,591.1 L289.5,591.9 L291.0,591.8 L292.5,590.8 L294.0,588.8 L295.5,585.8 L297.0,581.8 L298.5,577.7 L300.0,573.5 L301.5,569.5 L303.0,566.2 L304.5,563.4 L306.0,561.1 L307.5,559.5 L309.0,558.3 L310.5,557.3 L312.0,556.5 L313.5,555.8 L315.0,555.4 L316.5,555.0 L318.0,554.8 L319.5,554.6 L321.0,554.4 L322.5,554.4 L324.0,554.4 L325.5,554.4 L327.0,554.4 L328.5,554.4 L330.0,554.4 L331.5,554.4 L333.0,554.4 L334.5,554.4 L336.0,554.4 L337.5,554.6 L339.0,554.9 L340.5,555.4 L342.0,556.1 L343.5,556.9 L345.0,557.7 L346.5,558.5 L348.0,559.3 L349.5,560.1 L351.0,560.9 L352.5,561.7 L354.0,562.5 L355.5,563.3 L357.0,564.0 L358.5,564.8 L360.0,565.5 L361.5,566.5 L363.0,567.9 L364.5,569.7 L366.0,571.9 L367.5,574.5 L369.0,577.3 L370.5,580.0 L372.0,582.5 L373.5,584.6 L375.0,586.4 L376.5,587.8 L378.0,588.9 L379.5,589.4 L381.0,589.4 L382.5,588.8 L384.0,587.6 L385.5,585.9 L387.0,584.2 L388.5,582.4 L390.0,580.7 L391.5,578.9 L393.0,577.8 L394.5,577.7 L396.0,578.6 L397.5,580.4 L399.0,583.1 L400.5,586.2 L402.0,589.1 L403.5,591.2 L405.0,592.6 L406.5,593.2 L408.0,593.0 L409.5,592.2 L411.0,591.3 L412.5,590.5 L414.0,589.7 L415.5,588.9 L417.0,588.2 L418.5,587.6 L420.0,587.0 L421.5,586.5 L423.0,585.9 L424.5,585.0 L426.0,583.7 L427.5,582.0 L429.0,580.0 L430.5,577.6 L432.0,575.2 L433.5,572.8 L435.0,570.4 L436.5,568.4 L438.0,566.8 L439.5,565.7 L441.0,565.2 L442.5,565.5 L444.0,566.2 L445.5,567.3 L447.0,568.6 L448.5,570.0 L450.0,571.5 L451.5,572.7 L453.0,573.5 L454.5,573.8 L456.0,573.7 L457.5,573.6 L459.0,573.9 L460.5,574.9 L462.0,576.4 L463.5,578.5 L465.0,580.8 L466.5,582.9 L468.0,584.6 L469.5,585.9 L471.0,586.8 L472.5,587.4 L474.0,587.9 L475.5,588.4 L477.0,588.9 L478.5,589.4 L480.0,589.9 L481.5,590.3 L483.0,590.5 L484.5,590.6 L486.0,590.5 L487.5,590.3 L489.0,589.6 L490.5,588.3 L492.0,586.5 L493.5,584.1 L495.0,581.2 L496.5,578.2 L498.0,575.2 L499.5,572.2 L501.0,569.2 L502.5,566.2 L504.0,563.6 L505.5,561.5 L507.0,559.8 L508.5,558.6 L510.0,557.8 L511.5,557.3 L513.0,557.2 L514.5,557.4 L516.0,557.9 L517.5,558.8 L519.0,559.6 L520.5,560.5 L522.0,561.4 L523.5,562.3 L525.0,563.1 L526.5,563.7 L528.0,564.0 L529.5,564.1 L531.0,563.8 L532.5,563.2 L534.0,562.7 L535.5,562.1 L537.0,561.5 L538.5,561.0 L540.0,560.4 L541.5,559.7 L543.0,559.1 L544.5,558.5 L546.0,557.9 L547.5,557.2 L549.0,556.6 L550.5,556.1 L552.0,555.7 L553.5,555.5 L555.0,555.4 L556.5,555.6 L558.0,555.8 L559.5,556.1 L561.0,556.3 L562.5,556.5 L564.0,556.7 L565.5,556.7 L567.0,556.6 L568.5,556.4 L570.0,556.1 L571.5,555.8 L573.0,555.6 L574.5,555.9 L576.0,556.4 L577.5,557.5 L579.0,559.4 L580.5,562.0 L582.0,565.1 L583.5,568.7 L585.0,572.8 L586.5,576.9 L588.0,580.5 L589.5,583.0 L591.0,584.3 L592.5,584.6 L594.0,584.1 L595.5,583.6 L597.0,583.4 L598.5,583.7 L600.0,584.3 L601.5,584.9 L603.0,585.3 L604.5,585.6 L606.0,585.7 L607.5,585.6 L609.0,585.4 L610.5,585.3 L612.0,585.1 L613.5,584.9 L615.0,584.7 L616.5,584.6 L618.0,584.3 L619.5,584.1 L621.0,583.8 L622.5,583.5 L624.0,583.2 L625.5,582.8 L627.0,582.5 L628.5,582.2 L630.0,581.9 L631.5,581.4 L633.0,580.7 L634.5,579.7 L636.0,578.4 L637.5,576.8 L639.0,575.0 L640.5,573.3 L642.0,572.1 L643.5,571.5 L645.0,571.7 L646.5,572.5 L648.0,574.1 L649.5,575.7 L651.0,577.5 L652.5,579.2 L654.0,580.9 L655.5,582.4 L657.0,583.8 L658.5,585.1 L660.0,586.2 L661.5,587.2 L663.0,588.3 L664.5,589.4 L666.0,590.4 L667.5,591.1 L669.0,591.6 L670.5,591.8 L672.0,591.7 L673.5,591.4 L675.0,590.6 L676.5,589.4 L678.0,587.8 L679.5,585.8 L681.0,583.4 L682.5,581.1 L684.0,578.7 L685.5,576.4 L687.0,574.0 L688.5,571.6 L690.0,569.3 L691.5,567.1 L693.0,565.1 L694.5,563.4 L696.0,561.9 L697.5,560.7 L699.0,559.6 L700.5,558.5 L702.0,557.6 L703.5,556.8 L705.0,556.2 L706.5,555.9 L708.0,555.7 L709.5,555.5 L711.0,555.3 L712.5,555.1 L714.0,554.9 L715.5,554.8 L717.0,554.7 L718.5,554.7 L720.0,554.8 L721.5,554.9 L723.0,555.2 L724.5,555.5 L726.0,555.8 L727.5,556.2 L729.0,556.8 L730.5,557.4 L732.0,558.2 L733.5,559.0 L735.0,559.9 L736.5,560.8 L738.0,561.6 L739.5,562.5 L741.0,563.3 L742.5,564.2 L744.0,565.0 L745.5,565.7 L747.0,566.4 L748.5,567.1 L750.0,567.7 L751.5,568.2 L753.0,568.8 L754.5,569.7 L756.0,571.0 L757.5,572.6 L759.0,574.6 L760.5,576.8 L762.0,578.8 L763.5,580.7 L765.0,582.4 L766.5,583.9 L768.0,585.3 L769.5,586.7 L771.0,588.1 L772.5,589.5 L774.0,590.8 L775.5,592.2 L777.0,593.2 L778.5,593.8 L780.0,594.1 L781.5,594.0 L783.0,593.6 L784.5,593.2 L786.0,592.8 L787.5,592.5 L789.0,592.1 L790.5,591.6 L792.0,591.0 L793.5,590.1 L795.0,589.0 L796.5,587.7 L798.0,586.3 L799.5,585.4 L801.0,584.8 L802.5,584.6 L804.0,584.9 L805.5,585.5 L807.0,586.1 L808.5,586.7 L810.0,587.3 L811.5,587.7 L813.0,587.8 L814.5,587.7 L816.0,587.4 L817.5,586.9 L819.0,586.3 L820.5,585.7 L822.0,584.6 L823.5,583.1 L825.0,581.2 L826.5,578.8 L828.0,576.2 L829.5,573.6 L831.0,571.0 L832.5,568.3 L834.0,565.7 L835.5,563.2 L837.0,561.2 L838.5,559.6 L840.0,558.5 L841.5,557.8 L843.0,557.4 L844.5,557.0 L846.0,556.6 L847.5,556.2 L849.0,555.9 L850.5,555.7 L852.0,555.6 L853.5,555.6 L855.0,555.8 L856.5,555.9 L858.0,556.2 L859.5,557.2 L861.0,558.8 L862.5,560.9 L864.0,563.7 L865.5,566.8 L867.0,570.0 L868.5,573.1 L870.0,576.2 L871.5,578.7 L873.0,580.5 L874.5,581.7 L876.0,581.9 L877.5,581.1 L879.0,579.8 L880.5,578.0 L882.0,575.8 L883.5,573.5 L885.0,571.3 L886.5,569.7 L888.0,568.7 L889.5,568.4 L891.0,568.7 L892.5,569.5 L894.0,570.4 L895.5,571.2 L897.0,572.1 L898.5,572.9 L900.0,573.8 L901.5,574.6 L903.0,575.6 L904.5,576.6 L906.0,577.8 L907.5,579.0 L909.0,580.3 L910.5,581.6 L912.0,582.9 L913.5,584.2 L915.0,585.5 L916.5,586.8 L918.0,588.1 L919.5,589.0 L921.0,589.3 L922.5,589.1 L924.0,588.3 L925.5,586.9 L927.0,585.4 L928.5,584.0 L930.0,582.5 L931.5,581.2 L933.0,580.6 L934.5,580.7 L936.0,581.4 L937.5,582.7 L939.0,584.4 L940.5,585.4 L942.0,585.2 L943.5,583.9 L945.0,581.4 L946.5,577.7 L948.0,573.6 L949.5,569.5 L951.0,566.1 L952.5,563.5 L954.0,561.6 L955.5,560.5 L957.0,560.2 L958.5,559.9 L960.0,559.5 L961.5,559.2 L963.0,558.9 L964.5,558.7 L966.0,558.5 L967.5,558.4 L969.0,558.2 L970.5,558.1 L972.0,558.0 L973.5,557.9 L975.0,557.7 L976.5,557.6 L978.0,557.3 L979.5,557.0 L981.0,556.7 L982.5,556.2 L984.0,555.8 L985.5,555.3 L987.0,555.0 L988.5,554.9 L990.0,555.0 L991.5,555.2 L993.0,555.7 L994.5,556.1 L996.0,556.5 L997.5,557.0 L999.0,557.4 L1000.5,557.8 L1002.0,558.1 L1003.5,558.2 L1005.0,558.2 L1006.5,558.0 L1008.0,557.6 L1009.5,557.2 L1011.0,556.9 L1012.5,556.6 L1014.0,556.3 L1015.5,556.1 L1017.0,556.0 L1018.5,555.9 L1020.0,555.9 L1021.5,555.8 L1023.0,555.7 L1024.5,555.6 L1026.0,555.6 L1027.5,555.5 L1029.0,555.6 L1030.5,555.7 L1032.0,555.8 L1033.5,556.0 L1035.0,556.2 L1036.5,556.4 L1038.0,556.6 L1039.5,556.8 L1041.0,557.0 L1042.5,557.2 L1044.0,557.3 L1045.5,557.5 L1047.0,557.6 L1048.5,557.6 L1050.0,557.4 L1051.5,557.2 L1053.0,556.9 L1054.5,556.8 L1056.0,557.1 L1057.5,557.6 L1059.0,558.4 L1060.5,559.4 L1062.0,560.5 L1063.5,561.5 L1065.0,562.6 L1066.5,563.5 L1068.0,564.3 L1069.5,564.9 L1071.0,565.3 L1072.5,565.6 L1074.0,565.8 L1075.5,566.1 L1077.0,566.3 L1078.5,566.5 L1080.0,566.5 L1081.5,566.4 L1083.0,566.1 L1084.5,565.6 L1086.0,565.2 L1087.5,564.7 L1089.0,564.4 L1090.5,564.3 L1092.0,564.6 L1093.5,565.0 L1095.0,565.8 L1096.5,566.5 L1098.0,567.2 L1099.5,567.4 L1101.0,567.1 L1102.5,566.4 L1104.0,565.3 L1105.5,563.8 L1107.0,562.3 L1108.5,561.0 L1110.0,559.9 L1111.5,559.1 L1113.0,558.6 L1114.5,558.4 L1116.0,558.3 L1117.5,558.1 L1119.0,558.2 L1120.5,558.3 L1122.0,558.6 L1123.5,559.0 L1125.0,559.5 L1126.5,560.0 L1128.0,560.6 L1129.5,561.1 L1131.0,561.8 L1132.5,562.7 L1134.0,563.9 L1135.5,565.3 L1137.0,566.9 L1138.5,568.6 L1140.0,570.2 L1141.5,571.8 L1143.0,573.3 L1144.5,574.7 L1146.0,576.0 L1147.5,577.2 L1149.0,578.4 L1150.5,579.6 L1152.0,580.9 L1153.5,581.3 L1155.0,580.8 L1156.5,579.3 L1158.0,576.9 L1159.5,573.4 L1161.0,569.7 L1162.5,566.0 L1164.0,563.1 L1165.5,561.2 L1167.0,560.0 L1168.5,559.7 L1170.0,560.2 L1171.5,560.7 L1173.0,561.1 L1174.5,561.3 L1176.0,561.4 L1177.5,561.2 L1179.0,561.0 L1180.5,560.6 L1182.0,560.2 L1183.5,559.8 L1185.0,559.4 L1186.5,559.1 L1188.0,558.7 L1189.5,558.4 L1191.0,558.0 L1192.5,557.7 L1194.0,557.4 L1195.5,557.1 L1197.0,556.8 L1198.5,556.5 L1200.0,556.2 L1201.5,556.0 L1203.0,555.8 L1204.5,555.8 L1206.0,555.9 L1207.5,556.2 L1209.0,556.5 L1210.5,556.8 L1212.0,557.2 L1213.5,557.5 L1215.0,557.8 L1216.5,558.2 L1218.0,558.5 L1219.5,558.8 L1221.0,559.2 L1222.5,559.5 L1224.0,559.8 L1225.5,559.8 L1227.0,559.6 L1228.5,559.2 L1230.0,558.8 L1231.5,558.5 L1233.0,558.4 L1234.5,558.4 L1236.0,558.7 L1237.5,558.9 L1239.0,559.2 L1240.5,559.4 L1242.0,559.6 L1243.5,559.6 L1245.0,559.4 L1246.5,559.2 L1248.0,558.7 L1249.5,558.3 L1251.0,557.9 L1252.5,557.6 L1254.0,557.6 L1255.5,557.8 L1257.0,558.1 L1258.5,558.6 L1260.0,559.1 L1261.5,559.3 L1263.0,559.4 L1264.5,559.3 L1266.0,558.9 L1267.5,558.5 L1269.0,558.0 L1270.5,557.9 L1272.0,558.3 L1273.5,559.2 L1275.0,560.6 L1276.5,562.4 L1278.0,564.2 L1279.5,565.6 L1281.0,566.7 L1282.5,567.5 L1284.0,568.3 L1285.5,569.4 L1287.0,571.0 L1288.5,573.0 L1290.0,575.5 L1291.5,578.3 L1293.0,581.2 L1294.5,583.8 L1296.0,586.2 L1297.5,588.2 L1299.0,589.8 L1300.5,590.9 L1302.0,591.4 L1303.5,591.9" fill="none" stroke="#ff0000" stroke-width="2.2" stroke-linejoin="round" stroke-linecap="round"/>
<path d="M0.0,571.0 L12.4,577.0 L24.9,591.0 L44.8,593.5 L57.3,565.0 L62.2,563.0 L69.7,576.0 L74.7,571.0 L79.7,559.4 L87.0,559.4 L104.6,557.0 L119.5,554.4 L129.5,555.4 L139.4,561.2 L149.4,565.0 L159.3,558.7 L164.3,559.4 L174.3,575.0 L189.2,594.8 L201.6,561.2 L216.6,553.7 L226.5,558.7 L236.5,572.4 L249.0,576.0 L258.9,591.0 L273.8,586.0 L288.8,593.5 L300.0,562.4 L307.5,556.2 L315.0,554.4 L334.9,554.4 L349.8,562.4 L359.7,567.4 L369.7,586.0 L377.2,591.0 L390.9,574.9 L400.8,594.8 L412.0,588.5 L422.0,584.8 L434.4,565.0 L439.4,565.0 L449.4,574.9 L455.6,572.4 L464.3,586.0 L479.2,591.0 L486.7,589.8 L501.6,560.0 L509.1,556.2 L524.0,564.9 L534.0,561.2 L548.9,555.0 L561.4,557.0 L571.3,555.0 L576.3,560.0 L586.3,587.3 L591.3,582.3 L600.0,586.0 L614.9,584.3 L629.9,581.0 L639.8,569.4 L644.8,574.9 L652.3,583.6 L664.7,592.3 L672.2,591.0 L689.6,563.6 L699.6,556.2 L714.5,554.4 L724.5,556.2 L741.9,566.1 L751.9,569.9 L759.3,581.0 L774.3,594.8 L789.2,591.0 L796.7,583.6 L809.1,588.5 L819.1,584.8 L834.0,558.7 L846.5,555.4 L856.4,556.2 L868.9,582.3 L873.8,582.3 L883.8,566.9 L900.0,576.0 L917.4,591.0 L929.9,578.6 L938.6,588.5 L948.5,561.2 L959.7,558.7 L974.7,557.4 L984.6,554.4 L999.6,558.7 L1009.5,556.2 L1024.5,555.4 L1044.4,557.9 L1051.9,556.2 L1064.3,564.9 L1076.7,566.9 L1086.7,563.6 L1096.7,568.6 L1106.6,558.7 L1116.6,557.9 L1129.0,562.4 L1139.0,573.6 L1151.4,583.6 L1161.4,558.7 L1171.3,561.9 L1183.8,558.7 L1200.0,555.4 L1214.9,558.7 L1222.4,560.4 L1227.3,557.9 L1239.8,560.0 L1249.7,557.0 L1258.5,560.0 L1268.4,557.0 L1275.9,566.9 L1282.1,568.6 L1287.1,577.3 L1292.1,587.3 L1297.0,591.8 L1304.5,593.5" fill="none" stroke="#ffffff" stroke-width="1.8" stroke-linejoin="round" stroke-linecap="round"/>
<path d="M90.5,624.7 L90.5,624.6 L91.0,624.3 L91.5,624.0 L92.0,623.7 L92.5,623.3 L93.0,623.0 L93.5,622.7 L94.0,622.4 L94.5,622.1 L95.0,621.9 L95.5,621.8 L96.0,621.7 L96.5,621.7 L97.0,621.6 L97.5,621.5 L98.0,621.4 L98.5,621.3 L99.0,621.2 L99.5,621.1 L100.0,621.0 L100.5,620.9 L101.0,620.8 L101.5,620.8 L102.0,620.7 L102.5,620.6 L103.0,620.5 L103.5,620.4 L104.0,620.3 L104.5,620.2 L105.0,620.6 L105.5,621.0 L106.0,621.5 L106.5,621.9 L107.0,622.4 L107.5,622.8 L108.0,623.3 L108.5,623.7 L109.0,624.2 L109.5,624.6 L110.0,624.1 L110.5,623.6 L111.0,623.1 L111.5,622.6 L112.0,622.2 L112.5,621.7 L113.0,621.2 L113.5,620.7 L114.0,620.2 L114.5,619.7 L115.0,619.7 L115.5,619.7 L116.0,619.6 L116.5,619.6 L117.0,619.6 L117.5,619.6 L118.0,619.5 L118.5,619.5 L119.0,619.5 L119.5,619.5 L120.0,619.4 L120.5,619.4 L121.0,619.4 L121.5,619.4 L122.0,619.3 L122.5,619.3 L123.0,619.3 L123.5,619.2 L124.0,619.2 L124.5,619.2 L125.0,619.5 L125.5,619.7 L126.0,620.0 L126.5,620.3 L127.0,620.6 L127.5,620.8 L128.0,621.1 L128.5,621.4 L129.0,621.7 L129.5,621.9 L130.0,622.2 L130.5,622.5 L131.0,622.7 L131.5,623.0 L132.0,623.3 L132.5,623.6 L133.0,623.8 L133.5,624.1 L134.0,624.4 L134.5,624.6 L135.0,624.6 L135.5,624.6 L136.0,624.6 L136.5,624.6 L137.0,624.6 L137.5,624.6 L138.0,624.6 L138.5,624.6 L139.0,624.6 L139.5,624.6 L140.0,624.6 L140.5,624.6 L141.0,624.6 L141.5,624.6 L142.0,624.6 L142.5,624.6 L143.0,624.6 L143.5,624.6 L144.0,624.6 L144.5,624.6 L145.0,624.6 L145.5,624.6 L146.0,624.6 L146.5,624.6 L147.0,624.6 L147.5,624.6 L148.0,624.6 L148.5,624.6 L149.0,624.6 L149.5,624.5 L150.0,624.2 L150.5,623.8 L151.0,623.4 L151.5,623.1 L152.0,622.7 L152.5,622.3 L153.0,622.0 L153.5,621.6 L154.0,621.2 L154.5,621.0 L155.0,621.1 L155.5,621.1 L156.0,621.2 L156.5,621.2 L157.0,621.3 L157.5,621.3 L158.0,621.4 L158.5,621.4 L159.0,621.5 L159.5,621.5 L160.0,621.6 L160.5,621.6 L161.0,621.7 L161.5,621.7 L162.0,621.8 L162.5,621.8 L163.0,621.9 L163.5,621.9 L164.0,622.0 L164.5,622.3 L165.0,622.9 L165.5,623.5 L166.0,624.1 L166.0,624.7 Z" fill="#0b5a74"/>
<path d="M214.5,624.7 L214.5,624.7 L215.0,624.0 L215.5,623.4 L216.0,622.8 L216.5,622.1 L217.0,622.3 L217.5,622.6 L218.0,622.9 L218.5,623.3 L219.0,623.6 L219.5,624.0 L220.0,624.3 L220.5,624.6 L220.5,624.7 Z" fill="#0b5a74"/>
<path d="M303.0,624.7 L303.0,624.7 L303.5,624.5 L304.0,624.3 L304.5,624.1 L305.0,623.9 L305.5,623.7 L306.0,623.5 L306.5,623.3 L307.0,623.1 L307.5,622.9 L308.0,622.7 L308.5,622.5 L309.0,622.3 L309.5,622.1 L310.0,621.9 L310.5,621.7 L311.0,621.5 L311.5,621.3 L312.0,621.1 L312.5,620.9 L313.0,620.7 L313.5,620.6 L314.0,620.5 L314.5,620.3 L315.0,620.2 L315.5,620.0 L316.0,619.9 L316.5,619.8 L317.0,619.6 L317.5,619.5 L318.0,619.3 L318.5,619.2 L319.0,619.1 L319.5,618.9 L320.0,618.8 L320.5,618.6 L321.0,618.5 L321.5,618.4 L322.0,618.2 L322.5,618.1 L323.0,617.9 L323.5,617.8 L324.0,617.7 L324.5,617.5 L325.0,617.4 L325.5,617.2 L326.0,617.1 L326.5,617.0 L327.0,616.8 L327.5,616.7 L328.0,616.7 L328.5,616.8 L329.0,616.8 L329.5,616.8 L330.0,616.9 L330.5,616.9 L331.0,616.9 L331.5,617.0 L332.0,617.0 L332.5,617.0 L333.0,617.1 L333.5,617.1 L334.0,617.1 L334.5,617.2 L335.0,617.4 L335.5,618.1 L336.0,618.9 L336.5,619.6 L337.0,620.4 L337.5,621.1 L338.0,621.9 L338.5,622.6 L339.0,623.4 L339.5,624.1 L340.0,624.6 L340.0,624.7 Z" fill="#0b5a74"/>
<path d="M501.5,624.7 L501.5,624.6 L502.0,624.3 L502.5,624.1 L503.0,623.8 L503.5,623.6 L504.0,623.3 L504.5,623.1 L505.0,622.8 L505.5,622.6 L506.0,622.3 L506.5,622.1 L507.0,622.5 L507.5,623.2 L508.0,623.8 L508.5,624.4 L508.5,624.7 Z" fill="#0b5a74"/>
<path d="M536.5,624.7 L536.5,624.6 L537.0,624.4 L537.5,624.1 L538.0,623.9 L538.5,623.6 L539.0,623.4 L539.5,623.1 L540.0,622.9 L540.5,622.6 L541.0,622.4 L541.5,622.1 L542.0,621.9 L542.5,621.6 L543.0,621.4 L543.5,621.1 L544.0,620.9 L544.5,621.0 L545.0,621.1 L545.5,621.2 L546.0,621.2 L546.5,621.3 L547.0,621.4 L547.5,621.5 L548.0,621.6 L548.5,621.7 L549.0,621.7 L549.5,621.8 L550.0,621.9 L550.5,622.0 L551.0,622.1 L551.5,622.2 L552.0,622.2 L552.5,622.3 L553.0,622.4 L553.5,622.5 L554.0,622.6 L554.5,622.7 L555.0,622.7 L555.5,622.8 L556.0,622.9 L556.5,623.0 L557.0,623.1 L557.5,623.2 L558.0,623.2 L558.5,623.3 L559.0,623.4 L559.5,623.1 L560.0,622.9 L560.5,622.7 L561.0,622.5 L561.5,622.3 L562.0,622.1 L562.5,621.9 L563.0,621.7 L563.5,621.4 L564.0,621.2 L564.5,621.0 L565.0,620.8 L565.5,620.6 L566.0,620.4 L566.5,620.2 L567.0,620.0 L567.5,619.7 L568.0,620.0 L568.5,620.4 L569.0,620.7 L569.5,621.1 L570.0,621.5 L570.5,621.8 L571.0,622.2 L571.5,622.6 L572.0,623.0 L572.5,623.3 L572.5,624.7 Z" fill="#0b5a74"/>
<path d="M707.0,624.7 L707.0,624.6 L707.5,624.5 L708.0,624.4 L708.5,624.3 L709.0,624.2 L709.5,624.1 L710.0,624.0 L710.5,623.9 L711.0,623.8 L711.5,623.7 L712.0,623.6 L712.5,623.5 L713.0,623.4 L713.5,623.3 L714.0,623.2 L714.5,623.1 L715.0,623.0 L715.5,622.9 L716.0,622.8 L716.5,622.7 L717.0,622.6 L717.5,622.9 L718.0,623.3 L718.5,623.6 L719.0,623.9 L719.5,624.3 L720.0,624.6 L720.0,624.7 Z" fill="#0b5a74"/>
<path d="M968.5,624.7 L968.5,624.1 L969.0,622.3 L969.5,620.4 L970.0,619.7 L970.5,619.6 L971.0,619.6 L971.5,619.5 L972.0,619.5 L972.5,619.5 L973.0,619.4 L973.5,619.4 L974.0,619.3 L974.5,619.3 L975.0,619.2 L975.5,619.2 L976.0,619.2 L976.5,619.1 L977.0,619.1 L977.5,619.0 L978.0,619.0 L978.5,618.9 L979.0,618.9 L979.5,618.8 L980.0,618.8 L980.5,618.8 L981.0,618.7 L981.5,618.7 L982.0,618.6 L982.5,618.6 L983.0,618.5 L983.5,618.5 L984.0,618.5 L984.5,618.4 L985.0,618.7 L985.5,619.0 L986.0,619.3 L986.5,619.7 L987.0,620.0 L987.5,620.3 L988.0,620.6 L988.5,621.0 L989.0,621.3 L989.5,621.6 L990.0,621.8 L990.5,621.9 L991.0,622.0 L991.5,622.1 L992.0,622.2 L992.5,622.3 L993.0,622.4 L993.5,622.5 L994.0,622.6 L994.5,622.7 L995.0,622.8 L995.5,622.9 L996.0,623.0 L996.5,623.0 L997.0,623.1 L997.5,623.2 L998.0,623.3 L998.5,623.1 L999.0,622.5 L999.5,621.8 L1000.0,621.2 L1000.5,620.5 L1001.0,619.8 L1001.5,619.2 L1002.0,618.5 L1002.5,618.5 L1003.0,618.7 L1003.5,618.9 L1004.0,619.1 L1004.5,619.2 L1005.0,619.4 L1005.5,619.6 L1006.0,619.8 L1006.5,619.9 L1007.0,620.1 L1007.5,620.3 L1008.0,620.5 L1008.5,620.6 L1009.0,620.8 L1009.5,621.0 L1010.0,620.9 L1010.5,620.8 L1011.0,620.7 L1011.5,620.6 L1012.0,620.5 L1012.5,620.5 L1013.0,620.4 L1013.5,620.3 L1014.0,620.2 L1014.5,620.1 L1015.0,620.0 L1015.5,619.9 L1016.0,619.8 L1016.5,619.7 L1017.0,619.7 L1017.5,619.6 L1018.0,619.5 L1018.5,619.4 L1019.0,619.3 L1019.5,619.2 L1020.0,619.1 L1020.5,618.9 L1021.0,618.8 L1021.5,618.7 L1022.0,618.6 L1022.5,618.4 L1023.0,618.3 L1023.5,618.2 L1024.0,618.1 L1024.5,617.9 L1025.0,617.8 L1025.5,617.7 L1026.0,617.6 L1026.5,617.4 L1027.0,617.3 L1027.5,617.2 L1028.0,617.1 L1028.5,616.9 L1029.0,616.8 L1029.5,616.8 L1030.0,617.1 L1030.5,617.5 L1031.0,617.8 L1031.5,618.1 L1032.0,618.5 L1032.5,618.8 L1033.0,619.2 L1033.5,619.5 L1034.0,619.8 L1034.5,620.2 L1035.0,620.5 L1035.5,620.9 L1036.0,620.7 L1036.5,620.3 L1037.0,619.9 L1037.5,619.5 L1038.0,619.0 L1038.5,618.6 L1039.0,618.2 L1039.5,617.8 L1040.0,617.3 L1040.5,616.9 L1041.0,616.5 L1041.5,616.1 L1042.0,615.6 L1042.5,615.2 L1043.0,614.8 L1043.5,614.7 L1044.0,614.7 L1044.5,614.7 L1045.0,614.7 L1045.5,614.7 L1046.0,614.7 L1046.5,614.7 L1047.0,614.7 L1047.5,614.7 L1048.0,614.7 L1048.5,614.7 L1049.0,614.7 L1049.5,614.7 L1050.0,614.7 L1050.5,614.7 L1051.0,614.7 L1051.5,614.7 L1052.0,614.8 L1052.5,615.4 L1053.0,616.0 L1053.5,616.5 L1054.0,617.1 L1054.5,617.7 L1055.0,618.2 L1055.5,618.8 L1056.0,619.4 L1056.5,619.9 L1057.0,620.5 L1057.5,621.1 L1058.0,621.6 L1058.5,622.2 L1059.0,622.8 L1059.5,623.3 L1060.0,623.9 L1060.5,624.5 L1061.0,624.6 L1061.5,624.6 L1062.0,624.6 L1062.5,624.6 L1063.0,624.6 L1063.5,624.6 L1064.0,624.6 L1064.5,624.6 L1065.0,624.6 L1065.5,624.6 L1066.0,624.6 L1066.5,624.6 L1067.0,624.6 L1067.5,624.6 L1068.0,624.6 L1068.5,624.6 L1069.0,624.6 L1069.5,624.6 L1070.0,624.6 L1070.5,624.6 L1071.0,624.6 L1071.5,624.6 L1072.0,624.6 L1072.5,624.6 L1073.0,624.6 L1073.5,624.6 L1074.0,624.6 L1074.5,624.4 L1075.0,624.0 L1075.5,623.6 L1076.0,623.1 L1076.5,622.7 L1077.0,622.2 L1077.5,621.8 L1078.0,621.4 L1078.5,620.9 L1079.0,620.5 L1079.5,620.1 L1080.0,619.6 L1080.5,619.2 L1081.0,620.3 L1081.5,621.3 L1082.0,622.4 L1082.5,623.4 L1083.0,624.5 L1083.0,624.7 Z" fill="#0b5a74"/>
<path d="M1096.5,624.7 L1096.5,624.6 L1097.0,624.4 L1097.5,624.0 L1098.0,623.7 L1098.5,623.3 L1099.0,623.0 L1099.5,622.6 L1100.0,622.3 L1100.5,621.9 L1101.0,621.5 L1101.5,621.2 L1102.0,620.8 L1102.5,620.5 L1103.0,620.3 L1103.5,620.8 L1104.0,621.4 L1104.5,621.9 L1105.0,622.4 L1105.5,622.9 L1106.0,623.5 L1106.5,624.0 L1107.0,623.9 L1107.5,623.7 L1108.0,623.5 L1108.5,623.3 L1109.0,623.1 L1109.5,622.9 L1110.0,622.7 L1110.5,622.5 L1111.0,622.3 L1111.5,622.1 L1112.0,621.9 L1112.5,621.7 L1113.0,621.5 L1113.5,621.2 L1114.0,621.0 L1114.5,621.4 L1115.0,622.0 L1115.5,622.6 L1116.0,623.1 L1116.5,623.7 L1117.0,624.2 L1117.0,624.7 Z" fill="#0b5a74"/>
<path d="M1184.5,624.7 L1184.5,624.6 L1185.0,624.3 L1185.5,623.9 L1186.0,623.6 L1186.5,623.5 L1187.0,623.7 L1187.5,623.9 L1188.0,624.1 L1188.5,624.3 L1189.0,624.5 L1189.5,624.7 L1189.5,624.7 Z" fill="#0b5a74"/>
<path d="M1194.5,624.7 L1194.5,624.6 L1195.0,624.2 L1195.5,623.9 L1196.0,623.6 L1196.5,623.2 L1197.0,622.9 L1197.5,622.6 L1198.0,622.2 L1198.5,621.9 L1199.0,621.6 L1199.5,621.2 L1200.0,620.9 L1200.5,621.2 L1201.0,621.4 L1201.5,621.7 L1202.0,621.9 L1202.5,622.2 L1203.0,622.4 L1203.5,622.7 L1204.0,622.9 L1204.5,623.2 L1205.0,623.4 L1205.5,623.1 L1206.0,622.9 L1206.5,622.6 L1207.0,622.4 L1207.5,622.1 L1208.0,621.9 L1208.5,621.6 L1209.0,621.4 L1209.5,621.1 L1210.0,621.0 L1210.5,621.5 L1211.0,622.1 L1211.5,622.6 L1212.0,623.2 L1212.5,623.7 L1213.0,624.2 L1213.0,624.7 Z" fill="#0b5a74"/>
<path d="M1239.5,624.7 L1239.5,624.5 L1240.0,624.3 L1240.5,624.0 L1241.0,623.7 L1241.5,623.4 L1242.0,623.2 L1242.5,622.9 L1243.0,622.6 L1243.5,622.3 L1244.0,622.0 L1244.5,621.8 L1245.0,621.5 L1245.5,621.2 L1246.0,620.9 L1246.5,620.6 L1247.0,620.4 L1247.5,620.3 L1248.0,620.5 L1248.5,620.7 L1249.0,620.9 L1249.5,621.1 L1250.0,621.3 L1250.5,621.5 L1251.0,621.7 L1251.5,621.9 L1252.0,622.1 L1252.5,622.2 L1253.0,622.1 L1253.5,622.1 L1254.0,622.1 L1254.5,622.0 L1255.0,622.0 L1255.5,622.0 L1256.0,621.9 L1256.5,621.9 L1257.0,621.9 L1257.5,621.8 L1258.0,621.8 L1258.5,621.8 L1259.0,621.7 L1259.5,621.7 L1260.0,621.2 L1260.5,620.3 L1261.0,619.5 L1261.5,618.6 L1262.0,617.8 L1262.5,616.9 L1263.0,616.1 L1263.5,615.4 L1264.0,615.5 L1264.5,615.6 L1265.0,615.7 L1265.5,615.7 L1266.0,615.8 L1266.5,615.9 L1267.0,616.0 L1267.5,616.7 L1268.0,617.8 L1268.5,618.9 L1269.0,620.0 L1269.5,621.2 L1270.0,622.3 L1270.5,623.4 L1271.0,624.5 L1271.0,624.7 Z" fill="#0b5a74"/>
<path d="M578.5,647 L578.5,647.1 L579.0,648.3 L579.5,648.4 L580.0,648.4 L580.5,648.5 L581.0,648.6 L581.5,648.6 L582.0,648.7 L582.5,648.7 L583.0,648.8 L583.5,648.9 L584.0,648.9 L584.5,649.0 L585.0,649.0 L585.5,649.1 L586.0,649.2 L586.5,649.2 L587.0,649.3 L587.5,649.3 L588.0,649.4 L588.5,649.5 L589.0,649.7 L589.5,650.0 L590.0,650.4 L590.5,650.8 L591.0,651.2 L591.5,651.6 L592.0,651.9 L592.5,652.3 L593.0,652.7 L593.5,653.1 L594.0,653.1 L594.5,652.5 L595.0,651.8 L595.5,651.2 L596.0,650.6 L596.5,650.0 L597.0,649.4 L597.5,648.8 L598.0,648.2 L598.5,647.6 L599.0,647.0 L599.0,647 Z" fill="#6e4a00"/>
<path d="M665.0,647 L665.0,647.3 L665.5,647.8 L666.0,648.3 L666.5,648.8 L667.0,649.3 L667.5,649.0 L668.0,648.1 L668.5,647.2 L668.5,647 Z" fill="#6e4a00"/>
<path d="M769.5,647 L769.5,647.1 L770.0,647.4 L770.5,647.8 L771.0,648.1 L771.5,648.4 L772.0,648.7 L772.5,649.0 L773.0,649.4 L773.5,649.7 L774.0,650.0 L774.5,650.3 L775.0,650.6 L775.5,650.9 L776.0,651.3 L776.5,651.6 L777.0,651.9 L777.5,652.2 L778.0,652.5 L778.5,652.9 L779.0,653.2 L779.5,653.4 L780.0,653.5 L780.5,653.6 L781.0,653.7 L781.5,653.8 L782.0,653.9 L782.5,654.0 L783.0,654.1 L783.5,654.2 L784.0,654.3 L784.5,654.4 L785.0,654.5 L785.5,654.6 L786.0,654.7 L786.5,654.8 L787.0,654.9 L787.5,655.0 L788.0,655.1 L788.5,655.2 L789.0,655.3 L789.5,655.4 L790.0,655.5 L790.5,655.6 L791.0,655.7 L791.5,655.8 L792.0,655.4 L792.5,654.8 L793.0,654.2 L793.5,653.5 L794.0,652.9 L794.5,652.3 L795.0,651.6 L795.5,651.0 L796.0,650.4 L796.5,649.8 L797.0,649.7 L797.5,649.9 L798.0,650.2 L798.5,650.4 L799.0,650.7 L799.5,650.9 L800.0,651.2 L800.5,651.4 L801.0,651.7 L801.5,651.9 L802.0,652.2 L802.5,652.4 L803.0,652.7 L803.5,652.9 L804.0,653.2 L804.5,653.4 L805.0,653.7 L805.5,653.9 L806.0,654.2 L806.5,654.4 L807.0,653.5 L807.5,652.2 L808.0,650.9 L808.5,649.5 L809.0,648.2 L809.0,647 Z" fill="#6e4a00"/>
<line x1="0" y1="624.7" x2="1491" y2="624.7" stroke="#1ab4ee" stroke-width="2"/>
<line x1="0" y1="636" x2="1491" y2="636" stroke="#bbbbbb" stroke-width="1.6" stroke-dasharray="2 2"/>
<line x1="0" y1="647" x2="1491" y2="647" stroke="#ffa000" stroke-width="2"/>
<path d="M0.0,630.9 L10.0,634.0 L22.4,642.0 L37.3,641.6 L43.6,645.8 L49.8,632.0 L57.3,629.0 L67.2,642.6 L77.2,625.9 L84.6,628.4 L94.6,622.0 L104.6,620.2 L109.5,624.6 L114.5,619.7 L124.5,619.2 L134.4,624.6 L149.4,624.6 L154.3,621.0 L164.3,622.0 L174.3,634.6 L184.2,642.0 L191.7,634.6 L199.2,629.6 L211.6,628.4 L216.6,622.0 L224.0,627.0 L229.0,635.8 L244.0,634.6 L254.0,640.8 L268.9,638.3 L286.3,645.8 L293.8,628.4 L300.0,625.9 L312.4,620.9 L327.4,616.7 L334.9,617.2 L339.8,624.6 L349.8,627.0 L359.7,637.0 L374.7,638.3 L377.2,643.3 L384.6,633.4 L392.1,634.6 L394.6,644.6 L412.0,640.8 L422.0,633.4 L433.2,625.9 L441.9,635.8 L449.4,638.3 L451.9,632.0 L459.3,640.8 L474.3,639.6 L479.2,642.0 L489.2,635.8 L496.7,627.0 L506.6,622.0 L511.6,628.4 L521.6,627.0 L524.0,633.4 L534.0,625.9 L544.0,620.9 L558.9,623.4 L567.6,619.7 L572.6,623.4 L578.8,648.3 L588.8,649.5 L593.8,653.3 L600.0,645.8 L607.5,642.0 L622.4,639.0 L639.8,640.8 L643.6,645.8 L649.8,642.0 L659.7,642.0 L667.2,649.5 L672.2,640.8 L682.2,635.8 L689.6,629.6 L699.6,627.0 L707.0,624.6 L717.0,622.6 L729.5,630.9 L744.4,628.4 L749.4,634.6 L759.3,635.8 L769.3,647.0 L779.2,653.3 L791.7,655.8 L796.7,649.5 L806.6,654.5 L810.4,644.6 L819.1,642.0 L829.0,633.4 L839.0,630.9 L848.9,629.0 L856.4,634.6 L860.1,644.6 L868.9,642.0 L878.8,632.0 L888.8,637.0 L900.0,640.8 L910.0,645.0 L919.9,644.6 L923.6,635.8 L929.9,637.0 L936.1,644.6 L942.3,629.6 L949.8,634.6 L957.3,627.0 L966.0,633.4 L969.7,619.7 L984.6,618.4 L989.6,621.7 L998.3,623.4 L1002.1,618.4 L1009.5,621.0 L1019.5,619.2 L1029.4,616.7 L1035.7,621.0 L1043.1,614.7 L1051.9,614.7 L1060.6,624.6 L1074.3,624.6 L1080.5,619.2 L1084.2,627.0 L1096.7,624.6 L1102.9,620.2 L1106.6,624.1 L1114.1,621.0 L1119.1,626.6 L1126.5,625.9 L1135.3,637.0 L1139.0,631.6 L1147.7,641.6 L1153.9,630.9 L1161.4,626.6 L1168.9,629.0 L1173.8,630.9 L1178.8,628.4 L1186.3,623.4 L1192.5,625.9 L1200.0,620.9 L1204.9,623.4 L1209.9,620.9 L1216.1,627.6 L1219.9,624.6 L1229.8,627.6 L1238.5,625.1 L1247.3,620.2 L1252.2,622.2 L1259.7,621.7 L1263.4,615.4 L1267.2,616.0 L1272.1,627.0 L1277.1,629.6 L1279.6,626.6 L1283.4,635.8 L1289.6,640.8 L1294.6,638.3 L1299.5,639.0 L1300.8,635.8 L1304.5,642.0" fill="none" stroke="#ffffff" stroke-width="1.8" stroke-linejoin="round" stroke-linecap="round"/>
<rect x="1.0" y="700.6" width="2" height="0.6" fill="#ffa000"/>
<rect x="4.7" y="700.6" width="2" height="1.3" fill="#ffa000"/>
<rect x="8.3" y="700.6" width="2" height="2.1" fill="#ffa000"/>
<rect x="12.0" y="700.6" width="2" height="2.9" fill="#ffa000"/>
<rect x="15.7" y="700.6" width="2" height="3.3" fill="#ffa000"/>
<rect x="19.4" y="700.6" width="2" height="3.5" fill="#ffa000"/>
<rect x="23.1" y="700.6" width="2" height="3.6" fill="#ffa000"/>
<rect x="26.7" y="700.6" width="2" height="3.6" fill="#ffa000"/>
<rect x="30.4" y="700.6" width="2" height="3.6" fill="#ffa000"/>
<rect x="34.1" y="700.6" width="2" height="3.6" fill="#ffa000"/>
<rect x="37.8" y="700.6" width="2" height="3.6" fill="#ffa000"/>
<rect x="41.4" y="700.6" width="2" height="3.6" fill="#ffa000"/>
<rect x="45.1" y="700.6" width="2" height="3.1" fill="#ffa000"/>
<rect x="48.8" y="700.6" width="2" height="1.7" fill="#ffa000"/>
<rect x="52.4" y="700.6" width="2" height="0.6" fill="#ffa000"/>
<rect x="56.1" y="700.0" width="2" height="0.6" fill="#1ab4ee"/>
<rect x="59.8" y="699.7" width="2" height="0.9" fill="#1ab4ee"/>
<rect x="63.5" y="699.3" width="2" height="1.3" fill="#1ab4ee"/>
<rect x="67.1" y="699.2" width="2" height="1.4" fill="#1ab4ee"/>
<rect x="70.8" y="699.2" width="2" height="1.4" fill="#1ab4ee"/>
<rect x="74.5" y="699.0" width="2" height="1.6" fill="#1ab4ee"/>
<rect x="78.2" y="697.8" width="2" height="2.8" fill="#1ab4ee"/>
<rect x="81.8" y="696.8" width="2" height="3.8" fill="#1ab4ee"/>
<rect x="85.5" y="696.1" width="2" height="4.5" fill="#1ab4ee"/>
<rect x="89.2" y="695.5" width="2" height="5.1" fill="#1ab4ee"/>
<rect x="92.9" y="695.2" width="2" height="5.4" fill="#1ab4ee"/>
<rect x="96.5" y="695.1" width="2" height="5.5" fill="#1ab4ee"/>
<rect x="100.2" y="695.1" width="2" height="5.5" fill="#1ab4ee"/>
<rect x="103.9" y="695.2" width="2" height="5.4" fill="#1ab4ee"/>
<rect x="107.6" y="695.3" width="2" height="5.3" fill="#1ab4ee"/>
<rect x="111.2" y="695.4" width="2" height="5.2" fill="#1ab4ee"/>
<rect x="114.9" y="695.4" width="2" height="5.2" fill="#1ab4ee"/>
<rect x="118.6" y="695.5" width="2" height="5.1" fill="#1ab4ee"/>
<rect x="122.3" y="695.5" width="2" height="5.1" fill="#1ab4ee"/>
<rect x="125.9" y="696.8" width="2" height="3.8" fill="#1ab4ee"/>
<rect x="129.6" y="698.6" width="2" height="2.0" fill="#1ab4ee"/>
<rect x="133.3" y="700.0" width="2" height="0.6" fill="#1ab4ee"/>
<rect x="137.0" y="700.6" width="2" height="0.6" fill="#ffa000"/>
<rect x="140.6" y="700.6" width="2" height="1.4" fill="#ffa000"/>
<rect x="144.3" y="700.6" width="2" height="1.9" fill="#ffa000"/>
<rect x="148.0" y="700.6" width="2" height="2.0" fill="#ffa000"/>
<rect x="151.7" y="700.6" width="2" height="2.0" fill="#ffa000"/>
<rect x="155.4" y="700.6" width="2" height="2.1" fill="#ffa000"/>
<rect x="159.0" y="700.6" width="2" height="2.1" fill="#ffa000"/>
<rect x="162.7" y="700.6" width="2" height="2.1" fill="#ffa000"/>
<rect x="166.4" y="700.6" width="2" height="2.1" fill="#ffa000"/>
<rect x="170.1" y="700.6" width="2" height="2.3" fill="#ffa000"/>
<rect x="173.7" y="700.6" width="2" height="2.8" fill="#ffa000"/>
<rect x="177.4" y="700.6" width="2" height="3.2" fill="#ffa000"/>
<rect x="181.1" y="700.6" width="2" height="3.6" fill="#ffa000"/>
<rect x="184.8" y="700.6" width="2" height="3.8" fill="#ffa000"/>
<rect x="188.4" y="700.6" width="2" height="3.9" fill="#ffa000"/>
<rect x="192.1" y="700.6" width="2" height="3.9" fill="#ffa000"/>
<rect x="195.8" y="700.6" width="2" height="2.8" fill="#ffa000"/>
<rect x="199.5" y="700.6" width="2" height="1.4" fill="#ffa000"/>
<rect x="203.1" y="700.6" width="2" height="0.6" fill="#ffa000"/>
<rect x="206.8" y="699.9" width="2" height="0.7" fill="#1ab4ee"/>
<rect x="210.5" y="699.4" width="2" height="1.2" fill="#1ab4ee"/>
<rect x="214.2" y="699.1" width="2" height="1.5" fill="#1ab4ee"/>
<rect x="217.8" y="699.0" width="2" height="1.6" fill="#1ab4ee"/>
<rect x="221.5" y="700.0" width="2" height="0.6" fill="#1ab4ee"/>
<rect x="225.2" y="700.6" width="2" height="0.7" fill="#ffa000"/>
<rect x="228.9" y="700.6" width="2" height="1.5" fill="#ffa000"/>
<rect x="232.5" y="700.6" width="2" height="2.1" fill="#ffa000"/>
<rect x="236.2" y="700.6" width="2" height="2.5" fill="#ffa000"/>
<rect x="239.9" y="700.6" width="2" height="2.7" fill="#ffa000"/>
<rect x="243.6" y="700.6" width="2" height="2.7" fill="#ffa000"/>
<rect x="247.2" y="700.6" width="2" height="2.7" fill="#ffa000"/>
<rect x="250.9" y="700.6" width="2" height="2.6" fill="#ffa000"/>
<rect x="254.6" y="700.6" width="2" height="2.6" fill="#ffa000"/>
<rect x="258.3" y="700.6" width="2" height="2.5" fill="#ffa000"/>
<rect x="261.9" y="700.6" width="2" height="2.5" fill="#ffa000"/>
<rect x="265.6" y="700.6" width="2" height="2.5" fill="#ffa000"/>
<rect x="269.3" y="700.6" width="2" height="2.5" fill="#ffa000"/>
<rect x="273.0" y="700.6" width="2" height="2.5" fill="#ffa000"/>
<rect x="276.6" y="700.6" width="2" height="2.5" fill="#ffa000"/>
<rect x="280.3" y="700.6" width="2" height="2.5" fill="#ffa000"/>
<rect x="284.0" y="700.6" width="2" height="2.5" fill="#ffa000"/>
<rect x="287.7" y="700.6" width="2" height="2.6" fill="#ffa000"/>
<rect x="291.3" y="700.6" width="2" height="0.6" fill="#ffa000"/>
<rect x="295.0" y="698.9" width="2" height="1.7" fill="#1ab4ee"/>
<rect x="298.7" y="697.4" width="2" height="3.2" fill="#1ab4ee"/>
<rect x="302.4" y="696.3" width="2" height="4.3" fill="#1ab4ee"/>
<rect x="306.0" y="695.7" width="2" height="4.9" fill="#1ab4ee"/>
<rect x="309.7" y="695.5" width="2" height="5.1" fill="#1ab4ee"/>
<rect x="313.4" y="695.5" width="2" height="5.1" fill="#1ab4ee"/>
<rect x="317.1" y="695.6" width="2" height="5.0" fill="#1ab4ee"/>
<rect x="320.7" y="695.6" width="2" height="5.0" fill="#1ab4ee"/>
<rect x="324.4" y="695.6" width="2" height="5.0" fill="#1ab4ee"/>
<rect x="328.1" y="695.8" width="2" height="4.8" fill="#1ab4ee"/>
<rect x="331.8" y="696.3" width="2" height="4.3" fill="#1ab4ee"/>
<rect x="335.4" y="696.7" width="2" height="3.9" fill="#1ab4ee"/>
<rect x="339.1" y="697.1" width="2" height="3.5" fill="#1ab4ee"/>
<rect x="342.8" y="699.0" width="2" height="1.6" fill="#1ab4ee"/>
<rect x="346.5" y="700.0" width="2" height="0.6" fill="#1ab4ee"/>
<rect x="350.1" y="700.6" width="2" height="1.1" fill="#ffa000"/>
<rect x="353.8" y="700.6" width="2" height="1.9" fill="#ffa000"/>
<rect x="357.5" y="700.6" width="2" height="3.1" fill="#ffa000"/>
<rect x="361.2" y="700.6" width="2" height="3.8" fill="#ffa000"/>
<rect x="364.8" y="700.6" width="2" height="4.2" fill="#ffa000"/>
<rect x="368.5" y="700.6" width="2" height="4.5" fill="#ffa000"/>
<rect x="372.2" y="700.6" width="2" height="4.7" fill="#ffa000"/>
<rect x="375.9" y="700.6" width="2" height="4.8" fill="#ffa000"/>
<rect x="379.5" y="700.6" width="2" height="4.6" fill="#ffa000"/>
<rect x="383.2" y="700.6" width="2" height="3.8" fill="#ffa000"/>
<rect x="386.9" y="700.6" width="2" height="3.2" fill="#ffa000"/>
<rect x="390.6" y="700.6" width="2" height="2.7" fill="#ffa000"/>
<rect x="394.2" y="700.6" width="2" height="2.3" fill="#ffa000"/>
<rect x="397.9" y="700.6" width="2" height="2.1" fill="#ffa000"/>
<rect x="401.6" y="700.6" width="2" height="2.2" fill="#ffa000"/>
<rect x="405.3" y="700.6" width="2" height="2.5" fill="#ffa000"/>
<rect x="408.9" y="700.6" width="2" height="2.7" fill="#ffa000"/>
<rect x="412.6" y="700.6" width="2" height="2.8" fill="#ffa000"/>
<rect x="416.3" y="700.6" width="2" height="2.9" fill="#ffa000"/>
<rect x="420.0" y="700.6" width="2" height="2.2" fill="#ffa000"/>
<rect x="423.6" y="700.6" width="2" height="0.6" fill="#ffa000"/>
<rect x="427.3" y="699.3" width="2" height="1.3" fill="#1ab4ee"/>
<rect x="431.0" y="698.1" width="2" height="2.5" fill="#1ab4ee"/>
<rect x="434.7" y="697.7" width="2" height="2.9" fill="#1ab4ee"/>
<rect x="438.3" y="698.6" width="2" height="2.0" fill="#1ab4ee"/>
<rect x="442.0" y="699.6" width="2" height="1.0" fill="#1ab4ee"/>
<rect x="445.7" y="700.0" width="2" height="0.6" fill="#1ab4ee"/>
<rect x="449.4" y="700.6" width="2" height="0.6" fill="#ffa000"/>
<rect x="453.0" y="700.6" width="2" height="0.9" fill="#ffa000"/>
<rect x="456.7" y="700.6" width="2" height="1.0" fill="#ffa000"/>
<rect x="460.4" y="700.6" width="2" height="1.0" fill="#ffa000"/>
<rect x="464.1" y="700.6" width="2" height="1.0" fill="#ffa000"/>
<rect x="467.7" y="700.6" width="2" height="1.0" fill="#ffa000"/>
<rect x="471.4" y="700.6" width="2" height="1.0" fill="#ffa000"/>
<rect x="475.1" y="700.6" width="2" height="0.7" fill="#ffa000"/>
<rect x="478.8" y="700.6" width="2" height="0.6" fill="#ffa000"/>
<rect x="482.4" y="700.0" width="2" height="0.6" fill="#1ab4ee"/>
<rect x="486.1" y="700.0" width="2" height="0.6" fill="#1ab4ee"/>
<rect x="489.8" y="699.8" width="2" height="0.8" fill="#1ab4ee"/>
<rect x="493.5" y="699.6" width="2" height="1.0" fill="#1ab4ee"/>
<rect x="497.1" y="698.4" width="2" height="2.2" fill="#1ab4ee"/>
<rect x="500.8" y="697.4" width="2" height="3.2" fill="#1ab4ee"/>
<rect x="504.5" y="696.6" width="2" height="4.0" fill="#1ab4ee"/>
<rect x="508.2" y="696.0" width="2" height="4.6" fill="#1ab4ee"/>
<rect x="511.8" y="695.7" width="2" height="4.9" fill="#1ab4ee"/>
<rect x="515.5" y="696.1" width="2" height="4.5" fill="#1ab4ee"/>
<rect x="519.2" y="696.8" width="2" height="3.8" fill="#1ab4ee"/>
<rect x="522.9" y="697.4" width="2" height="3.2" fill="#1ab4ee"/>
<rect x="526.5" y="697.9" width="2" height="2.7" fill="#1ab4ee"/>
<rect x="530.2" y="698.2" width="2" height="2.4" fill="#1ab4ee"/>
<rect x="533.9" y="698.3" width="2" height="2.3" fill="#1ab4ee"/>
<rect x="537.6" y="698.3" width="2" height="2.3" fill="#1ab4ee"/>
<rect x="541.2" y="698.3" width="2" height="2.3" fill="#1ab4ee"/>
<rect x="544.9" y="698.3" width="2" height="2.3" fill="#1ab4ee"/>
<rect x="548.6" y="698.4" width="2" height="2.2" fill="#1ab4ee"/>
<rect x="552.3" y="699.1" width="2" height="1.5" fill="#1ab4ee"/>
<rect x="555.9" y="699.6" width="2" height="1.0" fill="#1ab4ee"/>
<rect x="559.6" y="700.0" width="2" height="0.6" fill="#1ab4ee"/>
<rect x="563.3" y="700.0" width="2" height="0.6" fill="#1ab4ee"/>
<rect x="567.0" y="700.0" width="2" height="0.6" fill="#1ab4ee"/>
<rect x="570.6" y="700.0" width="2" height="0.6" fill="#1ab4ee"/>
<rect x="574.3" y="700.6" width="2" height="1.8" fill="#ffa000"/>
<rect x="578.0" y="700.6" width="2" height="6.2" fill="#ffa000"/>
<rect x="581.7" y="700.6" width="2" height="7.0" fill="#ffa000"/>
<rect x="585.3" y="700.6" width="2" height="7.0" fill="#ffa000"/>
<rect x="589.0" y="700.6" width="2" height="7.0" fill="#ffa000"/>
<rect x="592.7" y="700.6" width="2" height="7.0" fill="#ffa000"/>
<rect x="596.4" y="700.6" width="2" height="7.0" fill="#ffa000"/>
<rect x="600.0" y="700.6" width="2" height="7.0" fill="#ffa000"/>
<rect x="603.7" y="700.6" width="2" height="7.0" fill="#ffa000"/>
<rect x="607.4" y="700.6" width="2" height="4.8" fill="#ffa000"/>
<rect x="611.0" y="700.6" width="2" height="3.0" fill="#ffa000"/>
<rect x="614.7" y="700.6" width="2" height="1.7" fill="#ffa000"/>
<rect x="618.4" y="700.6" width="2" height="0.9" fill="#ffa000"/>
<rect x="622.1" y="700.6" width="2" height="0.6" fill="#ffa000"/>
<rect x="625.7" y="700.6" width="2" height="0.6" fill="#ffa000"/>
<rect x="629.4" y="700.6" width="2" height="0.6" fill="#ffa000"/>
<rect x="633.1" y="700.0" width="2" height="0.6" fill="#1ab4ee"/>
<rect x="636.8" y="700.0" width="2" height="0.6" fill="#1ab4ee"/>
<rect x="640.4" y="700.0" width="2" height="0.6" fill="#1ab4ee"/>
<rect x="644.1" y="700.0" width="2" height="0.6" fill="#1ab4ee"/>
<rect x="647.8" y="700.0" width="2" height="0.6" fill="#1ab4ee"/>
<rect x="651.5" y="700.0" width="2" height="0.6" fill="#1ab4ee"/>
<rect x="655.1" y="700.0" width="2" height="0.6" fill="#1ab4ee"/>
<rect x="658.8" y="700.0" width="2" height="0.6" fill="#1ab4ee"/>
<rect x="662.5" y="700.0" width="2" height="0.6" fill="#1ab4ee"/>
<rect x="666.2" y="700.0" width="2" height="0.6" fill="#1ab4ee"/>
<rect x="669.8" y="700.0" width="2" height="0.6" fill="#1ab4ee"/>
<rect x="673.5" y="700.0" width="2" height="0.6" fill="#1ab4ee"/>
<rect x="677.2" y="698.8" width="2" height="1.8" fill="#1ab4ee"/>
<rect x="680.9" y="697.5" width="2" height="3.1" fill="#1ab4ee"/>
<rect x="684.5" y="696.6" width="2" height="4.0" fill="#1ab4ee"/>
<rect x="688.2" y="695.9" width="2" height="4.7" fill="#1ab4ee"/>
<rect x="691.9" y="695.4" width="2" height="5.2" fill="#1ab4ee"/>
<rect x="695.6" y="695.2" width="2" height="5.4" fill="#1ab4ee"/>
<rect x="699.2" y="695.3" width="2" height="5.3" fill="#1ab4ee"/>
<rect x="702.9" y="695.9" width="2" height="4.7" fill="#1ab4ee"/>
<rect x="706.6" y="696.4" width="2" height="4.2" fill="#1ab4ee"/>
<rect x="710.3" y="696.9" width="2" height="3.7" fill="#1ab4ee"/>
<rect x="713.9" y="697.1" width="2" height="3.5" fill="#1ab4ee"/>
<rect x="717.6" y="697.3" width="2" height="3.3" fill="#1ab4ee"/>
<rect x="721.3" y="697.4" width="2" height="3.2" fill="#1ab4ee"/>
<rect x="725.0" y="697.8" width="2" height="2.8" fill="#1ab4ee"/>
<rect x="728.6" y="698.9" width="2" height="1.7" fill="#1ab4ee"/>
<rect x="732.3" y="699.8" width="2" height="0.8" fill="#1ab4ee"/>
<rect x="736.0" y="700.0" width="2" height="0.6" fill="#1ab4ee"/>
<rect x="739.7" y="700.6" width="2" height="0.6" fill="#ffa000"/>
<rect x="743.3" y="700.6" width="2" height="0.6" fill="#ffa000"/>
<rect x="747.0" y="700.6" width="2" height="0.6" fill="#ffa000"/>
<rect x="750.7" y="700.6" width="2" height="0.6" fill="#ffa000"/>
<rect x="754.4" y="700.6" width="2" height="1.0" fill="#ffa000"/>
<rect x="758.0" y="700.6" width="2" height="2.4" fill="#ffa000"/>
<rect x="761.7" y="700.6" width="2" height="3.6" fill="#ffa000"/>
<rect x="765.4" y="700.6" width="2" height="4.5" fill="#ffa000"/>
<rect x="769.1" y="700.6" width="2" height="5.1" fill="#ffa000"/>
<rect x="772.7" y="700.6" width="2" height="5.5" fill="#ffa000"/>
<rect x="776.4" y="700.6" width="2" height="5.6" fill="#ffa000"/>
<rect x="780.1" y="700.6" width="2" height="5.5" fill="#ffa000"/>
<rect x="783.8" y="700.6" width="2" height="5.2" fill="#ffa000"/>
<rect x="787.4" y="700.6" width="2" height="5.0" fill="#ffa000"/>
<rect x="791.1" y="700.6" width="2" height="4.9" fill="#ffa000"/>
<rect x="794.8" y="700.6" width="2" height="4.8" fill="#ffa000"/>
<rect x="798.5" y="700.6" width="2" height="4.7" fill="#ffa000"/>
<rect x="802.1" y="700.6" width="2" height="4.7" fill="#ffa000"/>
<rect x="805.8" y="700.6" width="2" height="4.7" fill="#ffa000"/>
<rect x="809.5" y="700.6" width="2" height="3.8" fill="#ffa000"/>
<rect x="813.2" y="700.6" width="2" height="1.2" fill="#ffa000"/>
<rect x="816.8" y="699.7" width="2" height="0.9" fill="#1ab4ee"/>
<rect x="820.5" y="698.1" width="2" height="2.5" fill="#1ab4ee"/>
<rect x="824.2" y="697.0" width="2" height="3.6" fill="#1ab4ee"/>
<rect x="827.9" y="696.4" width="2" height="4.2" fill="#1ab4ee"/>
<rect x="831.5" y="696.2" width="2" height="4.4" fill="#1ab4ee"/>
<rect x="835.2" y="696.2" width="2" height="4.4" fill="#1ab4ee"/>
<rect x="838.9" y="696.6" width="2" height="4.0" fill="#1ab4ee"/>
<rect x="842.6" y="696.9" width="2" height="3.7" fill="#1ab4ee"/>
<rect x="846.2" y="697.2" width="2" height="3.4" fill="#1ab4ee"/>
<rect x="849.9" y="697.4" width="2" height="3.2" fill="#1ab4ee"/>
<rect x="853.6" y="697.5" width="2" height="3.1" fill="#1ab4ee"/>
<rect x="857.3" y="698.3" width="2" height="2.3" fill="#1ab4ee"/>
<rect x="860.9" y="699.8" width="2" height="0.8" fill="#1ab4ee"/>
<rect x="864.6" y="700.6" width="2" height="0.6" fill="#ffa000"/>
<rect x="868.3" y="700.6" width="2" height="1.3" fill="#ffa000"/>
<rect x="872.0" y="700.6" width="2" height="1.9" fill="#ffa000"/>
<rect x="875.6" y="700.6" width="2" height="1.4" fill="#ffa000"/>
<rect x="879.3" y="700.6" width="2" height="0.6" fill="#ffa000"/>
<rect x="883.0" y="700.0" width="2" height="0.6" fill="#1ab4ee"/>
<rect x="886.7" y="699.7" width="2" height="0.9" fill="#1ab4ee"/>
<rect x="890.3" y="699.3" width="2" height="1.3" fill="#1ab4ee"/>
<rect x="894.0" y="699.1" width="2" height="1.5" fill="#1ab4ee"/>
<rect x="897.7" y="699.1" width="2" height="1.5" fill="#1ab4ee"/>
<rect x="901.4" y="699.4" width="2" height="1.2" fill="#1ab4ee"/>
<rect x="905.0" y="699.8" width="2" height="0.8" fill="#1ab4ee"/>
<rect x="908.7" y="700.0" width="2" height="0.6" fill="#1ab4ee"/>
<rect x="912.4" y="700.0" width="2" height="0.6" fill="#1ab4ee"/>
<rect x="916.1" y="700.0" width="2" height="0.6" fill="#1ab4ee"/>
<rect x="919.7" y="700.0" width="2" height="0.6" fill="#1ab4ee"/>
<rect x="923.4" y="700.0" width="2" height="0.6" fill="#1ab4ee"/>
<rect x="927.1" y="700.0" width="2" height="0.6" fill="#1ab4ee"/>
<rect x="930.8" y="700.0" width="2" height="0.6" fill="#1ab4ee"/>
<rect x="934.4" y="700.0" width="2" height="0.6" fill="#1ab4ee"/>
<rect x="938.1" y="700.0" width="2" height="0.6" fill="#1ab4ee"/>
<rect x="941.8" y="699.2" width="2" height="1.4" fill="#1ab4ee"/>
<rect x="945.5" y="698.5" width="2" height="2.1" fill="#1ab4ee"/>
<rect x="949.1" y="697.9" width="2" height="2.7" fill="#1ab4ee"/>
<rect x="952.8" y="697.5" width="2" height="3.1" fill="#1ab4ee"/>
<rect x="956.5" y="697.3" width="2" height="3.3" fill="#1ab4ee"/>
<rect x="960.2" y="697.3" width="2" height="3.3" fill="#1ab4ee"/>
<rect x="963.8" y="697.3" width="2" height="3.3" fill="#1ab4ee"/>
<rect x="967.5" y="696.7" width="2" height="3.9" fill="#1ab4ee"/>
<rect x="971.2" y="695.1" width="2" height="5.5" fill="#1ab4ee"/>
<rect x="974.9" y="693.8" width="2" height="6.8" fill="#1ab4ee"/>
<rect x="978.5" y="693.6" width="2" height="7.0" fill="#1ab4ee"/>
<rect x="982.2" y="693.6" width="2" height="7.0" fill="#1ab4ee"/>
<rect x="985.9" y="693.6" width="2" height="7.0" fill="#1ab4ee"/>
<rect x="989.6" y="693.6" width="2" height="7.0" fill="#1ab4ee"/>
<rect x="993.2" y="695.4" width="2" height="5.2" fill="#1ab4ee"/>
<rect x="996.9" y="696.9" width="2" height="3.7" fill="#1ab4ee"/>
<rect x="1000.6" y="697.9" width="2" height="2.7" fill="#1ab4ee"/>
<rect x="1004.3" y="698.6" width="2" height="2.0" fill="#1ab4ee"/>
<rect x="1007.9" y="698.9" width="2" height="1.7" fill="#1ab4ee"/>
<rect x="1011.6" y="698.9" width="2" height="1.7" fill="#1ab4ee"/>
<rect x="1015.3" y="698.8" width="2" height="1.8" fill="#1ab4ee"/>
<rect x="1019.0" y="698.7" width="2" height="1.9" fill="#1ab4ee"/>
<rect x="1022.6" y="698.6" width="2" height="2.0" fill="#1ab4ee"/>
<rect x="1026.3" y="698.5" width="2" height="2.1" fill="#1ab4ee"/>
<rect x="1030.0" y="698.5" width="2" height="2.1" fill="#1ab4ee"/>
<rect x="1033.7" y="698.5" width="2" height="2.1" fill="#1ab4ee"/>
<rect x="1037.3" y="698.5" width="2" height="2.1" fill="#1ab4ee"/>
<rect x="1041.0" y="697.8" width="2" height="2.8" fill="#1ab4ee"/>
<rect x="1044.7" y="697.0" width="2" height="3.6" fill="#1ab4ee"/>
<rect x="1048.4" y="696.3" width="2" height="4.3" fill="#1ab4ee"/>
<rect x="1052.0" y="695.7" width="2" height="4.9" fill="#1ab4ee"/>
<rect x="1055.7" y="697.2" width="2" height="3.4" fill="#1ab4ee"/>
<rect x="1059.4" y="699.5" width="2" height="1.1" fill="#1ab4ee"/>
<rect x="1063.1" y="700.6" width="2" height="0.9" fill="#ffa000"/>
<rect x="1066.7" y="700.6" width="2" height="2.4" fill="#ffa000"/>
<rect x="1070.4" y="700.6" width="2" height="3.4" fill="#ffa000"/>
<rect x="1074.1" y="700.6" width="2" height="3.9" fill="#ffa000"/>
<rect x="1077.8" y="700.6" width="2" height="3.4" fill="#ffa000"/>
<rect x="1081.4" y="700.6" width="2" height="3.0" fill="#ffa000"/>
<rect x="1085.1" y="700.6" width="2" height="2.7" fill="#ffa000"/>
<rect x="1088.8" y="700.6" width="2" height="2.5" fill="#ffa000"/>
<rect x="1092.5" y="700.6" width="2" height="2.4" fill="#ffa000"/>
<rect x="1096.1" y="700.6" width="2" height="2.3" fill="#ffa000"/>
<rect x="1099.8" y="700.6" width="2" height="1.9" fill="#ffa000"/>
<rect x="1103.5" y="700.6" width="2" height="1.1" fill="#ffa000"/>
<rect x="1107.2" y="700.6" width="2" height="0.6" fill="#ffa000"/>
<rect x="1110.8" y="700.0" width="2" height="0.6" fill="#1ab4ee"/>
<rect x="1114.5" y="700.0" width="2" height="0.6" fill="#1ab4ee"/>
<rect x="1118.2" y="699.9" width="2" height="0.7" fill="#1ab4ee"/>
<rect x="1121.9" y="699.9" width="2" height="0.7" fill="#1ab4ee"/>
<rect x="1125.5" y="700.6" width="2" height="0.6" fill="#ffa000"/>
<rect x="1129.2" y="700.6" width="2" height="2.2" fill="#ffa000"/>
<rect x="1132.9" y="700.6" width="2" height="3.6" fill="#ffa000"/>
<rect x="1136.6" y="700.6" width="2" height="4.6" fill="#ffa000"/>
<rect x="1140.2" y="700.6" width="2" height="5.2" fill="#ffa000"/>
<rect x="1143.9" y="700.6" width="2" height="5.6" fill="#ffa000"/>
<rect x="1147.6" y="700.6" width="2" height="5.7" fill="#ffa000"/>
<rect x="1151.3" y="700.6" width="2" height="3.8" fill="#ffa000"/>
<rect x="1154.9" y="700.6" width="2" height="2.0" fill="#ffa000"/>
<rect x="1158.6" y="700.6" width="2" height="0.7" fill="#ffa000"/>
<rect x="1162.3" y="700.0" width="2" height="0.6" fill="#1ab4ee"/>
<rect x="1166.0" y="699.9" width="2" height="0.7" fill="#1ab4ee"/>
<rect x="1169.6" y="700.0" width="2" height="0.6" fill="#1ab4ee"/>
<rect x="1173.3" y="700.0" width="2" height="0.6" fill="#1ab4ee"/>
<rect x="1177.0" y="700.0" width="2" height="0.6" fill="#1ab4ee"/>
<rect x="1180.7" y="700.0" width="2" height="0.6" fill="#1ab4ee"/>
<rect x="1184.3" y="700.0" width="2" height="0.6" fill="#1ab4ee"/>
<rect x="1188.0" y="700.6" width="2" height="0.6" fill="#ffa000"/>
<rect x="1191.7" y="699.3" width="2" height="1.3" fill="#1ab4ee"/>
<rect x="1195.4" y="697.8" width="2" height="2.8" fill="#1ab4ee"/>
<rect x="1199.0" y="696.6" width="2" height="4.0" fill="#1ab4ee"/>
<rect x="1202.7" y="695.7" width="2" height="4.9" fill="#1ab4ee"/>
<rect x="1206.4" y="695.0" width="2" height="5.6" fill="#1ab4ee"/>
<rect x="1210.1" y="696.5" width="2" height="4.1" fill="#1ab4ee"/>
<rect x="1213.7" y="697.9" width="2" height="2.7" fill="#1ab4ee"/>
<rect x="1217.4" y="699.0" width="2" height="1.6" fill="#1ab4ee"/>
<rect x="1221.1" y="699.9" width="2" height="0.7" fill="#1ab4ee"/>
<rect x="1224.8" y="700.0" width="2" height="0.6" fill="#1ab4ee"/>
<rect x="1228.4" y="700.6" width="2" height="0.6" fill="#ffa000"/>
<rect x="1232.1" y="700.6" width="2" height="0.7" fill="#ffa000"/>
<rect x="1235.8" y="700.6" width="2" height="1.1" fill="#ffa000"/>
<rect x="1239.5" y="700.6" width="2" height="1.2" fill="#ffa000"/>
<rect x="1243.1" y="700.6" width="2" height="0.6" fill="#ffa000"/>
<rect x="1246.8" y="700.6" width="2" height="0.6" fill="#ffa000"/>
<rect x="1250.5" y="700.0" width="2" height="0.6" fill="#1ab4ee"/>
<rect x="1254.2" y="699.7" width="2" height="0.9" fill="#1ab4ee"/>
<rect x="1257.8" y="699.0" width="2" height="1.6" fill="#1ab4ee"/>
<rect x="1261.5" y="697.8" width="2" height="2.8" fill="#1ab4ee"/>
<rect x="1265.2" y="696.9" width="2" height="3.7" fill="#1ab4ee"/>
<rect x="1268.9" y="698.1" width="2" height="2.5" fill="#1ab4ee"/>
<rect x="1272.5" y="699.8" width="2" height="0.8" fill="#1ab4ee"/>
<rect x="1276.2" y="700.6" width="2" height="0.6" fill="#ffa000"/>
<rect x="1279.9" y="700.6" width="2" height="3.8" fill="#ffa000"/>
<rect x="1283.6" y="700.6" width="2" height="6.2" fill="#ffa000"/>
<rect x="1287.2" y="700.6" width="2" height="7.0" fill="#ffa000"/>
<rect x="1290.9" y="700.6" width="2" height="7.0" fill="#ffa000"/>
<rect x="1294.6" y="700.6" width="2" height="7.0" fill="#ffa000"/>
<rect x="1298.3" y="700.6" width="2" height="7.0" fill="#ffa000"/>
<rect x="1301.9" y="700.6" width="2" height="7.0" fill="#ffa000"/>
<rect x="5.0" y="690.8" width="1.05" height="0.9" fill="#7a0000"/>
<rect x="6.0" y="690.9" width="1.05" height="1.1" fill="#7a0000"/>
<rect x="7.0" y="690.9" width="1.05" height="1.2" fill="#7a0000"/>
<rect x="8.0" y="691.0" width="1.05" height="1.4" fill="#7a0000"/>
<rect x="9.0" y="691.1" width="1.05" height="1.5" fill="#7a0000"/>
<rect x="10.0" y="691.2" width="1.05" height="1.6" fill="#7a0000"/>
<rect x="11.0" y="691.3" width="1.05" height="1.8" fill="#7a0000"/>
<rect x="12.0" y="691.4" width="1.05" height="1.8" fill="#7a0000"/>
<rect x="13.0" y="691.6" width="1.05" height="1.9" fill="#7a0000"/>
<rect x="14.0" y="691.7" width="1.05" height="2.0" fill="#7a0000"/>
<rect x="15.0" y="691.9" width="1.05" height="2.1" fill="#7a0000"/>
<rect x="16.0" y="692.0" width="1.05" height="2.1" fill="#7a0000"/>
<rect x="17.0" y="692.2" width="1.05" height="2.2" fill="#7a0000"/>
<rect x="18.0" y="692.4" width="1.05" height="2.2" fill="#7a0000"/>
<rect x="19.0" y="692.6" width="1.05" height="2.2" fill="#7a0000"/>
<rect x="20.0" y="692.8" width="1.05" height="2.2" fill="#7a0000"/>
<rect x="21.0" y="693.1" width="1.05" height="2.2" fill="#7a0000"/>
<rect x="22.0" y="693.3" width="1.05" height="2.2" fill="#7a0000"/>
<rect x="23.0" y="693.5" width="1.05" height="2.2" fill="#7a0000"/>
<rect x="24.0" y="693.7" width="1.05" height="2.2" fill="#7a0000"/>
<rect x="25.0" y="693.9" width="1.05" height="2.2" fill="#7a0000"/>
<rect x="26.0" y="694.2" width="1.05" height="2.2" fill="#7a0000"/>
<rect x="27.0" y="694.4" width="1.05" height="2.2" fill="#7a0000"/>
<rect x="28.0" y="694.6" width="1.05" height="2.2" fill="#7a0000"/>
<rect x="29.0" y="694.8" width="1.05" height="2.2" fill="#7a0000"/>
<rect x="30.0" y="695.1" width="1.05" height="2.2" fill="#7a0000"/>
<rect x="31.0" y="695.3" width="1.05" height="2.2" fill="#7a0000"/>
<rect x="32.0" y="695.5" width="1.05" height="2.2" fill="#7a0000"/>
<rect x="33.0" y="695.7" width="1.05" height="2.2" fill="#7a0000"/>
<rect x="34.0" y="696.0" width="1.05" height="2.2" fill="#7a0000"/>
<rect x="35.0" y="696.2" width="1.05" height="2.2" fill="#7a0000"/>
<rect x="36.0" y="696.4" width="1.05" height="2.2" fill="#7a0000"/>
<rect x="37.0" y="696.6" width="1.05" height="2.2" fill="#7a0000"/>
<rect x="38.0" y="696.9" width="1.05" height="2.2" fill="#7a0000"/>
<rect x="39.0" y="697.1" width="1.05" height="2.2" fill="#7a0000"/>
<rect x="40.0" y="697.3" width="1.05" height="2.2" fill="#7a0000"/>
<rect x="41.0" y="697.5" width="1.05" height="2.2" fill="#7a0000"/>
<rect x="42.0" y="697.7" width="1.05" height="2.2" fill="#7a0000"/>
<rect x="43.0" y="698.0" width="1.05" height="2.2" fill="#7a0000"/>
<rect x="44.0" y="698.2" width="1.05" height="2.2" fill="#7a0000"/>
<rect x="45.0" y="698.4" width="1.05" height="2.2" fill="#7a0000"/>
<rect x="46.0" y="698.6" width="1.05" height="1.9" fill="#7a0000"/>
<rect x="47.0" y="698.8" width="1.05" height="1.6" fill="#7a0000"/>
<rect x="48.0" y="699.0" width="1.05" height="1.3" fill="#7a0000"/>
<rect x="49.0" y="699.1" width="1.05" height="1.1" fill="#7a0000"/>
<rect x="50.0" y="699.3" width="1.05" height="0.9" fill="#7a0000"/>
<rect x="63.0" y="699.0" width="1.05" height="0.8" fill="#777777"/>
<rect x="64.0" y="698.9" width="1.05" height="0.9" fill="#777777"/>
<rect x="65.0" y="698.8" width="1.05" height="0.9" fill="#777777"/>
<rect x="66.0" y="698.8" width="1.05" height="0.9" fill="#777777"/>
<rect x="67.0" y="698.7" width="1.05" height="0.9" fill="#777777"/>
<rect x="68.0" y="698.6" width="1.05" height="0.9" fill="#777777"/>
<rect x="69.0" y="698.5" width="1.05" height="0.9" fill="#777777"/>
<rect x="70.0" y="698.4" width="1.05" height="0.9" fill="#777777"/>
<rect x="71.0" y="698.3" width="1.05" height="0.9" fill="#777777"/>
<rect x="72.0" y="698.2" width="1.05" height="0.9" fill="#777777"/>
<rect x="73.0" y="698.1" width="1.05" height="0.9" fill="#777777"/>
<rect x="74.0" y="698.1" width="1.05" height="0.9" fill="#777777"/>
<rect x="75.0" y="697.9" width="1.05" height="0.9" fill="#777777"/>
<rect x="76.0" y="697.6" width="1.05" height="1.2" fill="#777777"/>
<rect x="77.0" y="697.2" width="1.05" height="1.4" fill="#777777"/>
<rect x="78.0" y="696.9" width="1.05" height="1.6" fill="#777777"/>
<rect x="79.0" y="696.5" width="1.05" height="1.8" fill="#777777"/>
<rect x="80.0" y="696.2" width="1.05" height="2.0" fill="#777777"/>
<rect x="81.0" y="695.8" width="1.05" height="2.2" fill="#777777"/>
<rect x="82.0" y="695.5" width="1.05" height="2.4" fill="#777777"/>
<rect x="83.0" y="695.1" width="1.05" height="2.5" fill="#777777"/>
<rect x="84.0" y="694.8" width="1.05" height="2.7" fill="#777777"/>
<rect x="85.0" y="694.4" width="1.05" height="2.8" fill="#777777"/>
<rect x="86.0" y="694.1" width="1.05" height="2.9" fill="#777777"/>
<rect x="87.0" y="693.8" width="1.05" height="3.0" fill="#777777"/>
<rect x="88.0" y="693.4" width="1.05" height="3.1" fill="#777777"/>
<rect x="89.0" y="693.1" width="1.05" height="3.2" fill="#777777"/>
<rect x="90.0" y="692.7" width="1.05" height="3.3" fill="#777777"/>
<rect x="91.0" y="692.4" width="1.05" height="3.3" fill="#777777"/>
<rect x="92.0" y="692.0" width="1.05" height="3.4" fill="#777777"/>
<rect x="93.0" y="691.7" width="1.05" height="3.4" fill="#777777"/>
<rect x="94.0" y="691.3" width="1.05" height="3.4" fill="#777777"/>
<rect x="95.0" y="691.0" width="1.05" height="3.5" fill="#777777"/>
<rect x="96.0" y="690.6" width="1.05" height="3.5" fill="#777777"/>
<rect x="97.0" y="690.3" width="1.05" height="3.5" fill="#777777"/>
<rect x="98.0" y="690.0" width="1.05" height="3.5" fill="#777777"/>
<rect x="99.0" y="689.6" width="1.05" height="3.5" fill="#777777"/>
<rect x="100.0" y="689.3" width="1.05" height="3.4" fill="#777777"/>
<rect x="101.0" y="689.0" width="1.05" height="3.4" fill="#777777"/>
<rect x="102.0" y="688.6" width="1.05" height="3.4" fill="#777777"/>
<rect x="103.0" y="688.3" width="1.05" height="3.4" fill="#777777"/>
<rect x="104.0" y="688.0" width="1.05" height="3.4" fill="#777777"/>
<rect x="105.0" y="687.7" width="1.05" height="3.3" fill="#777777"/>
<rect x="106.0" y="687.3" width="1.05" height="3.3" fill="#777777"/>
<rect x="107.0" y="687.0" width="1.05" height="3.3" fill="#777777"/>
<rect x="108.0" y="686.7" width="1.05" height="3.3" fill="#777777"/>
<rect x="109.0" y="686.4" width="1.05" height="3.3" fill="#777777"/>
<rect x="110.0" y="686.1" width="1.05" height="3.3" fill="#777777"/>
<rect x="111.0" y="685.7" width="1.05" height="3.3" fill="#777777"/>
<rect x="112.0" y="685.4" width="1.05" height="3.3" fill="#777777"/>
<rect x="113.0" y="685.1" width="1.05" height="3.2" fill="#777777"/>
<rect x="114.0" y="684.8" width="1.05" height="3.2" fill="#777777"/>
<rect x="115.0" y="684.5" width="1.05" height="3.2" fill="#777777"/>
<rect x="116.0" y="684.1" width="1.05" height="3.2" fill="#777777"/>
<rect x="117.0" y="683.8" width="1.05" height="3.2" fill="#777777"/>
<rect x="118.0" y="683.5" width="1.05" height="3.2" fill="#777777"/>
<rect x="119.0" y="683.2" width="1.05" height="3.2" fill="#777777"/>
<rect x="120.0" y="682.8" width="1.05" height="3.2" fill="#777777"/>
<rect x="121.0" y="682.5" width="1.05" height="3.2" fill="#777777"/>
<rect x="122.0" y="682.2" width="1.05" height="3.2" fill="#777777"/>
<rect x="123.0" y="681.9" width="1.05" height="3.2" fill="#777777"/>
<rect x="124.0" y="681.6" width="1.05" height="3.2" fill="#777777"/>
<rect x="125.0" y="681.5" width="1.05" height="3.0" fill="#777777"/>
<rect x="126.0" y="681.6" width="1.05" height="2.6" fill="#777777"/>
<rect x="127.0" y="681.7" width="1.05" height="2.2" fill="#777777"/>
<rect x="128.0" y="681.8" width="1.05" height="1.9" fill="#777777"/>
<rect x="129.0" y="681.9" width="1.05" height="1.5" fill="#777777"/>
<rect x="130.0" y="682.0" width="1.05" height="1.2" fill="#777777"/>
<rect x="131.0" y="682.1" width="1.05" height="0.9" fill="#777777"/>
<rect x="140.0" y="682.2" width="1.05" height="0.8" fill="#7a0000"/>
<rect x="141.0" y="682.3" width="1.05" height="0.9" fill="#7a0000"/>
<rect x="142.0" y="682.3" width="1.05" height="1.0" fill="#7a0000"/>
<rect x="143.0" y="682.4" width="1.05" height="1.1" fill="#7a0000"/>
<rect x="144.0" y="682.4" width="1.05" height="1.2" fill="#7a0000"/>
<rect x="145.0" y="682.5" width="1.05" height="1.2" fill="#7a0000"/>
<rect x="146.0" y="682.7" width="1.05" height="1.2" fill="#7a0000"/>
<rect x="147.0" y="682.8" width="1.05" height="1.2" fill="#7a0000"/>
<rect x="148.0" y="682.9" width="1.05" height="1.2" fill="#7a0000"/>
<rect x="149.0" y="683.0" width="1.05" height="1.2" fill="#7a0000"/>
<rect x="150.0" y="683.1" width="1.05" height="1.3" fill="#7a0000"/>
<rect x="151.0" y="683.3" width="1.05" height="1.3" fill="#7a0000"/>
<rect x="152.0" y="683.4" width="1.05" height="1.3" fill="#7a0000"/>
<rect x="153.0" y="683.5" width="1.05" height="1.3" fill="#7a0000"/>
<rect x="154.0" y="683.6" width="1.05" height="1.3" fill="#7a0000"/>
<rect x="155.0" y="683.7" width="1.05" height="1.3" fill="#7a0000"/>
<rect x="156.0" y="683.9" width="1.05" height="1.3" fill="#7a0000"/>
<rect x="157.0" y="684.0" width="1.05" height="1.3" fill="#7a0000"/>
<rect x="158.0" y="684.1" width="1.05" height="1.3" fill="#7a0000"/>
<rect x="159.0" y="684.3" width="1.05" height="1.3" fill="#7a0000"/>
<rect x="160.0" y="684.4" width="1.05" height="1.3" fill="#7a0000"/>
<rect x="161.0" y="684.5" width="1.05" height="1.3" fill="#7a0000"/>
<rect x="162.0" y="684.6" width="1.05" height="1.3" fill="#7a0000"/>
<rect x="163.0" y="684.8" width="1.05" height="1.3" fill="#7a0000"/>
<rect x="164.0" y="684.9" width="1.05" height="1.3" fill="#7a0000"/>
<rect x="165.0" y="685.0" width="1.05" height="1.3" fill="#7a0000"/>
<rect x="166.0" y="685.2" width="1.05" height="1.3" fill="#7a0000"/>
<rect x="167.0" y="685.3" width="1.05" height="1.3" fill="#7a0000"/>
<rect x="168.0" y="685.4" width="1.05" height="1.3" fill="#7a0000"/>
<rect x="169.0" y="685.6" width="1.05" height="1.3" fill="#7a0000"/>
<rect x="170.0" y="685.7" width="1.05" height="1.4" fill="#7a0000"/>
<rect x="171.0" y="685.8" width="1.05" height="1.5" fill="#7a0000"/>
<rect x="172.0" y="686.0" width="1.05" height="1.6" fill="#7a0000"/>
<rect x="173.0" y="686.1" width="1.05" height="1.7" fill="#7a0000"/>
<rect x="174.0" y="686.3" width="1.05" height="1.8" fill="#7a0000"/>
<rect x="175.0" y="686.4" width="1.05" height="1.9" fill="#7a0000"/>
<rect x="176.0" y="686.6" width="1.05" height="1.9" fill="#7a0000"/>
<rect x="177.0" y="686.8" width="1.05" height="2.0" fill="#7a0000"/>
<rect x="178.0" y="687.0" width="1.05" height="2.1" fill="#7a0000"/>
<rect x="179.0" y="687.1" width="1.05" height="2.1" fill="#7a0000"/>
<rect x="180.0" y="687.3" width="1.05" height="2.2" fill="#7a0000"/>
<rect x="181.0" y="687.5" width="1.05" height="2.2" fill="#7a0000"/>
<rect x="182.0" y="687.7" width="1.05" height="2.3" fill="#7a0000"/>
<rect x="183.0" y="687.9" width="1.05" height="2.3" fill="#7a0000"/>
<rect x="184.0" y="688.1" width="1.05" height="2.4" fill="#7a0000"/>
<rect x="185.0" y="688.4" width="1.05" height="2.4" fill="#7a0000"/>
<rect x="186.0" y="688.6" width="1.05" height="2.4" fill="#7a0000"/>
<rect x="187.0" y="688.8" width="1.05" height="2.4" fill="#7a0000"/>
<rect x="188.0" y="689.0" width="1.05" height="2.4" fill="#7a0000"/>
<rect x="189.0" y="689.3" width="1.05" height="2.4" fill="#7a0000"/>
<rect x="190.0" y="689.5" width="1.05" height="2.4" fill="#7a0000"/>
<rect x="191.0" y="689.8" width="1.05" height="2.4" fill="#7a0000"/>
<rect x="192.0" y="690.0" width="1.05" height="2.4" fill="#7a0000"/>
<rect x="193.0" y="690.3" width="1.05" height="2.4" fill="#7a0000"/>
<rect x="194.0" y="690.5" width="1.05" height="2.4" fill="#7a0000"/>
<rect x="195.0" y="690.7" width="1.05" height="2.2" fill="#7a0000"/>
<rect x="196.0" y="690.9" width="1.05" height="1.9" fill="#7a0000"/>
<rect x="197.0" y="691.1" width="1.05" height="1.6" fill="#7a0000"/>
<rect x="198.0" y="691.3" width="1.05" height="1.3" fill="#7a0000"/>
<rect x="199.0" y="691.5" width="1.05" height="1.0" fill="#7a0000"/>
<rect x="211.0" y="691.4" width="1.05" height="0.9" fill="#777777"/>
<rect x="212.0" y="691.3" width="1.05" height="0.9" fill="#777777"/>
<rect x="213.0" y="691.2" width="1.05" height="0.9" fill="#777777"/>
<rect x="214.0" y="691.1" width="1.05" height="1.0" fill="#777777"/>
<rect x="215.0" y="691.0" width="1.05" height="1.0" fill="#777777"/>
<rect x="216.0" y="690.9" width="1.05" height="1.0" fill="#777777"/>
<rect x="217.0" y="690.8" width="1.05" height="1.0" fill="#777777"/>
<rect x="218.0" y="690.7" width="1.05" height="1.0" fill="#777777"/>
<rect x="219.0" y="690.6" width="1.05" height="1.0" fill="#777777"/>
<rect x="228.0" y="691.3" width="1.05" height="0.8" fill="#7a0000"/>
<rect x="229.0" y="691.3" width="1.05" height="1.0" fill="#7a0000"/>
<rect x="230.0" y="691.3" width="1.05" height="1.1" fill="#7a0000"/>
<rect x="231.0" y="691.4" width="1.05" height="1.2" fill="#7a0000"/>
<rect x="232.0" y="691.5" width="1.05" height="1.3" fill="#7a0000"/>
<rect x="233.0" y="691.5" width="1.05" height="1.4" fill="#7a0000"/>
<rect x="234.0" y="691.6" width="1.05" height="1.5" fill="#7a0000"/>
<rect x="235.0" y="691.7" width="1.05" height="1.5" fill="#7a0000"/>
<rect x="236.0" y="691.8" width="1.05" height="1.6" fill="#7a0000"/>
<rect x="237.0" y="692.0" width="1.05" height="1.6" fill="#7a0000"/>
<rect x="238.0" y="692.1" width="1.05" height="1.7" fill="#7a0000"/>
<rect x="239.0" y="692.3" width="1.05" height="1.7" fill="#7a0000"/>
<rect x="240.0" y="692.4" width="1.05" height="1.7" fill="#7a0000"/>
<rect x="241.0" y="692.6" width="1.05" height="1.7" fill="#7a0000"/>
<rect x="242.0" y="692.8" width="1.05" height="1.7" fill="#7a0000"/>
<rect x="243.0" y="692.9" width="1.05" height="1.7" fill="#7a0000"/>
<rect x="244.0" y="693.1" width="1.05" height="1.7" fill="#7a0000"/>
<rect x="245.0" y="693.3" width="1.05" height="1.7" fill="#7a0000"/>
<rect x="246.0" y="693.4" width="1.05" height="1.7" fill="#7a0000"/>
<rect x="247.0" y="693.6" width="1.05" height="1.7" fill="#7a0000"/>
<rect x="248.0" y="693.8" width="1.05" height="1.7" fill="#7a0000"/>
<rect x="249.0" y="693.9" width="1.05" height="1.7" fill="#7a0000"/>
<rect x="250.0" y="694.1" width="1.05" height="1.7" fill="#7a0000"/>
<rect x="251.0" y="694.3" width="1.05" height="1.6" fill="#7a0000"/>
<rect x="252.0" y="694.4" width="1.05" height="1.6" fill="#7a0000"/>
<rect x="253.0" y="694.6" width="1.05" height="1.6" fill="#7a0000"/>
<rect x="254.0" y="694.8" width="1.05" height="1.6" fill="#7a0000"/>
<rect x="255.0" y="694.9" width="1.05" height="1.6" fill="#7a0000"/>
<rect x="256.0" y="695.1" width="1.05" height="1.6" fill="#7a0000"/>
<rect x="257.0" y="695.2" width="1.05" height="1.6" fill="#7a0000"/>
<rect x="258.0" y="695.4" width="1.05" height="1.6" fill="#7a0000"/>
<rect x="259.0" y="695.6" width="1.05" height="1.6" fill="#7a0000"/>
<rect x="260.0" y="695.7" width="1.05" height="1.6" fill="#7a0000"/>
<rect x="261.0" y="695.9" width="1.05" height="1.6" fill="#7a0000"/>
<rect x="262.0" y="696.1" width="1.05" height="1.6" fill="#7a0000"/>
<rect x="263.0" y="696.2" width="1.05" height="1.6" fill="#7a0000"/>
<rect x="264.0" y="696.4" width="1.05" height="1.6" fill="#7a0000"/>
<rect x="265.0" y="696.5" width="1.05" height="1.6" fill="#7a0000"/>
<rect x="266.0" y="696.7" width="1.05" height="1.6" fill="#7a0000"/>
<rect x="267.0" y="696.8" width="1.05" height="1.6" fill="#7a0000"/>
<rect x="268.0" y="697.0" width="1.05" height="1.6" fill="#7a0000"/>
<rect x="269.0" y="697.2" width="1.05" height="1.6" fill="#7a0000"/>
<rect x="270.0" y="697.3" width="1.05" height="1.6" fill="#7a0000"/>
<rect x="271.0" y="697.5" width="1.05" height="1.6" fill="#7a0000"/>
<rect x="272.0" y="697.6" width="1.05" height="1.6" fill="#7a0000"/>
<rect x="273.0" y="697.8" width="1.05" height="1.6" fill="#7a0000"/>
<rect x="274.0" y="697.9" width="1.05" height="1.6" fill="#7a0000"/>
<rect x="275.0" y="698.1" width="1.05" height="1.6" fill="#7a0000"/>
<rect x="276.0" y="698.2" width="1.05" height="1.6" fill="#7a0000"/>
<rect x="277.0" y="698.4" width="1.05" height="1.6" fill="#7a0000"/>
<rect x="278.0" y="698.6" width="1.05" height="1.6" fill="#7a0000"/>
<rect x="279.0" y="698.7" width="1.05" height="1.6" fill="#7a0000"/>
<rect x="280.0" y="698.9" width="1.05" height="1.6" fill="#7a0000"/>
<rect x="281.0" y="699.0" width="1.05" height="1.6" fill="#7a0000"/>
<rect x="282.0" y="699.2" width="1.05" height="1.6" fill="#7a0000"/>
<rect x="283.0" y="699.3" width="1.05" height="1.6" fill="#7a0000"/>
<rect x="284.0" y="699.5" width="1.05" height="1.6" fill="#7a0000"/>
<rect x="285.0" y="699.7" width="1.05" height="1.6" fill="#7a0000"/>
<rect x="286.0" y="699.8" width="1.05" height="1.6" fill="#7a0000"/>
<rect x="287.0" y="700.0" width="1.05" height="1.6" fill="#7a0000"/>
<rect x="288.0" y="700.1" width="1.05" height="1.6" fill="#7a0000"/>
<rect x="289.0" y="700.3" width="1.05" height="1.5" fill="#7a0000"/>
<rect x="290.0" y="700.4" width="1.05" height="1.0" fill="#7a0000"/>
<rect x="295.0" y="699.7" width="1.05" height="1.0" fill="#777777"/>
<rect x="296.0" y="699.4" width="1.05" height="1.3" fill="#777777"/>
<rect x="297.0" y="699.0" width="1.05" height="1.6" fill="#777777"/>
<rect x="298.0" y="698.7" width="1.05" height="1.9" fill="#777777"/>
<rect x="299.0" y="698.3" width="1.05" height="2.1" fill="#777777"/>
<rect x="300.0" y="698.0" width="1.05" height="2.4" fill="#777777"/>
<rect x="301.0" y="697.7" width="1.05" height="2.6" fill="#777777"/>
<rect x="302.0" y="697.4" width="1.05" height="2.7" fill="#777777"/>
<rect x="303.0" y="697.1" width="1.05" height="2.9" fill="#777777"/>
<rect x="304.0" y="696.7" width="1.05" height="3.0" fill="#777777"/>
<rect x="305.0" y="696.4" width="1.05" height="3.1" fill="#777777"/>
<rect x="306.0" y="696.1" width="1.05" height="3.1" fill="#777777"/>
<rect x="307.0" y="695.8" width="1.05" height="3.2" fill="#777777"/>
<rect x="308.0" y="695.5" width="1.05" height="3.2" fill="#777777"/>
<rect x="309.0" y="695.2" width="1.05" height="3.2" fill="#777777"/>
<rect x="310.0" y="694.9" width="1.05" height="3.2" fill="#777777"/>
<rect x="311.0" y="694.5" width="1.05" height="3.2" fill="#777777"/>
<rect x="312.0" y="694.2" width="1.05" height="3.2" fill="#777777"/>
<rect x="313.0" y="693.9" width="1.05" height="3.2" fill="#777777"/>
<rect x="314.0" y="693.6" width="1.05" height="3.2" fill="#777777"/>
<rect x="315.0" y="693.3" width="1.05" height="3.2" fill="#777777"/>
<rect x="316.0" y="693.0" width="1.05" height="3.2" fill="#777777"/>
<rect x="317.0" y="692.7" width="1.05" height="3.1" fill="#777777"/>
<rect x="318.0" y="692.4" width="1.05" height="3.1" fill="#777777"/>
<rect x="319.0" y="692.0" width="1.05" height="3.1" fill="#777777"/>
<rect x="320.0" y="691.7" width="1.05" height="3.1" fill="#777777"/>
<rect x="321.0" y="691.4" width="1.05" height="3.1" fill="#777777"/>
<rect x="322.0" y="691.1" width="1.05" height="3.1" fill="#777777"/>
<rect x="323.0" y="690.8" width="1.05" height="3.1" fill="#777777"/>
<rect x="324.0" y="690.5" width="1.05" height="3.1" fill="#777777"/>
<rect x="325.0" y="690.2" width="1.05" height="3.1" fill="#777777"/>
<rect x="326.0" y="689.8" width="1.05" height="3.1" fill="#777777"/>
<rect x="327.0" y="689.5" width="1.05" height="3.1" fill="#777777"/>
<rect x="328.0" y="689.3" width="1.05" height="3.1" fill="#777777"/>
<rect x="329.0" y="689.1" width="1.05" height="3.0" fill="#777777"/>
<rect x="330.0" y="688.9" width="1.05" height="2.9" fill="#777777"/>
<rect x="331.0" y="688.7" width="1.05" height="2.8" fill="#777777"/>
<rect x="332.0" y="688.5" width="1.05" height="2.7" fill="#777777"/>
<rect x="333.0" y="688.3" width="1.05" height="2.6" fill="#777777"/>
<rect x="334.0" y="688.1" width="1.05" height="2.5" fill="#777777"/>
<rect x="335.0" y="687.9" width="1.05" height="2.5" fill="#777777"/>
<rect x="336.0" y="687.7" width="1.05" height="2.4" fill="#777777"/>
<rect x="337.0" y="687.5" width="1.05" height="2.3" fill="#777777"/>
<rect x="338.0" y="687.3" width="1.05" height="2.3" fill="#777777"/>
<rect x="339.0" y="687.1" width="1.05" height="2.2" fill="#777777"/>
<rect x="340.0" y="686.9" width="1.05" height="2.1" fill="#777777"/>
<rect x="341.0" y="687.1" width="1.05" height="1.7" fill="#777777"/>
<rect x="342.0" y="687.3" width="1.05" height="1.4" fill="#777777"/>
<rect x="343.0" y="687.4" width="1.05" height="1.0" fill="#777777"/>
<rect x="351.0" y="687.9" width="1.05" height="0.9" fill="#7a0000"/>
<rect x="352.0" y="687.9" width="1.05" height="1.1" fill="#7a0000"/>
<rect x="353.0" y="687.9" width="1.05" height="1.2" fill="#7a0000"/>
<rect x="354.0" y="687.9" width="1.05" height="1.3" fill="#7a0000"/>
<rect x="355.0" y="688.0" width="1.05" height="1.4" fill="#7a0000"/>
<rect x="356.0" y="688.1" width="1.05" height="1.7" fill="#7a0000"/>
<rect x="357.0" y="688.2" width="1.05" height="1.8" fill="#7a0000"/>
<rect x="358.0" y="688.4" width="1.05" height="2.0" fill="#7a0000"/>
<rect x="359.0" y="688.5" width="1.05" height="2.1" fill="#7a0000"/>
<rect x="360.0" y="688.7" width="1.05" height="2.2" fill="#7a0000"/>
<rect x="361.0" y="688.9" width="1.05" height="2.3" fill="#7a0000"/>
<rect x="362.0" y="689.1" width="1.05" height="2.4" fill="#7a0000"/>
<rect x="363.0" y="689.3" width="1.05" height="2.5" fill="#7a0000"/>
<rect x="364.0" y="689.6" width="1.05" height="2.6" fill="#7a0000"/>
<rect x="365.0" y="689.8" width="1.05" height="2.6" fill="#7a0000"/>
<rect x="366.0" y="690.0" width="1.05" height="2.7" fill="#7a0000"/>
<rect x="367.0" y="690.3" width="1.05" height="2.8" fill="#7a0000"/>
<rect x="368.0" y="690.5" width="1.05" height="2.8" fill="#7a0000"/>
<rect x="369.0" y="690.8" width="1.05" height="2.8" fill="#7a0000"/>
<rect x="370.0" y="691.0" width="1.05" height="2.9" fill="#7a0000"/>
<rect x="371.0" y="691.3" width="1.05" height="2.9" fill="#7a0000"/>
<rect x="372.0" y="691.6" width="1.05" height="2.9" fill="#7a0000"/>
<rect x="373.0" y="691.9" width="1.05" height="3.0" fill="#7a0000"/>
<rect x="374.0" y="692.1" width="1.05" height="3.0" fill="#7a0000"/>
<rect x="375.0" y="692.4" width="1.05" height="3.0" fill="#7a0000"/>
<rect x="376.0" y="692.7" width="1.05" height="3.0" fill="#7a0000"/>
<rect x="377.0" y="693.0" width="1.05" height="3.0" fill="#7a0000"/>
<rect x="378.0" y="693.3" width="1.05" height="3.0" fill="#7a0000"/>
<rect x="379.0" y="693.6" width="1.05" height="3.0" fill="#7a0000"/>
<rect x="380.0" y="693.9" width="1.05" height="2.9" fill="#7a0000"/>
<rect x="381.0" y="694.2" width="1.05" height="2.8" fill="#7a0000"/>
<rect x="382.0" y="694.5" width="1.05" height="2.6" fill="#7a0000"/>
<rect x="383.0" y="694.8" width="1.05" height="2.5" fill="#7a0000"/>
<rect x="384.0" y="695.0" width="1.05" height="2.3" fill="#7a0000"/>
<rect x="385.0" y="695.3" width="1.05" height="2.2" fill="#7a0000"/>
<rect x="386.0" y="695.5" width="1.05" height="2.1" fill="#7a0000"/>
<rect x="387.0" y="695.7" width="1.05" height="2.0" fill="#7a0000"/>
<rect x="388.0" y="696.0" width="1.05" height="1.9" fill="#7a0000"/>
<rect x="389.0" y="696.2" width="1.05" height="1.8" fill="#7a0000"/>
<rect x="390.0" y="696.4" width="1.05" height="1.7" fill="#7a0000"/>
<rect x="391.0" y="696.6" width="1.05" height="1.6" fill="#7a0000"/>
<rect x="392.0" y="696.8" width="1.05" height="1.5" fill="#7a0000"/>
<rect x="393.0" y="697.0" width="1.05" height="1.5" fill="#7a0000"/>
<rect x="394.0" y="697.2" width="1.05" height="1.4" fill="#7a0000"/>
<rect x="395.0" y="697.4" width="1.05" height="1.4" fill="#7a0000"/>
<rect x="396.0" y="697.5" width="1.05" height="1.3" fill="#7a0000"/>
<rect x="397.0" y="697.7" width="1.05" height="1.3" fill="#7a0000"/>
<rect x="398.0" y="697.8" width="1.05" height="1.3" fill="#7a0000"/>
<rect x="399.0" y="698.0" width="1.05" height="1.3" fill="#7a0000"/>
<rect x="400.0" y="698.1" width="1.05" height="1.3" fill="#7a0000"/>
<rect x="401.0" y="698.2" width="1.05" height="1.3" fill="#7a0000"/>
<rect x="402.0" y="698.4" width="1.05" height="1.4" fill="#7a0000"/>
<rect x="403.0" y="698.5" width="1.05" height="1.4" fill="#7a0000"/>
<rect x="404.0" y="698.6" width="1.05" height="1.5" fill="#7a0000"/>
<rect x="405.0" y="698.8" width="1.05" height="1.5" fill="#7a0000"/>
<rect x="406.0" y="698.9" width="1.05" height="1.6" fill="#7a0000"/>
<rect x="407.0" y="699.1" width="1.05" height="1.6" fill="#7a0000"/>
<rect x="408.0" y="699.2" width="1.05" height="1.6" fill="#7a0000"/>
<rect x="409.0" y="699.4" width="1.05" height="1.7" fill="#7a0000"/>
<rect x="410.0" y="699.5" width="1.05" height="1.7" fill="#7a0000"/>
<rect x="411.0" y="699.7" width="1.05" height="1.7" fill="#7a0000"/>
<rect x="412.0" y="699.8" width="1.05" height="1.8" fill="#7a0000"/>
<rect x="413.0" y="700.0" width="1.05" height="1.8" fill="#7a0000"/>
<rect x="414.0" y="700.2" width="1.05" height="1.8" fill="#7a0000"/>
<rect x="415.0" y="700.3" width="1.05" height="1.8" fill="#7a0000"/>
<rect x="416.0" y="700.5" width="1.05" height="1.8" fill="#7a0000"/>
<rect x="417.0" y="700.7" width="1.05" height="1.8" fill="#7a0000"/>
<rect x="418.0" y="700.9" width="1.05" height="1.9" fill="#7a0000"/>
<rect x="419.0" y="701.0" width="1.05" height="1.9" fill="#7a0000"/>
<rect x="420.0" y="701.2" width="1.05" height="1.7" fill="#7a0000"/>
<rect x="421.0" y="701.4" width="1.05" height="1.2" fill="#7a0000"/>
<rect x="422.0" y="701.5" width="1.05" height="0.9" fill="#7a0000"/>
<rect x="428.0" y="700.9" width="1.05" height="1.0" fill="#777777"/>
<rect x="429.0" y="700.6" width="1.05" height="1.2" fill="#777777"/>
<rect x="430.0" y="700.4" width="1.05" height="1.4" fill="#777777"/>
<rect x="431.0" y="700.1" width="1.05" height="1.6" fill="#777777"/>
<rect x="432.0" y="699.9" width="1.05" height="1.8" fill="#777777"/>
<rect x="433.0" y="699.6" width="1.05" height="2.0" fill="#777777"/>
<rect x="434.0" y="699.4" width="1.05" height="2.1" fill="#777777"/>
<rect x="435.0" y="699.3" width="1.05" height="2.0" fill="#777777"/>
<rect x="436.0" y="699.4" width="1.05" height="1.9" fill="#777777"/>
<rect x="437.0" y="699.5" width="1.05" height="1.7" fill="#777777"/>
<rect x="438.0" y="699.5" width="1.05" height="1.4" fill="#777777"/>
<rect x="439.0" y="699.6" width="1.05" height="1.2" fill="#777777"/>
<rect x="440.0" y="699.7" width="1.05" height="1.0" fill="#777777"/>
<rect x="441.0" y="699.7" width="1.05" height="0.8" fill="#777777"/>
<rect x="496.0" y="700.0" width="1.05" height="1.0" fill="#777777"/>
<rect x="497.0" y="699.7" width="1.05" height="1.3" fill="#777777"/>
<rect x="498.0" y="699.4" width="1.05" height="1.5" fill="#777777"/>
<rect x="499.0" y="699.1" width="1.05" height="1.7" fill="#777777"/>
<rect x="500.0" y="698.8" width="1.05" height="1.8" fill="#777777"/>
<rect x="501.0" y="698.4" width="1.05" height="2.0" fill="#777777"/>
<rect x="502.0" y="698.1" width="1.05" height="2.2" fill="#777777"/>
<rect x="503.0" y="697.8" width="1.05" height="2.3" fill="#777777"/>
<rect x="504.0" y="697.5" width="1.05" height="2.5" fill="#777777"/>
<rect x="505.0" y="697.2" width="1.05" height="2.6" fill="#777777"/>
<rect x="506.0" y="696.9" width="1.05" height="2.7" fill="#777777"/>
<rect x="507.0" y="696.5" width="1.05" height="2.8" fill="#777777"/>
<rect x="508.0" y="696.2" width="1.05" height="2.9" fill="#777777"/>
<rect x="509.0" y="695.9" width="1.05" height="3.0" fill="#777777"/>
<rect x="510.0" y="695.6" width="1.05" height="3.0" fill="#777777"/>
<rect x="511.0" y="695.3" width="1.05" height="3.1" fill="#777777"/>
<rect x="512.0" y="695.0" width="1.05" height="3.1" fill="#777777"/>
<rect x="513.0" y="694.6" width="1.05" height="3.1" fill="#777777"/>
<rect x="514.0" y="694.3" width="1.05" height="3.2" fill="#777777"/>
<rect x="515.0" y="694.2" width="1.05" height="3.0" fill="#777777"/>
<rect x="516.0" y="694.0" width="1.05" height="2.9" fill="#777777"/>
<rect x="517.0" y="693.9" width="1.05" height="2.7" fill="#777777"/>
<rect x="518.0" y="693.8" width="1.05" height="2.6" fill="#777777"/>
<rect x="519.0" y="693.6" width="1.05" height="2.4" fill="#777777"/>
<rect x="520.0" y="693.5" width="1.05" height="2.3" fill="#777777"/>
<rect x="521.0" y="693.3" width="1.05" height="2.2" fill="#777777"/>
<rect x="522.0" y="693.2" width="1.05" height="2.1" fill="#777777"/>
<rect x="523.0" y="693.0" width="1.05" height="2.0" fill="#777777"/>
<rect x="524.0" y="692.9" width="1.05" height="1.9" fill="#777777"/>
<rect x="525.0" y="692.8" width="1.05" height="1.8" fill="#777777"/>
<rect x="526.0" y="692.6" width="1.05" height="1.7" fill="#777777"/>
<rect x="527.0" y="692.5" width="1.05" height="1.6" fill="#777777"/>
<rect x="528.0" y="692.3" width="1.05" height="1.6" fill="#777777"/>
<rect x="529.0" y="692.2" width="1.05" height="1.5" fill="#777777"/>
<rect x="530.0" y="692.1" width="1.05" height="1.5" fill="#777777"/>
<rect x="531.0" y="691.9" width="1.05" height="1.5" fill="#777777"/>
<rect x="532.0" y="691.8" width="1.05" height="1.4" fill="#777777"/>
<rect x="533.0" y="691.6" width="1.05" height="1.4" fill="#777777"/>
<rect x="534.0" y="691.5" width="1.05" height="1.4" fill="#777777"/>
<rect x="535.0" y="691.4" width="1.05" height="1.4" fill="#777777"/>
<rect x="536.0" y="691.2" width="1.05" height="1.4" fill="#777777"/>
<rect x="537.0" y="691.1" width="1.05" height="1.4" fill="#777777"/>
<rect x="538.0" y="690.9" width="1.05" height="1.4" fill="#777777"/>
<rect x="539.0" y="690.8" width="1.05" height="1.4" fill="#777777"/>
<rect x="540.0" y="690.7" width="1.05" height="1.4" fill="#777777"/>
<rect x="541.0" y="690.5" width="1.05" height="1.4" fill="#777777"/>
<rect x="542.0" y="690.4" width="1.05" height="1.4" fill="#777777"/>
<rect x="543.0" y="690.2" width="1.05" height="1.4" fill="#777777"/>
<rect x="544.0" y="690.1" width="1.05" height="1.4" fill="#777777"/>
<rect x="545.0" y="689.9" width="1.05" height="1.4" fill="#777777"/>
<rect x="546.0" y="689.8" width="1.05" height="1.4" fill="#777777"/>
<rect x="547.0" y="689.7" width="1.05" height="1.4" fill="#777777"/>
<rect x="548.0" y="689.5" width="1.05" height="1.4" fill="#777777"/>
<rect x="549.0" y="689.4" width="1.05" height="1.4" fill="#777777"/>
<rect x="550.0" y="689.4" width="1.05" height="1.3" fill="#777777"/>
<rect x="551.0" y="689.4" width="1.05" height="1.1" fill="#777777"/>
<rect x="552.0" y="689.4" width="1.05" height="1.0" fill="#777777"/>
<rect x="553.0" y="689.4" width="1.05" height="0.9" fill="#777777"/>
<rect x="575.0" y="689.5" width="1.05" height="1.1" fill="#7a0000"/>
<rect x="576.0" y="689.6" width="1.05" height="2.0" fill="#7a0000"/>
<rect x="577.0" y="689.7" width="1.05" height="2.8" fill="#7a0000"/>
<rect x="578.0" y="689.9" width="1.05" height="3.6" fill="#7a0000"/>
<rect x="579.0" y="690.2" width="1.05" height="4.4" fill="#7a0000"/>
<rect x="580.0" y="690.5" width="1.05" height="5.1" fill="#7a0000"/>
<rect x="581.0" y="690.8" width="1.05" height="5.7" fill="#7a0000"/>
<rect x="582.0" y="691.2" width="1.05" height="6.1" fill="#7a0000"/>
<rect x="583.0" y="691.6" width="1.05" height="6.4" fill="#7a0000"/>
<rect x="584.0" y="692.0" width="1.05" height="6.6" fill="#7a0000"/>
<rect x="585.0" y="692.5" width="1.05" height="6.8" fill="#7a0000"/>
<rect x="586.0" y="693.0" width="1.05" height="7.0" fill="#7a0000"/>
<rect x="587.0" y="693.5" width="1.05" height="7.1" fill="#7a0000"/>
<rect x="588.0" y="694.1" width="1.05" height="7.3" fill="#7a0000"/>
<rect x="589.0" y="694.7" width="1.05" height="7.3" fill="#7a0000"/>
<rect x="590.0" y="695.3" width="1.05" height="7.4" fill="#7a0000"/>
<rect x="591.0" y="696.0" width="1.05" height="7.4" fill="#7a0000"/>
<rect x="592.0" y="696.7" width="1.05" height="7.4" fill="#7a0000"/>
<rect x="593.0" y="697.4" width="1.05" height="7.3" fill="#7a0000"/>
<rect x="594.0" y="698.2" width="1.05" height="7.2" fill="#7a0000"/>
<rect x="595.0" y="699.0" width="1.05" height="7.1" fill="#7a0000"/>
<rect x="596.0" y="699.7" width="1.05" height="7.0" fill="#7a0000"/>
<rect x="597.0" y="700.5" width="1.05" height="7.0" fill="#7a0000"/>
<rect x="598.0" y="701.2" width="1.05" height="6.9" fill="#7a0000"/>
<rect x="599.0" y="702.0" width="1.05" height="6.8" fill="#7a0000"/>
<rect x="600.0" y="702.7" width="1.05" height="6.8" fill="#7a0000"/>
<rect x="601.0" y="703.4" width="1.05" height="6.2" fill="#7a0000"/>
<rect x="602.0" y="704.0" width="1.05" height="5.6" fill="#7a0000"/>
<rect x="603.0" y="704.6" width="1.05" height="5.1" fill="#7a0000"/>
<rect x="604.0" y="705.1" width="1.05" height="4.5" fill="#7a0000"/>
<rect x="605.0" y="705.6" width="1.05" height="4.1" fill="#7a0000"/>
<rect x="606.0" y="706.1" width="1.05" height="3.6" fill="#7a0000"/>
<rect x="607.0" y="706.6" width="1.05" height="3.2" fill="#7a0000"/>
<rect x="608.0" y="707.0" width="1.05" height="2.8" fill="#7a0000"/>
<rect x="609.0" y="707.5" width="1.05" height="2.4" fill="#7a0000"/>
<rect x="610.0" y="707.8" width="1.05" height="2.1" fill="#7a0000"/>
<rect x="611.0" y="708.2" width="1.05" height="1.8" fill="#7a0000"/>
<rect x="612.0" y="708.5" width="1.05" height="1.5" fill="#7a0000"/>
<rect x="613.0" y="708.8" width="1.05" height="1.3" fill="#7a0000"/>
<rect x="614.0" y="709.0" width="1.05" height="1.0" fill="#7a0000"/>
<rect x="615.0" y="709.2" width="1.05" height="0.9" fill="#7a0000"/>
<rect x="677.0" y="708.2" width="1.05" height="1.0" fill="#777777"/>
<rect x="678.0" y="707.9" width="1.05" height="1.2" fill="#777777"/>
<rect x="679.0" y="707.5" width="1.05" height="1.5" fill="#777777"/>
<rect x="680.0" y="707.2" width="1.05" height="1.7" fill="#777777"/>
<rect x="681.0" y="706.9" width="1.05" height="1.9" fill="#777777"/>
<rect x="682.0" y="706.5" width="1.05" height="2.1" fill="#777777"/>
<rect x="683.0" y="706.2" width="1.05" height="2.3" fill="#777777"/>
<rect x="684.0" y="705.9" width="1.05" height="2.5" fill="#777777"/>
<rect x="685.0" y="705.5" width="1.05" height="2.6" fill="#777777"/>
<rect x="686.0" y="705.2" width="1.05" height="2.8" fill="#777777"/>
<rect x="687.0" y="704.9" width="1.05" height="2.9" fill="#777777"/>
<rect x="688.0" y="704.5" width="1.05" height="3.0" fill="#777777"/>
<rect x="689.0" y="704.2" width="1.05" height="3.1" fill="#777777"/>
<rect x="690.0" y="703.8" width="1.05" height="3.2" fill="#777777"/>
<rect x="691.0" y="703.5" width="1.05" height="3.2" fill="#777777"/>
<rect x="692.0" y="703.2" width="1.05" height="3.3" fill="#777777"/>
<rect x="693.0" y="702.8" width="1.05" height="3.3" fill="#777777"/>
<rect x="694.0" y="702.5" width="1.05" height="3.4" fill="#777777"/>
<rect x="695.0" y="702.2" width="1.05" height="3.4" fill="#777777"/>
<rect x="696.0" y="701.8" width="1.05" height="3.4" fill="#777777"/>
<rect x="697.0" y="701.5" width="1.05" height="3.4" fill="#777777"/>
<rect x="698.0" y="701.1" width="1.05" height="3.4" fill="#777777"/>
<rect x="699.0" y="700.8" width="1.05" height="3.4" fill="#777777"/>
<rect x="700.0" y="700.5" width="1.05" height="3.3" fill="#777777"/>
<rect x="701.0" y="700.3" width="1.05" height="3.2" fill="#777777"/>
<rect x="702.0" y="700.1" width="1.05" height="3.1" fill="#777777"/>
<rect x="703.0" y="699.9" width="1.05" height="3.0" fill="#777777"/>
<rect x="704.0" y="699.7" width="1.05" height="2.9" fill="#777777"/>
<rect x="705.0" y="699.5" width="1.05" height="2.7" fill="#777777"/>
<rect x="706.0" y="699.3" width="1.05" height="2.7" fill="#777777"/>
<rect x="707.0" y="699.1" width="1.05" height="2.6" fill="#777777"/>
<rect x="708.0" y="698.9" width="1.05" height="2.5" fill="#777777"/>
<rect x="709.0" y="698.7" width="1.05" height="2.4" fill="#777777"/>
<rect x="710.0" y="698.5" width="1.05" height="2.3" fill="#777777"/>
<rect x="711.0" y="698.3" width="1.05" height="2.3" fill="#777777"/>
<rect x="712.0" y="698.1" width="1.05" height="2.2" fill="#777777"/>
<rect x="713.0" y="697.9" width="1.05" height="2.2" fill="#777777"/>
<rect x="714.0" y="697.7" width="1.05" height="2.1" fill="#777777"/>
<rect x="715.0" y="697.5" width="1.05" height="2.1" fill="#777777"/>
<rect x="716.0" y="697.3" width="1.05" height="2.1" fill="#777777"/>
<rect x="717.0" y="697.1" width="1.05" height="2.0" fill="#777777"/>
<rect x="718.0" y="696.9" width="1.05" height="2.0" fill="#777777"/>
<rect x="719.0" y="696.7" width="1.05" height="2.0" fill="#777777"/>
<rect x="720.0" y="696.5" width="1.05" height="2.0" fill="#777777"/>
<rect x="721.0" y="696.3" width="1.05" height="2.0" fill="#777777"/>
<rect x="722.0" y="696.1" width="1.05" height="2.0" fill="#777777"/>
<rect x="723.0" y="695.9" width="1.05" height="2.0" fill="#777777"/>
<rect x="724.0" y="695.7" width="1.05" height="2.0" fill="#777777"/>
<rect x="725.0" y="695.6" width="1.05" height="1.9" fill="#777777"/>
<rect x="726.0" y="695.7" width="1.05" height="1.7" fill="#777777"/>
<rect x="727.0" y="695.7" width="1.05" height="1.5" fill="#777777"/>
<rect x="728.0" y="695.7" width="1.05" height="1.3" fill="#777777"/>
<rect x="729.0" y="695.8" width="1.05" height="1.1" fill="#777777"/>
<rect x="730.0" y="695.8" width="1.05" height="0.9" fill="#777777"/>
<rect x="756.0" y="696.5" width="1.05" height="0.9" fill="#7a0000"/>
<rect x="757.0" y="696.6" width="1.05" height="1.2" fill="#7a0000"/>
<rect x="758.0" y="696.7" width="1.05" height="1.4" fill="#7a0000"/>
<rect x="759.0" y="696.8" width="1.05" height="1.7" fill="#7a0000"/>
<rect x="760.0" y="696.9" width="1.05" height="1.9" fill="#7a0000"/>
<rect x="761.0" y="697.0" width="1.05" height="2.1" fill="#7a0000"/>
<rect x="762.0" y="697.2" width="1.05" height="2.3" fill="#7a0000"/>
<rect x="763.0" y="697.4" width="1.05" height="2.5" fill="#7a0000"/>
<rect x="764.0" y="697.6" width="1.05" height="2.6" fill="#7a0000"/>
<rect x="765.0" y="697.8" width="1.05" height="2.8" fill="#7a0000"/>
<rect x="766.0" y="698.0" width="1.05" height="2.9" fill="#7a0000"/>
<rect x="767.0" y="698.2" width="1.05" height="3.0" fill="#7a0000"/>
<rect x="768.0" y="698.4" width="1.05" height="3.2" fill="#7a0000"/>
<rect x="769.0" y="698.7" width="1.05" height="3.2" fill="#7a0000"/>
<rect x="770.0" y="699.0" width="1.05" height="3.3" fill="#7a0000"/>
<rect x="771.0" y="699.2" width="1.05" height="3.4" fill="#7a0000"/>
<rect x="772.0" y="699.5" width="1.05" height="3.4" fill="#7a0000"/>
<rect x="773.0" y="699.9" width="1.05" height="3.5" fill="#7a0000"/>
<rect x="774.0" y="700.2" width="1.05" height="3.5" fill="#7a0000"/>
<rect x="775.0" y="700.5" width="1.05" height="3.5" fill="#7a0000"/>
<rect x="776.0" y="700.9" width="1.05" height="3.5" fill="#7a0000"/>
<rect x="777.0" y="701.2" width="1.05" height="3.5" fill="#7a0000"/>
<rect x="778.0" y="701.6" width="1.05" height="3.5" fill="#7a0000"/>
<rect x="779.0" y="701.9" width="1.05" height="3.5" fill="#7a0000"/>
<rect x="780.0" y="702.3" width="1.05" height="3.5" fill="#7a0000"/>
<rect x="781.0" y="702.6" width="1.05" height="3.4" fill="#7a0000"/>
<rect x="782.0" y="703.0" width="1.05" height="3.4" fill="#7a0000"/>
<rect x="783.0" y="703.3" width="1.05" height="3.3" fill="#7a0000"/>
<rect x="784.0" y="703.6" width="1.05" height="3.3" fill="#7a0000"/>
<rect x="785.0" y="704.0" width="1.05" height="3.2" fill="#7a0000"/>
<rect x="786.0" y="704.3" width="1.05" height="3.2" fill="#7a0000"/>
<rect x="787.0" y="704.6" width="1.05" height="3.2" fill="#7a0000"/>
<rect x="788.0" y="705.0" width="1.05" height="3.1" fill="#7a0000"/>
<rect x="789.0" y="705.3" width="1.05" height="3.1" fill="#7a0000"/>
<rect x="790.0" y="705.6" width="1.05" height="3.1" fill="#7a0000"/>
<rect x="791.0" y="705.9" width="1.05" height="3.0" fill="#7a0000"/>
<rect x="792.0" y="706.2" width="1.05" height="3.0" fill="#7a0000"/>
<rect x="793.0" y="706.6" width="1.05" height="3.0" fill="#7a0000"/>
<rect x="794.0" y="706.9" width="1.05" height="3.0" fill="#7a0000"/>
<rect x="795.0" y="707.2" width="1.05" height="3.0" fill="#7a0000"/>
<rect x="796.0" y="707.5" width="1.05" height="3.0" fill="#7a0000"/>
<rect x="797.0" y="707.8" width="1.05" height="3.0" fill="#7a0000"/>
<rect x="798.0" y="708.1" width="1.05" height="2.9" fill="#7a0000"/>
<rect x="799.0" y="708.4" width="1.05" height="2.9" fill="#7a0000"/>
<rect x="800.0" y="708.7" width="1.05" height="2.9" fill="#7a0000"/>
<rect x="801.0" y="709.0" width="1.05" height="2.9" fill="#7a0000"/>
<rect x="802.0" y="709.3" width="1.05" height="2.9" fill="#7a0000"/>
<rect x="803.0" y="709.6" width="1.05" height="2.9" fill="#7a0000"/>
<rect x="804.0" y="709.9" width="1.05" height="2.9" fill="#7a0000"/>
<rect x="805.0" y="710.2" width="1.05" height="2.9" fill="#7a0000"/>
<rect x="806.0" y="710.4" width="1.05" height="2.9" fill="#7a0000"/>
<rect x="807.0" y="710.7" width="1.05" height="2.9" fill="#7a0000"/>
<rect x="808.0" y="711.0" width="1.05" height="2.9" fill="#7a0000"/>
<rect x="809.0" y="711.3" width="1.05" height="2.9" fill="#7a0000"/>
<rect x="810.0" y="711.6" width="1.05" height="2.5" fill="#7a0000"/>
<rect x="811.0" y="711.8" width="1.05" height="1.9" fill="#7a0000"/>
<rect x="812.0" y="712.1" width="1.05" height="1.5" fill="#7a0000"/>
<rect x="813.0" y="712.2" width="1.05" height="1.0" fill="#7a0000"/>
<rect x="818.0" y="711.9" width="1.05" height="0.9" fill="#777777"/>
<rect x="819.0" y="711.6" width="1.05" height="1.2" fill="#777777"/>
<rect x="820.0" y="711.3" width="1.05" height="1.5" fill="#777777"/>
<rect x="821.0" y="711.0" width="1.05" height="1.7" fill="#777777"/>
<rect x="822.0" y="710.8" width="1.05" height="2.0" fill="#777777"/>
<rect x="823.0" y="710.5" width="1.05" height="2.2" fill="#777777"/>
<rect x="824.0" y="710.2" width="1.05" height="2.3" fill="#777777"/>
<rect x="825.0" y="709.9" width="1.05" height="2.5" fill="#777777"/>
<rect x="826.0" y="709.7" width="1.05" height="2.6" fill="#777777"/>
<rect x="827.0" y="709.4" width="1.05" height="2.6" fill="#777777"/>
<rect x="828.0" y="709.1" width="1.05" height="2.7" fill="#777777"/>
<rect x="829.0" y="708.9" width="1.05" height="2.7" fill="#777777"/>
<rect x="830.0" y="708.6" width="1.05" height="2.7" fill="#777777"/>
<rect x="831.0" y="708.3" width="1.05" height="2.7" fill="#777777"/>
<rect x="832.0" y="708.0" width="1.05" height="2.7" fill="#777777"/>
<rect x="833.0" y="707.8" width="1.05" height="2.7" fill="#777777"/>
<rect x="834.0" y="707.5" width="1.05" height="2.7" fill="#777777"/>
<rect x="835.0" y="707.2" width="1.05" height="2.7" fill="#777777"/>
<rect x="836.0" y="706.9" width="1.05" height="2.7" fill="#777777"/>
<rect x="837.0" y="706.7" width="1.05" height="2.7" fill="#777777"/>
<rect x="838.0" y="706.5" width="1.05" height="2.6" fill="#777777"/>
<rect x="839.0" y="706.3" width="1.05" height="2.5" fill="#777777"/>
<rect x="840.0" y="706.1" width="1.05" height="2.5" fill="#777777"/>
<rect x="841.0" y="705.9" width="1.05" height="2.4" fill="#777777"/>
<rect x="842.0" y="705.7" width="1.05" height="2.4" fill="#777777"/>
<rect x="843.0" y="705.6" width="1.05" height="2.3" fill="#777777"/>
<rect x="844.0" y="705.4" width="1.05" height="2.2" fill="#777777"/>
<rect x="845.0" y="705.2" width="1.05" height="2.2" fill="#777777"/>
<rect x="846.0" y="705.0" width="1.05" height="2.1" fill="#777777"/>
<rect x="847.0" y="704.8" width="1.05" height="2.1" fill="#777777"/>
<rect x="848.0" y="704.6" width="1.05" height="2.1" fill="#777777"/>
<rect x="849.0" y="704.4" width="1.05" height="2.0" fill="#777777"/>
<rect x="850.0" y="704.2" width="1.05" height="2.0" fill="#777777"/>
<rect x="851.0" y="704.0" width="1.05" height="2.0" fill="#777777"/>
<rect x="852.0" y="703.8" width="1.05" height="2.0" fill="#777777"/>
<rect x="853.0" y="703.6" width="1.05" height="1.9" fill="#777777"/>
<rect x="854.0" y="703.5" width="1.05" height="1.9" fill="#777777"/>
<rect x="855.0" y="703.3" width="1.05" height="1.9" fill="#777777"/>
<rect x="856.0" y="703.1" width="1.05" height="1.9" fill="#777777"/>
<rect x="857.0" y="703.1" width="1.05" height="1.7" fill="#777777"/>
<rect x="858.0" y="703.2" width="1.05" height="1.4" fill="#777777"/>
<rect x="859.0" y="703.4" width="1.05" height="1.1" fill="#777777"/>
<rect x="860.0" y="703.5" width="1.05" height="0.8" fill="#777777"/>
<rect x="868.0" y="703.9" width="1.05" height="0.8" fill="#7a0000"/>
<rect x="869.0" y="703.9" width="1.05" height="0.9" fill="#7a0000"/>
<rect x="870.0" y="703.9" width="1.05" height="1.1" fill="#7a0000"/>
<rect x="871.0" y="703.9" width="1.05" height="1.2" fill="#7a0000"/>
<rect x="872.0" y="704.0" width="1.05" height="1.2" fill="#7a0000"/>
<rect x="873.0" y="704.1" width="1.05" height="1.3" fill="#7a0000"/>
<rect x="874.0" y="704.2" width="1.05" height="1.3" fill="#7a0000"/>
<rect x="875.0" y="704.2" width="1.05" height="1.1" fill="#7a0000"/>
<rect x="876.0" y="704.3" width="1.05" height="0.9" fill="#7a0000"/>
<rect x="890.0" y="704.0" width="1.05" height="0.8" fill="#777777"/>
<rect x="891.0" y="703.9" width="1.05" height="0.9" fill="#777777"/>
<rect x="892.0" y="703.8" width="1.05" height="0.9" fill="#777777"/>
<rect x="893.0" y="703.7" width="1.05" height="0.9" fill="#777777"/>
<rect x="894.0" y="703.6" width="1.05" height="1.0" fill="#777777"/>
<rect x="895.0" y="703.5" width="1.05" height="1.0" fill="#777777"/>
<rect x="896.0" y="703.4" width="1.05" height="1.0" fill="#777777"/>
<rect x="897.0" y="703.3" width="1.05" height="1.0" fill="#777777"/>
<rect x="898.0" y="703.2" width="1.05" height="1.0" fill="#777777"/>
<rect x="899.0" y="703.1" width="1.05" height="1.0" fill="#777777"/>
<rect x="900.0" y="703.0" width="1.05" height="1.0" fill="#777777"/>
<rect x="901.0" y="703.0" width="1.05" height="0.9" fill="#777777"/>
<rect x="942.0" y="702.0" width="1.05" height="0.8" fill="#777777"/>
<rect x="943.0" y="701.8" width="1.05" height="1.0" fill="#777777"/>
<rect x="944.0" y="701.6" width="1.05" height="1.1" fill="#777777"/>
<rect x="945.0" y="701.4" width="1.05" height="1.3" fill="#777777"/>
<rect x="946.0" y="701.2" width="1.05" height="1.4" fill="#777777"/>
<rect x="947.0" y="701.0" width="1.05" height="1.5" fill="#777777"/>
<rect x="948.0" y="700.8" width="1.05" height="1.6" fill="#777777"/>
<rect x="949.0" y="700.6" width="1.05" height="1.7" fill="#777777"/>
<rect x="950.0" y="700.4" width="1.05" height="1.8" fill="#777777"/>
<rect x="951.0" y="700.2" width="1.05" height="1.8" fill="#777777"/>
<rect x="952.0" y="700.0" width="1.05" height="1.9" fill="#777777"/>
<rect x="953.0" y="699.7" width="1.05" height="2.0" fill="#777777"/>
<rect x="954.0" y="699.5" width="1.05" height="2.0" fill="#777777"/>
<rect x="955.0" y="699.3" width="1.05" height="2.0" fill="#777777"/>
<rect x="956.0" y="699.1" width="1.05" height="2.1" fill="#777777"/>
<rect x="957.0" y="698.9" width="1.05" height="2.1" fill="#777777"/>
<rect x="958.0" y="698.7" width="1.05" height="2.1" fill="#777777"/>
<rect x="959.0" y="698.5" width="1.05" height="2.1" fill="#777777"/>
<rect x="960.0" y="698.3" width="1.05" height="2.1" fill="#777777"/>
<rect x="961.0" y="698.1" width="1.05" height="2.1" fill="#777777"/>
<rect x="962.0" y="697.9" width="1.05" height="2.1" fill="#777777"/>
<rect x="963.0" y="697.7" width="1.05" height="2.1" fill="#777777"/>
<rect x="964.0" y="697.5" width="1.05" height="2.1" fill="#777777"/>
<rect x="965.0" y="697.3" width="1.05" height="2.1" fill="#777777"/>
<rect x="966.0" y="697.0" width="1.05" height="2.1" fill="#777777"/>
<rect x="967.0" y="696.8" width="1.05" height="2.1" fill="#777777"/>
<rect x="968.0" y="696.3" width="1.05" height="2.3" fill="#777777"/>
<rect x="969.0" y="695.8" width="1.05" height="2.7" fill="#777777"/>
<rect x="970.0" y="695.2" width="1.05" height="3.0" fill="#777777"/>
<rect x="971.0" y="694.7" width="1.05" height="3.3" fill="#777777"/>
<rect x="972.0" y="694.1" width="1.05" height="3.5" fill="#777777"/>
<rect x="973.0" y="693.5" width="1.05" height="3.8" fill="#777777"/>
<rect x="974.0" y="693.0" width="1.05" height="4.0" fill="#777777"/>
<rect x="975.0" y="692.4" width="1.05" height="4.3" fill="#777777"/>
<rect x="976.0" y="691.8" width="1.05" height="4.5" fill="#777777"/>
<rect x="977.0" y="691.3" width="1.05" height="4.7" fill="#777777"/>
<rect x="978.0" y="690.7" width="1.05" height="4.8" fill="#777777"/>
<rect x="979.0" y="690.2" width="1.05" height="5.0" fill="#777777"/>
<rect x="980.0" y="689.6" width="1.05" height="5.1" fill="#777777"/>
<rect x="981.0" y="689.0" width="1.05" height="5.2" fill="#777777"/>
<rect x="982.0" y="688.5" width="1.05" height="5.4" fill="#777777"/>
<rect x="983.0" y="687.9" width="1.05" height="5.4" fill="#777777"/>
<rect x="984.0" y="687.3" width="1.05" height="5.5" fill="#777777"/>
<rect x="985.0" y="686.8" width="1.05" height="5.6" fill="#777777"/>
<rect x="986.0" y="686.2" width="1.05" height="5.6" fill="#777777"/>
<rect x="987.0" y="685.7" width="1.05" height="5.6" fill="#777777"/>
<rect x="988.0" y="685.5" width="1.05" height="5.2" fill="#777777"/>
<rect x="989.0" y="685.4" width="1.05" height="4.8" fill="#777777"/>
<rect x="990.0" y="685.3" width="1.05" height="4.4" fill="#777777"/>
<rect x="991.0" y="685.2" width="1.05" height="4.0" fill="#777777"/>
<rect x="992.0" y="685.1" width="1.05" height="3.7" fill="#777777"/>
<rect x="993.0" y="685.0" width="1.05" height="3.4" fill="#777777"/>
<rect x="994.0" y="684.9" width="1.05" height="3.1" fill="#777777"/>
<rect x="995.0" y="684.8" width="1.05" height="2.8" fill="#777777"/>
<rect x="996.0" y="684.7" width="1.05" height="2.5" fill="#777777"/>
<rect x="997.0" y="684.6" width="1.05" height="2.3" fill="#777777"/>
<rect x="998.0" y="684.5" width="1.05" height="2.0" fill="#777777"/>
<rect x="999.0" y="684.4" width="1.05" height="1.8" fill="#777777"/>
<rect x="1000.0" y="684.3" width="1.05" height="1.7" fill="#777777"/>
<rect x="1001.0" y="684.1" width="1.05" height="1.5" fill="#777777"/>
<rect x="1002.0" y="684.0" width="1.05" height="1.4" fill="#777777"/>
<rect x="1003.0" y="683.9" width="1.05" height="1.3" fill="#777777"/>
<rect x="1004.0" y="683.8" width="1.05" height="1.2" fill="#777777"/>
<rect x="1005.0" y="683.7" width="1.05" height="1.1" fill="#777777"/>
<rect x="1006.0" y="683.6" width="1.05" height="1.1" fill="#777777"/>
<rect x="1007.0" y="683.5" width="1.05" height="1.0" fill="#777777"/>
<rect x="1008.0" y="683.4" width="1.05" height="1.0" fill="#777777"/>
<rect x="1009.0" y="683.3" width="1.05" height="1.0" fill="#777777"/>
<rect x="1010.0" y="683.2" width="1.05" height="1.0" fill="#777777"/>
<rect x="1011.0" y="683.1" width="1.05" height="1.0" fill="#777777"/>
<rect x="1012.0" y="683.0" width="1.05" height="1.0" fill="#777777"/>
<rect x="1013.0" y="682.9" width="1.05" height="1.1" fill="#777777"/>
<rect x="1014.0" y="682.7" width="1.05" height="1.1" fill="#777777"/>
<rect x="1015.0" y="682.6" width="1.05" height="1.1" fill="#777777"/>
<rect x="1016.0" y="682.5" width="1.05" height="1.1" fill="#777777"/>
<rect x="1017.0" y="682.3" width="1.05" height="1.2" fill="#777777"/>
<rect x="1018.0" y="682.2" width="1.05" height="1.2" fill="#777777"/>
<rect x="1019.0" y="682.1" width="1.05" height="1.2" fill="#777777"/>
<rect x="1020.0" y="681.9" width="1.05" height="1.2" fill="#777777"/>
<rect x="1021.0" y="681.8" width="1.05" height="1.2" fill="#777777"/>
<rect x="1022.0" y="681.7" width="1.05" height="1.2" fill="#777777"/>
<rect x="1023.0" y="681.6" width="1.05" height="1.3" fill="#777777"/>
<rect x="1024.0" y="681.4" width="1.05" height="1.3" fill="#777777"/>
<rect x="1025.0" y="681.3" width="1.05" height="1.3" fill="#777777"/>
<rect x="1026.0" y="681.2" width="1.05" height="1.3" fill="#777777"/>
<rect x="1027.0" y="681.0" width="1.05" height="1.3" fill="#777777"/>
<rect x="1028.0" y="680.9" width="1.05" height="1.3" fill="#777777"/>
<rect x="1029.0" y="680.8" width="1.05" height="1.3" fill="#777777"/>
<rect x="1030.0" y="680.6" width="1.05" height="1.3" fill="#777777"/>
<rect x="1031.0" y="680.5" width="1.05" height="1.3" fill="#777777"/>
<rect x="1032.0" y="680.4" width="1.05" height="1.3" fill="#777777"/>
<rect x="1033.0" y="680.2" width="1.05" height="1.3" fill="#777777"/>
<rect x="1034.0" y="680.1" width="1.05" height="1.3" fill="#777777"/>
<rect x="1035.0" y="680.0" width="1.05" height="1.3" fill="#777777"/>
<rect x="1036.0" y="679.8" width="1.05" height="1.3" fill="#777777"/>
<rect x="1037.0" y="679.7" width="1.05" height="1.3" fill="#777777"/>
<rect x="1038.0" y="679.6" width="1.05" height="1.3" fill="#777777"/>
<rect x="1039.0" y="679.5" width="1.05" height="1.3" fill="#777777"/>
<rect x="1040.0" y="679.2" width="1.05" height="1.4" fill="#777777"/>
<rect x="1041.0" y="678.9" width="1.05" height="1.6" fill="#777777"/>
<rect x="1042.0" y="678.5" width="1.05" height="1.8" fill="#777777"/>
<rect x="1043.0" y="678.2" width="1.05" height="2.0" fill="#777777"/>
<rect x="1044.0" y="677.9" width="1.05" height="2.1" fill="#777777"/>
<rect x="1045.0" y="677.5" width="1.05" height="2.3" fill="#777777"/>
<rect x="1046.0" y="677.2" width="1.05" height="2.4" fill="#777777"/>
<rect x="1047.0" y="676.8" width="1.05" height="2.5" fill="#777777"/>
<rect x="1048.0" y="676.5" width="1.05" height="2.7" fill="#777777"/>
<rect x="1049.0" y="676.2" width="1.05" height="2.8" fill="#777777"/>
<rect x="1050.0" y="675.8" width="1.05" height="2.9" fill="#777777"/>
<rect x="1051.0" y="675.5" width="1.05" height="3.0" fill="#777777"/>
<rect x="1052.0" y="675.2" width="1.05" height="3.1" fill="#777777"/>
<rect x="1053.0" y="674.8" width="1.05" height="3.1" fill="#777777"/>
<rect x="1054.0" y="674.5" width="1.05" height="3.2" fill="#777777"/>
<rect x="1055.0" y="674.6" width="1.05" height="2.8" fill="#777777"/>
<rect x="1056.0" y="674.8" width="1.05" height="2.4" fill="#777777"/>
<rect x="1057.0" y="675.1" width="1.05" height="1.9" fill="#777777"/>
<rect x="1058.0" y="675.3" width="1.05" height="1.4" fill="#777777"/>
<rect x="1059.0" y="675.6" width="1.05" height="1.0" fill="#777777"/>
<rect x="1064.0" y="676.0" width="1.05" height="0.9" fill="#7a0000"/>
<rect x="1065.0" y="675.9" width="1.05" height="1.2" fill="#7a0000"/>
<rect x="1066.0" y="675.9" width="1.05" height="1.4" fill="#7a0000"/>
<rect x="1067.0" y="675.9" width="1.05" height="1.7" fill="#7a0000"/>
<rect x="1068.0" y="676.0" width="1.05" height="1.9" fill="#7a0000"/>
<rect x="1069.0" y="676.0" width="1.05" height="2.0" fill="#7a0000"/>
<rect x="1070.0" y="676.1" width="1.05" height="2.2" fill="#7a0000"/>
<rect x="1071.0" y="676.3" width="1.05" height="2.3" fill="#7a0000"/>
<rect x="1072.0" y="676.4" width="1.05" height="2.4" fill="#7a0000"/>
<rect x="1073.0" y="676.6" width="1.05" height="2.5" fill="#7a0000"/>
<rect x="1074.0" y="676.8" width="1.05" height="2.5" fill="#7a0000"/>
<rect x="1075.0" y="677.1" width="1.05" height="2.4" fill="#7a0000"/>
<rect x="1076.0" y="677.3" width="1.05" height="2.3" fill="#7a0000"/>
<rect x="1077.0" y="677.5" width="1.05" height="2.2" fill="#7a0000"/>
<rect x="1078.0" y="677.8" width="1.05" height="2.2" fill="#7a0000"/>
<rect x="1079.0" y="678.0" width="1.05" height="2.1" fill="#7a0000"/>
<rect x="1080.0" y="678.2" width="1.05" height="2.0" fill="#7a0000"/>
<rect x="1081.0" y="678.4" width="1.05" height="1.9" fill="#7a0000"/>
<rect x="1082.0" y="678.7" width="1.05" height="1.9" fill="#7a0000"/>
<rect x="1083.0" y="678.9" width="1.05" height="1.8" fill="#7a0000"/>
<rect x="1084.0" y="679.1" width="1.05" height="1.7" fill="#7a0000"/>
<rect x="1085.0" y="679.3" width="1.05" height="1.7" fill="#7a0000"/>
<rect x="1086.0" y="679.5" width="1.05" height="1.6" fill="#7a0000"/>
<rect x="1087.0" y="679.6" width="1.05" height="1.6" fill="#7a0000"/>
<rect x="1088.0" y="679.8" width="1.05" height="1.6" fill="#7a0000"/>
<rect x="1089.0" y="680.0" width="1.05" height="1.5" fill="#7a0000"/>
<rect x="1090.0" y="680.2" width="1.05" height="1.5" fill="#7a0000"/>
<rect x="1091.0" y="680.3" width="1.05" height="1.5" fill="#7a0000"/>
<rect x="1092.0" y="680.5" width="1.05" height="1.5" fill="#7a0000"/>
<rect x="1093.0" y="680.6" width="1.05" height="1.5" fill="#7a0000"/>
<rect x="1094.0" y="680.8" width="1.05" height="1.4" fill="#7a0000"/>
<rect x="1095.0" y="680.9" width="1.05" height="1.4" fill="#7a0000"/>
<rect x="1096.0" y="681.1" width="1.05" height="1.4" fill="#7a0000"/>
<rect x="1097.0" y="681.2" width="1.05" height="1.4" fill="#7a0000"/>
<rect x="1098.0" y="681.4" width="1.05" height="1.4" fill="#7a0000"/>
<rect x="1099.0" y="681.5" width="1.05" height="1.4" fill="#7a0000"/>
<rect x="1100.0" y="681.7" width="1.05" height="1.3" fill="#7a0000"/>
<rect x="1101.0" y="681.8" width="1.05" height="1.1" fill="#7a0000"/>
<rect x="1102.0" y="681.9" width="1.05" height="1.0" fill="#7a0000"/>
<rect x="1103.0" y="682.0" width="1.05" height="0.8" fill="#7a0000"/>
<rect x="1128.0" y="682.4" width="1.05" height="0.9" fill="#7a0000"/>
<rect x="1129.0" y="682.4" width="1.05" height="1.2" fill="#7a0000"/>
<rect x="1130.0" y="682.5" width="1.05" height="1.5" fill="#7a0000"/>
<rect x="1131.0" y="682.6" width="1.05" height="1.8" fill="#7a0000"/>
<rect x="1132.0" y="682.7" width="1.05" height="2.0" fill="#7a0000"/>
<rect x="1133.0" y="682.8" width="1.05" height="2.3" fill="#7a0000"/>
<rect x="1134.0" y="682.9" width="1.05" height="2.5" fill="#7a0000"/>
<rect x="1135.0" y="683.1" width="1.05" height="2.7" fill="#7a0000"/>
<rect x="1136.0" y="683.3" width="1.05" height="2.8" fill="#7a0000"/>
<rect x="1137.0" y="683.5" width="1.05" height="3.0" fill="#7a0000"/>
<rect x="1138.0" y="683.7" width="1.05" height="3.1" fill="#7a0000"/>
<rect x="1139.0" y="683.9" width="1.05" height="3.2" fill="#7a0000"/>
<rect x="1140.0" y="684.2" width="1.05" height="3.3" fill="#7a0000"/>
<rect x="1141.0" y="684.5" width="1.05" height="3.4" fill="#7a0000"/>
<rect x="1142.0" y="684.8" width="1.05" height="3.4" fill="#7a0000"/>
<rect x="1143.0" y="685.1" width="1.05" height="3.5" fill="#7a0000"/>
<rect x="1144.0" y="685.4" width="1.05" height="3.5" fill="#7a0000"/>
<rect x="1145.0" y="685.7" width="1.05" height="3.5" fill="#7a0000"/>
<rect x="1146.0" y="686.1" width="1.05" height="3.5" fill="#7a0000"/>
<rect x="1147.0" y="686.4" width="1.05" height="3.5" fill="#7a0000"/>
<rect x="1148.0" y="686.8" width="1.05" height="3.5" fill="#7a0000"/>
<rect x="1149.0" y="687.1" width="1.05" height="3.5" fill="#7a0000"/>
<rect x="1150.0" y="687.5" width="1.05" height="3.0" fill="#7a0000"/>
<rect x="1151.0" y="687.8" width="1.05" height="2.7" fill="#7a0000"/>
<rect x="1152.0" y="688.1" width="1.05" height="2.3" fill="#7a0000"/>
<rect x="1153.0" y="688.3" width="1.05" height="1.9" fill="#7a0000"/>
<rect x="1154.0" y="688.6" width="1.05" height="1.6" fill="#7a0000"/>
<rect x="1155.0" y="688.8" width="1.05" height="1.3" fill="#7a0000"/>
<rect x="1156.0" y="689.0" width="1.05" height="1.0" fill="#7a0000"/>
<rect x="1193.0" y="688.3" width="1.05" height="1.0" fill="#777777"/>
<rect x="1194.0" y="688.0" width="1.05" height="1.3" fill="#777777"/>
<rect x="1195.0" y="687.6" width="1.05" height="1.6" fill="#777777"/>
<rect x="1196.0" y="687.2" width="1.05" height="1.8" fill="#777777"/>
<rect x="1197.0" y="686.9" width="1.05" height="2.1" fill="#777777"/>
<rect x="1198.0" y="686.5" width="1.05" height="2.3" fill="#777777"/>
<rect x="1199.0" y="686.1" width="1.05" height="2.5" fill="#777777"/>
<rect x="1200.0" y="685.8" width="1.05" height="2.7" fill="#777777"/>
<rect x="1201.0" y="685.4" width="1.05" height="2.8" fill="#777777"/>
<rect x="1202.0" y="685.1" width="1.05" height="3.0" fill="#777777"/>
<rect x="1203.0" y="684.7" width="1.05" height="3.1" fill="#777777"/>
<rect x="1204.0" y="684.3" width="1.05" height="3.3" fill="#777777"/>
<rect x="1205.0" y="684.0" width="1.05" height="3.4" fill="#777777"/>
<rect x="1206.0" y="683.6" width="1.05" height="3.4" fill="#777777"/>
<rect x="1207.0" y="683.2" width="1.05" height="3.5" fill="#777777"/>
<rect x="1208.0" y="683.1" width="1.05" height="3.4" fill="#777777"/>
<rect x="1209.0" y="683.1" width="1.05" height="3.1" fill="#777777"/>
<rect x="1210.0" y="683.1" width="1.05" height="2.8" fill="#777777"/>
<rect x="1211.0" y="683.1" width="1.05" height="2.5" fill="#777777"/>
<rect x="1212.0" y="683.1" width="1.05" height="2.2" fill="#777777"/>
<rect x="1213.0" y="683.1" width="1.05" height="1.9" fill="#777777"/>
<rect x="1214.0" y="683.1" width="1.05" height="1.7" fill="#777777"/>
<rect x="1215.0" y="683.1" width="1.05" height="1.4" fill="#777777"/>
<rect x="1216.0" y="683.1" width="1.05" height="1.2" fill="#777777"/>
<rect x="1217.0" y="683.1" width="1.05" height="1.0" fill="#777777"/>
<rect x="1218.0" y="683.1" width="1.05" height="0.8" fill="#777777"/>
<rect x="1238.0" y="683.4" width="1.05" height="0.8" fill="#7a0000"/>
<rect x="1239.0" y="683.5" width="1.05" height="0.8" fill="#7a0000"/>
<rect x="1240.0" y="683.5" width="1.05" height="0.9" fill="#7a0000"/>
<rect x="1258.0" y="682.8" width="1.05" height="0.9" fill="#777777"/>
<rect x="1259.0" y="682.5" width="1.05" height="1.2" fill="#777777"/>
<rect x="1260.0" y="682.2" width="1.05" height="1.4" fill="#777777"/>
<rect x="1261.0" y="681.9" width="1.05" height="1.6" fill="#777777"/>
<rect x="1262.0" y="681.6" width="1.05" height="1.8" fill="#777777"/>
<rect x="1263.0" y="681.2" width="1.05" height="1.9" fill="#777777"/>
<rect x="1264.0" y="680.9" width="1.05" height="2.1" fill="#777777"/>
<rect x="1265.0" y="680.6" width="1.05" height="2.3" fill="#777777"/>
<rect x="1266.0" y="680.3" width="1.05" height="2.4" fill="#777777"/>
<rect x="1267.0" y="680.0" width="1.05" height="2.5" fill="#777777"/>
<rect x="1268.0" y="680.1" width="1.05" height="2.3" fill="#777777"/>
<rect x="1269.0" y="680.3" width="1.05" height="1.9" fill="#777777"/>
<rect x="1270.0" y="680.5" width="1.05" height="1.5" fill="#777777"/>
<rect x="1271.0" y="680.7" width="1.05" height="1.2" fill="#777777"/>
<rect x="1272.0" y="680.9" width="1.05" height="0.9" fill="#777777"/>
<rect x="1278.0" y="681.2" width="1.05" height="1.2" fill="#7a0000"/>
<rect x="1279.0" y="681.3" width="1.05" height="1.8" fill="#7a0000"/>
<rect x="1280.0" y="681.3" width="1.05" height="2.3" fill="#7a0000"/>
<rect x="1281.0" y="681.4" width="1.05" height="2.8" fill="#7a0000"/>
<rect x="1282.0" y="681.5" width="1.05" height="3.3" fill="#7a0000"/>
<rect x="1283.0" y="681.7" width="1.05" height="3.7" fill="#7a0000"/>
<rect x="1284.0" y="682.0" width="1.05" height="4.1" fill="#7a0000"/>
<rect x="1285.0" y="682.2" width="1.05" height="4.4" fill="#7a0000"/>
<rect x="1286.0" y="682.5" width="1.05" height="4.7" fill="#7a0000"/>
<rect x="1287.0" y="682.9" width="1.05" height="4.9" fill="#7a0000"/>
<rect x="1288.0" y="683.3" width="1.05" height="5.1" fill="#7a0000"/>
<rect x="1289.0" y="683.7" width="1.05" height="5.3" fill="#7a0000"/>
<rect x="1290.0" y="684.2" width="1.05" height="5.4" fill="#7a0000"/>
<rect x="1291.0" y="684.6" width="1.05" height="5.3" fill="#7a0000"/>
<rect x="1292.0" y="685.1" width="1.05" height="5.3" fill="#7a0000"/>
<rect x="1293.0" y="685.6" width="1.05" height="5.2" fill="#7a0000"/>
<rect x="1294.0" y="686.1" width="1.05" height="5.2" fill="#7a0000"/>
<rect x="1295.0" y="686.3" width="1.05" height="5.4" fill="#7a0000"/>
<rect x="1296.0" y="686.5" width="1.05" height="5.5" fill="#7a0000"/>
<rect x="1297.0" y="686.8" width="1.05" height="5.7" fill="#7a0000"/>
<rect x="1298.0" y="687.1" width="1.05" height="5.8" fill="#7a0000"/>
<rect x="1299.0" y="687.4" width="1.05" height="5.9" fill="#7a0000"/>
<rect x="1300.0" y="687.7" width="1.05" height="6.0" fill="#7a0000"/>
<rect x="1301.0" y="688.0" width="1.05" height="6.2" fill="#7a0000"/>
<rect x="1302.0" y="688.3" width="1.05" height="6.3" fill="#7a0000"/>
<rect x="1303.0" y="688.6" width="1.05" height="6.4" fill="#7a0000"/>
<path d="M0.0,690.6 L1.0,690.6 L2.0,690.7 L3.0,690.7 L4.0,690.7 L5.0,690.8 L6.0,690.9 L7.0,690.9 L8.0,691.0 L9.0,691.1 L10.0,691.2 L11.0,691.3 L12.0,691.4 L13.0,691.6 L14.0,691.7 L15.0,691.9 L16.0,692.0 L17.0,692.2 L18.0,692.4 L19.0,692.6 L20.0,692.8 L21.0,693.1 L22.0,693.3 L23.0,693.5 L24.0,693.7 L25.0,693.9 L26.0,694.2 L27.0,694.4 L28.0,694.6 L29.0,694.8 L30.0,695.1 L31.0,695.3 L32.0,695.5 L33.0,695.7 L34.0,696.0 L35.0,696.2 L36.0,696.4 L37.0,696.6 L38.0,696.9 L39.0,697.1 L40.0,697.3 L41.0,697.5 L42.0,697.7 L43.0,698.0 L44.0,698.2 L45.0,698.4 L46.0,698.6 L47.0,698.8 L48.0,699.0 L49.0,699.1 L50.0,699.3 L51.0,699.4 L52.0,699.5 L53.0,699.6 L54.0,699.7 L55.0,699.8 L56.0,699.9 L57.0,699.9 L58.0,699.9 L59.0,699.9 L60.0,699.9 L61.0,699.9 L62.0,699.9 L63.0,699.8 L64.0,699.8 L65.0,699.7 L66.0,699.6 L67.0,699.5 L68.0,699.5 L69.0,699.4 L70.0,699.3 L71.0,699.2 L72.0,699.1 L73.0,699.0 L74.0,698.9 L75.0,698.8 L76.0,698.7 L77.0,698.6 L78.0,698.5 L79.0,698.4 L80.0,698.2 L81.0,698.0 L82.0,697.9 L83.0,697.7 L84.0,697.5 L85.0,697.3 L86.0,697.0 L87.0,696.8 L88.0,696.5 L89.0,696.3 L90.0,696.0 L91.0,695.7 L92.0,695.4 L93.0,695.1 L94.0,694.8 L95.0,694.4 L96.0,694.1 L97.0,693.8 L98.0,693.4 L99.0,693.1 L100.0,692.7 L101.0,692.4 L102.0,692.0 L103.0,691.7 L104.0,691.3 L105.0,691.0 L106.0,690.7 L107.0,690.3 L108.0,690.0 L109.0,689.7 L110.0,689.3 L111.0,689.0 L112.0,688.7 L113.0,688.3 L114.0,688.0 L115.0,687.7 L116.0,687.4 L117.0,687.0 L118.0,686.7 L119.0,686.4 L120.0,686.1 L121.0,685.7 L122.0,685.4 L123.0,685.1 L124.0,684.8 L125.0,684.5 L126.0,684.2 L127.0,683.9 L128.0,683.7 L129.0,683.4 L130.0,683.2 L131.0,683.0 L132.0,682.9 L133.0,682.7 L134.0,682.6 L135.0,682.5 L136.0,682.4 L137.0,682.3 L138.0,682.3 L139.0,682.3 L140.0,682.2 L141.0,682.3 L142.0,682.3 L143.0,682.4 L144.0,682.4 L145.0,682.5 L146.0,682.7 L147.0,682.8 L148.0,682.9 L149.0,683.0 L150.0,683.1 L151.0,683.3 L152.0,683.4 L153.0,683.5 L154.0,683.6 L155.0,683.7 L156.0,683.9 L157.0,684.0 L158.0,684.1 L159.0,684.3 L160.0,684.4 L161.0,684.5 L162.0,684.6 L163.0,684.8 L164.0,684.9 L165.0,685.0 L166.0,685.2 L167.0,685.3 L168.0,685.4 L169.0,685.6 L170.0,685.7 L171.0,685.8 L172.0,686.0 L173.0,686.1 L174.0,686.3 L175.0,686.4 L176.0,686.6 L177.0,686.8 L178.0,687.0 L179.0,687.1 L180.0,687.3 L181.0,687.5 L182.0,687.7 L183.0,687.9 L184.0,688.1 L185.0,688.4 L186.0,688.6 L187.0,688.8 L188.0,689.0 L189.0,689.3 L190.0,689.5 L191.0,689.8 L192.0,690.0 L193.0,690.3 L194.0,690.5 L195.0,690.7 L196.0,690.9 L197.0,691.1 L198.0,691.3 L199.0,691.5 L200.0,691.6 L201.0,691.8 L202.0,691.9 L203.0,692.0 L204.0,692.1 L205.0,692.2 L206.0,692.2 L207.0,692.2 L208.0,692.3 L209.0,692.3 L210.0,692.3 L211.0,692.2 L212.0,692.2 L213.0,692.1 L214.0,692.0 L215.0,692.0 L216.0,691.9 L217.0,691.8 L218.0,691.7 L219.0,691.6 L220.0,691.5 L221.0,691.4 L222.0,691.4 L223.0,691.3 L224.0,691.3 L225.0,691.3 L226.0,691.2 L227.0,691.2 L228.0,691.3 L229.0,691.3 L230.0,691.3 L231.0,691.4 L232.0,691.5 L233.0,691.5 L234.0,691.6 L235.0,691.7 L236.0,691.8 L237.0,692.0 L238.0,692.1 L239.0,692.3 L240.0,692.4 L241.0,692.6 L242.0,692.8 L243.0,692.9 L244.0,693.1 L245.0,693.3 L246.0,693.4 L247.0,693.6 L248.0,693.8 L249.0,693.9 L250.0,694.1 L251.0,694.3 L252.0,694.4 L253.0,694.6 L254.0,694.8 L255.0,694.9 L256.0,695.1 L257.0,695.2 L258.0,695.4 L259.0,695.6 L260.0,695.7 L261.0,695.9 L262.0,696.1 L263.0,696.2 L264.0,696.4 L265.0,696.5 L266.0,696.7 L267.0,696.8 L268.0,697.0 L269.0,697.2 L270.0,697.3 L271.0,697.5 L272.0,697.6 L273.0,697.8 L274.0,697.9 L275.0,698.1 L276.0,698.2 L277.0,698.4 L278.0,698.6 L279.0,698.7 L280.0,698.9 L281.0,699.0 L282.0,699.2 L283.0,699.3 L284.0,699.5 L285.0,699.7 L286.0,699.8 L287.0,700.0 L288.0,700.1 L289.0,700.3 L290.0,700.4 L291.0,700.5 L292.0,700.6 L293.0,700.6 L294.0,700.7 L295.0,700.7 L296.0,700.7 L297.0,700.6 L298.0,700.6 L299.0,700.5 L300.0,700.4 L301.0,700.2 L302.0,700.1 L303.0,699.9 L304.0,699.7 L305.0,699.5 L306.0,699.3 L307.0,699.0 L308.0,698.7 L309.0,698.4 L310.0,698.1 L311.0,697.7 L312.0,697.4 L313.0,697.1 L314.0,696.8 L315.0,696.4 L316.0,696.1 L317.0,695.8 L318.0,695.5 L319.0,695.2 L320.0,694.9 L321.0,694.5 L322.0,694.2 L323.0,693.9 L324.0,693.6 L325.0,693.3 L326.0,693.0 L327.0,692.7 L328.0,692.4 L329.0,692.0 L330.0,691.7 L331.0,691.5 L332.0,691.2 L333.0,690.9 L334.0,690.6 L335.0,690.3 L336.0,690.1 L337.0,689.8 L338.0,689.5 L339.0,689.3 L340.0,689.0 L341.0,688.8 L342.0,688.6 L343.0,688.5 L344.0,688.3 L345.0,688.2 L346.0,688.1 L347.0,688.0 L348.0,687.9 L349.0,687.9 L350.0,687.9 L351.0,687.9 L352.0,687.9 L353.0,687.9 L354.0,687.9 L355.0,688.0 L356.0,688.1 L357.0,688.2 L358.0,688.4 L359.0,688.5 L360.0,688.7 L361.0,688.9 L362.0,689.1 L363.0,689.3 L364.0,689.6 L365.0,689.8 L366.0,690.0 L367.0,690.3 L368.0,690.5 L369.0,690.8 L370.0,691.0 L371.0,691.3 L372.0,691.6 L373.0,691.9 L374.0,692.1 L375.0,692.4 L376.0,692.7 L377.0,693.0 L378.0,693.3 L379.0,693.6 L380.0,693.9 L381.0,694.2 L382.0,694.5 L383.0,694.8 L384.0,695.0 L385.0,695.3 L386.0,695.5 L387.0,695.7 L388.0,696.0 L389.0,696.2 L390.0,696.4 L391.0,696.6 L392.0,696.8 L393.0,697.0 L394.0,697.2 L395.0,697.4 L396.0,697.5 L397.0,697.7 L398.0,697.8 L399.0,698.0 L400.0,698.1 L401.0,698.2 L402.0,698.4 L403.0,698.5 L404.0,698.6 L405.0,698.8 L406.0,698.9 L407.0,699.1 L408.0,699.2 L409.0,699.4 L410.0,699.5 L411.0,699.7 L412.0,699.8 L413.0,700.0 L414.0,700.2 L415.0,700.3 L416.0,700.5 L417.0,700.7 L418.0,700.9 L419.0,701.0 L420.0,701.2 L421.0,701.4 L422.0,701.5 L423.0,701.6 L424.0,701.7 L425.0,701.8 L426.0,701.8 L427.0,701.9 L428.0,701.9 L429.0,701.9 L430.0,701.8 L431.0,701.8 L432.0,701.7 L433.0,701.6 L434.0,701.5 L435.0,701.4 L436.0,701.3 L437.0,701.1 L438.0,701.0 L439.0,700.8 L440.0,700.7 L441.0,700.5 L442.0,700.4 L443.0,700.3 L444.0,700.2 L445.0,700.1 L446.0,700.0 L447.0,699.9 L448.0,699.9 L449.0,699.8 L450.0,699.8 L451.0,699.8 L452.0,699.8 L453.0,699.9 L454.0,699.9 L455.0,700.0 L456.0,700.0 L457.0,700.1 L458.0,700.2 L459.0,700.2 L460.0,700.3 L461.0,700.3 L462.0,700.4 L463.0,700.5 L464.0,700.5 L465.0,700.6 L466.0,700.7 L467.0,700.7 L468.0,700.8 L469.0,700.8 L470.0,700.9 L471.0,701.0 L472.0,701.0 L473.0,701.1 L474.0,701.2 L475.0,701.2 L476.0,701.3 L477.0,701.3 L478.0,701.4 L479.0,701.4 L480.0,701.4 L481.0,701.4 L482.0,701.5 L483.0,701.5 L484.0,701.5 L485.0,701.5 L486.0,701.5 L487.0,701.5 L488.0,701.4 L489.0,701.4 L490.0,701.4 L491.0,701.4 L492.0,701.3 L493.0,701.3 L494.0,701.2 L495.0,701.1 L496.0,701.1 L497.0,701.0 L498.0,700.9 L499.0,700.7 L500.0,700.6 L501.0,700.5 L502.0,700.3 L503.0,700.1 L504.0,700.0 L505.0,699.8 L506.0,699.6 L507.0,699.4 L508.0,699.1 L509.0,698.9 L510.0,698.6 L511.0,698.4 L512.0,698.1 L513.0,697.8 L514.0,697.5 L515.0,697.2 L516.0,696.9 L517.0,696.6 L518.0,696.3 L519.0,696.0 L520.0,695.8 L521.0,695.5 L522.0,695.3 L523.0,695.0 L524.0,694.8 L525.0,694.6 L526.0,694.3 L527.0,694.1 L528.0,693.9 L529.0,693.7 L530.0,693.6 L531.0,693.4 L532.0,693.2 L533.0,693.1 L534.0,692.9 L535.0,692.8 L536.0,692.6 L537.0,692.5 L538.0,692.3 L539.0,692.2 L540.0,692.1 L541.0,691.9 L542.0,691.8 L543.0,691.6 L544.0,691.5 L545.0,691.4 L546.0,691.2 L547.0,691.1 L548.0,690.9 L549.0,690.8 L550.0,690.7 L551.0,690.5 L552.0,690.4 L553.0,690.3 L554.0,690.2 L555.0,690.1 L556.0,690.0 L557.0,689.9 L558.0,689.8 L559.0,689.8 L560.0,689.7 L561.0,689.6 L562.0,689.6 L563.0,689.5 L564.0,689.5 L565.0,689.5 L566.0,689.4 L567.0,689.4 L568.0,689.4 L569.0,689.4 L570.0,689.4 L571.0,689.4 L572.0,689.4 L573.0,689.4 L574.0,689.4 L575.0,689.5 L576.0,689.6 L577.0,689.7 L578.0,689.9 L579.0,690.2 L580.0,690.5 L581.0,690.8 L582.0,691.2 L583.0,691.6 L584.0,692.0 L585.0,692.5 L586.0,693.0 L587.0,693.5 L588.0,694.1 L589.0,694.7 L590.0,695.3 L591.0,696.0 L592.0,696.7 L593.0,697.4 L594.0,698.2 L595.0,699.0 L596.0,699.7 L597.0,700.5 L598.0,701.2 L599.0,702.0 L600.0,702.7 L601.0,703.4 L602.0,704.0 L603.0,704.6 L604.0,705.1 L605.0,705.6 L606.0,706.1 L607.0,706.6 L608.0,707.0 L609.0,707.5 L610.0,707.8 L611.0,708.2 L612.0,708.5 L613.0,708.8 L614.0,709.0 L615.0,709.2 L616.0,709.4 L617.0,709.6 L618.0,709.7 L619.0,709.8 L620.0,709.9 L621.0,709.9 L622.0,710.0 L623.0,710.0 L624.0,710.1 L625.0,710.1 L626.0,710.1 L627.0,710.2 L628.0,710.2 L629.0,710.2 L630.0,710.3 L631.0,710.3 L632.0,710.3 L633.0,710.3 L634.0,710.3 L635.0,710.3 L636.0,710.3 L637.0,710.3 L638.0,710.3 L639.0,710.3 L640.0,710.3 L641.0,710.3 L642.0,710.3 L643.0,710.2 L644.0,710.2 L645.0,710.2 L646.0,710.2 L647.0,710.1 L648.0,710.1 L649.0,710.1 L650.0,710.0 L651.0,710.0 L652.0,710.0 L653.0,710.0 L654.0,709.9 L655.0,709.9 L656.0,709.9 L657.0,709.8 L658.0,709.8 L659.0,709.8 L660.0,709.7 L661.0,709.7 L662.0,709.7 L663.0,709.7 L664.0,709.6 L665.0,709.6 L666.0,709.6 L667.0,709.5 L668.0,709.5 L669.0,709.5 L670.0,709.4 L671.0,709.4 L672.0,709.4 L673.0,709.4 L674.0,709.3 L675.0,709.3 L676.0,709.2 L677.0,709.2 L678.0,709.1 L679.0,709.0 L680.0,708.9 L681.0,708.8 L682.0,708.6 L683.0,708.5 L684.0,708.3 L685.0,708.1 L686.0,707.9 L687.0,707.7 L688.0,707.5 L689.0,707.3 L690.0,707.0 L691.0,706.7 L692.0,706.5 L693.0,706.2 L694.0,705.9 L695.0,705.5 L696.0,705.2 L697.0,704.9 L698.0,704.5 L699.0,704.2 L700.0,703.8 L701.0,703.5 L702.0,703.2 L703.0,702.9 L704.0,702.6 L705.0,702.3 L706.0,702.0 L707.0,701.7 L708.0,701.4 L709.0,701.1 L710.0,700.9 L711.0,700.6 L712.0,700.3 L713.0,700.1 L714.0,699.8 L715.0,699.6 L716.0,699.4 L717.0,699.1 L718.0,698.9 L719.0,698.7 L720.0,698.5 L721.0,698.3 L722.0,698.1 L723.0,697.9 L724.0,697.7 L725.0,697.5 L726.0,697.3 L727.0,697.2 L728.0,697.0 L729.0,696.8 L730.0,696.7 L731.0,696.6 L732.0,696.5 L733.0,696.4 L734.0,696.3 L735.0,696.2 L736.0,696.1 L737.0,696.1 L738.0,696.0 L739.0,696.0 L740.0,696.0 L741.0,696.0 L742.0,696.0 L743.0,696.0 L744.0,696.0 L745.0,696.0 L746.0,696.1 L747.0,696.1 L748.0,696.1 L749.0,696.2 L750.0,696.2 L751.0,696.3 L752.0,696.3 L753.0,696.3 L754.0,696.4 L755.0,696.4 L756.0,696.5 L757.0,696.6 L758.0,696.7 L759.0,696.8 L760.0,696.9 L761.0,697.0 L762.0,697.2 L763.0,697.4 L764.0,697.6 L765.0,697.8 L766.0,698.0 L767.0,698.2 L768.0,698.4 L769.0,698.7 L770.0,699.0 L771.0,699.2 L772.0,699.5 L773.0,699.9 L774.0,700.2 L775.0,700.5 L776.0,700.9 L777.0,701.2 L778.0,701.6 L779.0,701.9 L780.0,702.3 L781.0,702.6 L782.0,703.0 L783.0,703.3 L784.0,703.6 L785.0,704.0 L786.0,704.3 L787.0,704.6 L788.0,705.0 L789.0,705.3 L790.0,705.6 L791.0,705.9 L792.0,706.2 L793.0,706.6 L794.0,706.9 L795.0,707.2 L796.0,707.5 L797.0,707.8 L798.0,708.1 L799.0,708.4 L800.0,708.7 L801.0,709.0 L802.0,709.3 L803.0,709.6 L804.0,709.9 L805.0,710.2 L806.0,710.4 L807.0,710.7 L808.0,711.0 L809.0,711.3 L810.0,711.6 L811.0,711.8 L812.0,712.1 L813.0,712.2 L814.0,712.4 L815.0,712.5 L816.0,712.6 L817.0,712.7 L818.0,712.8 L819.0,712.8 L820.0,712.8 L821.0,712.8 L822.0,712.7 L823.0,712.6 L824.0,712.5 L825.0,712.4 L826.0,712.2 L827.0,712.0 L828.0,711.8 L829.0,711.6 L830.0,711.3 L831.0,711.0 L832.0,710.8 L833.0,710.5 L834.0,710.2 L835.0,709.9 L836.0,709.7 L837.0,709.4 L838.0,709.1 L839.0,708.9 L840.0,708.6 L841.0,708.4 L842.0,708.1 L843.0,707.9 L844.0,707.6 L845.0,707.4 L846.0,707.1 L847.0,706.9 L848.0,706.7 L849.0,706.4 L850.0,706.2 L851.0,706.0 L852.0,705.8 L853.0,705.6 L854.0,705.4 L855.0,705.2 L856.0,705.0 L857.0,704.8 L858.0,704.6 L859.0,704.5 L860.0,704.4 L861.0,704.2 L862.0,704.1 L863.0,704.1 L864.0,704.0 L865.0,703.9 L866.0,703.9 L867.0,703.9 L868.0,703.9 L869.0,703.9 L870.0,703.9 L871.0,703.9 L872.0,704.0 L873.0,704.1 L874.0,704.2 L875.0,704.2 L876.0,704.3 L877.0,704.4 L878.0,704.5 L879.0,704.6 L880.0,704.7 L881.0,704.8 L882.0,704.8 L883.0,704.8 L884.0,704.9 L885.0,704.9 L886.0,704.9 L887.0,704.9 L888.0,704.9 L889.0,704.8 L890.0,704.8 L891.0,704.8 L892.0,704.7 L893.0,704.6 L894.0,704.5 L895.0,704.4 L896.0,704.3 L897.0,704.2 L898.0,704.1 L899.0,704.0 L900.0,704.0 L901.0,703.9 L902.0,703.8 L903.0,703.7 L904.0,703.6 L905.0,703.5 L906.0,703.5 L907.0,703.4 L908.0,703.4 L909.0,703.3 L910.0,703.2 L911.0,703.2 L912.0,703.2 L913.0,703.1 L914.0,703.1 L915.0,703.1 L916.0,703.0 L917.0,703.0 L918.0,703.0 L919.0,703.0 L920.0,703.0 L921.0,703.0 L922.0,703.0 L923.0,703.0 L924.0,703.0 L925.0,703.0 L926.0,703.0 L927.0,703.0 L928.0,703.0 L929.0,703.0 L930.0,703.0 L931.0,703.0 L932.0,703.0 L933.0,703.0 L934.0,703.0 L935.0,703.0 L936.0,703.0 L937.0,703.0 L938.0,703.0 L939.0,703.0 L940.0,702.9 L941.0,702.9 L942.0,702.9 L943.0,702.8 L944.0,702.7 L945.0,702.7 L946.0,702.6 L947.0,702.5 L948.0,702.4 L949.0,702.3 L950.0,702.1 L951.0,702.0 L952.0,701.9 L953.0,701.7 L954.0,701.5 L955.0,701.4 L956.0,701.2 L957.0,701.0 L958.0,700.8 L959.0,700.6 L960.0,700.4 L961.0,700.2 L962.0,700.0 L963.0,699.7 L964.0,699.5 L965.0,699.3 L966.0,699.1 L967.0,698.9 L968.0,698.7 L969.0,698.5 L970.0,698.2 L971.0,697.9 L972.0,697.6 L973.0,697.3 L974.0,697.0 L975.0,696.7 L976.0,696.3 L977.0,695.9 L978.0,695.6 L979.0,695.1 L980.0,694.7 L981.0,694.3 L982.0,693.8 L983.0,693.3 L984.0,692.9 L985.0,692.3 L986.0,691.8 L987.0,691.3 L988.0,690.7 L989.0,690.2 L990.0,689.7 L991.0,689.2 L992.0,688.8 L993.0,688.4 L994.0,687.9 L995.0,687.6 L996.0,687.2 L997.0,686.8 L998.0,686.5 L999.0,686.2 L1000.0,685.9 L1001.0,685.7 L1002.0,685.4 L1003.0,685.2 L1004.0,685.0 L1005.0,684.8 L1006.0,684.7 L1007.0,684.6 L1008.0,684.5 L1009.0,684.4 L1010.0,684.3 L1011.0,684.1 L1012.0,684.0 L1013.0,683.9 L1014.0,683.8 L1015.0,683.7 L1016.0,683.6 L1017.0,683.5 L1018.0,683.4 L1019.0,683.3 L1020.0,683.2 L1021.0,683.0 L1022.0,682.9 L1023.0,682.8 L1024.0,682.7 L1025.0,682.6 L1026.0,682.4 L1027.0,682.3 L1028.0,682.2 L1029.0,682.1 L1030.0,681.9 L1031.0,681.8 L1032.0,681.7 L1033.0,681.6 L1034.0,681.4 L1035.0,681.3 L1036.0,681.2 L1037.0,681.0 L1038.0,680.9 L1039.0,680.8 L1040.0,680.6 L1041.0,680.5 L1042.0,680.3 L1043.0,680.2 L1044.0,680.0 L1045.0,679.8 L1046.0,679.6 L1047.0,679.4 L1048.0,679.2 L1049.0,679.0 L1050.0,678.7 L1051.0,678.5 L1052.0,678.2 L1053.0,678.0 L1054.0,677.7 L1055.0,677.4 L1056.0,677.2 L1057.0,677.0 L1058.0,676.7 L1059.0,676.6 L1060.0,676.4 L1061.0,676.2 L1062.0,676.1 L1063.0,676.0 L1064.0,676.0 L1065.0,675.9 L1066.0,675.9 L1067.0,675.9 L1068.0,676.0 L1069.0,676.0 L1070.0,676.1 L1071.0,676.3 L1072.0,676.4 L1073.0,676.6 L1074.0,676.8 L1075.0,677.1 L1076.0,677.3 L1077.0,677.5 L1078.0,677.8 L1079.0,678.0 L1080.0,678.2 L1081.0,678.4 L1082.0,678.7 L1083.0,678.9 L1084.0,679.1 L1085.0,679.3 L1086.0,679.5 L1087.0,679.6 L1088.0,679.8 L1089.0,680.0 L1090.0,680.2 L1091.0,680.3 L1092.0,680.5 L1093.0,680.6 L1094.0,680.8 L1095.0,680.9 L1096.0,681.1 L1097.0,681.2 L1098.0,681.4 L1099.0,681.5 L1100.0,681.7 L1101.0,681.8 L1102.0,681.9 L1103.0,682.0 L1104.0,682.1 L1105.0,682.2 L1106.0,682.3 L1107.0,682.4 L1108.0,682.4 L1109.0,682.5 L1110.0,682.5 L1111.0,682.6 L1112.0,682.6 L1113.0,682.6 L1114.0,682.6 L1115.0,682.6 L1116.0,682.6 L1117.0,682.6 L1118.0,682.6 L1119.0,682.6 L1120.0,682.5 L1121.0,682.5 L1122.0,682.4 L1123.0,682.4 L1124.0,682.3 L1125.0,682.3 L1126.0,682.3 L1127.0,682.3 L1128.0,682.4 L1129.0,682.4 L1130.0,682.5 L1131.0,682.6 L1132.0,682.7 L1133.0,682.8 L1134.0,682.9 L1135.0,683.1 L1136.0,683.3 L1137.0,683.5 L1138.0,683.7 L1139.0,683.9 L1140.0,684.2 L1141.0,684.5 L1142.0,684.8 L1143.0,685.1 L1144.0,685.4 L1145.0,685.7 L1146.0,686.1 L1147.0,686.4 L1148.0,686.8 L1149.0,687.1 L1150.0,687.5 L1151.0,687.8 L1152.0,688.1 L1153.0,688.3 L1154.0,688.6 L1155.0,688.8 L1156.0,689.0 L1157.0,689.2 L1158.0,689.3 L1159.0,689.5 L1160.0,689.6 L1161.0,689.7 L1162.0,689.8 L1163.0,689.9 L1164.0,689.9 L1165.0,689.9 L1166.0,689.9 L1167.0,689.9 L1168.0,689.9 L1169.0,689.9 L1170.0,689.8 L1171.0,689.7 L1172.0,689.7 L1173.0,689.6 L1174.0,689.6 L1175.0,689.6 L1176.0,689.5 L1177.0,689.5 L1178.0,689.5 L1179.0,689.5 L1180.0,689.4 L1181.0,689.4 L1182.0,689.4 L1183.0,689.4 L1184.0,689.4 L1185.0,689.4 L1186.0,689.4 L1187.0,689.4 L1188.0,689.4 L1189.0,689.4 L1190.0,689.4 L1191.0,689.4 L1192.0,689.3 L1193.0,689.3 L1194.0,689.2 L1195.0,689.1 L1196.0,689.0 L1197.0,688.9 L1198.0,688.8 L1199.0,688.6 L1200.0,688.5 L1201.0,688.3 L1202.0,688.1 L1203.0,687.8 L1204.0,687.6 L1205.0,687.3 L1206.0,687.1 L1207.0,686.8 L1208.0,686.5 L1209.0,686.2 L1210.0,685.9 L1211.0,685.6 L1212.0,685.3 L1213.0,685.0 L1214.0,684.8 L1215.0,684.5 L1216.0,684.3 L1217.0,684.1 L1218.0,683.9 L1219.0,683.8 L1220.0,683.6 L1221.0,683.5 L1222.0,683.4 L1223.0,683.3 L1224.0,683.2 L1225.0,683.2 L1226.0,683.1 L1227.0,683.1 L1228.0,683.1 L1229.0,683.1 L1230.0,683.1 L1231.0,683.1 L1232.0,683.2 L1233.0,683.2 L1234.0,683.2 L1235.0,683.3 L1236.0,683.3 L1237.0,683.4 L1238.0,683.4 L1239.0,683.5 L1240.0,683.5 L1241.0,683.6 L1242.0,683.6 L1243.0,683.7 L1244.0,683.7 L1245.0,683.8 L1246.0,683.8 L1247.0,683.9 L1248.0,683.9 L1249.0,683.9 L1250.0,683.9 L1251.0,683.9 L1252.0,683.9 L1253.0,683.9 L1254.0,683.9 L1255.0,683.9 L1256.0,683.9 L1257.0,683.8 L1258.0,683.8 L1259.0,683.7 L1260.0,683.6 L1261.0,683.5 L1262.0,683.3 L1263.0,683.2 L1264.0,683.0 L1265.0,682.9 L1266.0,682.7 L1267.0,682.5 L1268.0,682.3 L1269.0,682.1 L1270.0,682.0 L1271.0,681.9 L1272.0,681.7 L1273.0,681.6 L1274.0,681.5 L1275.0,681.4 L1276.0,681.3 L1277.0,681.3 L1278.0,681.2 L1279.0,681.3 L1280.0,681.3 L1281.0,681.4 L1282.0,681.5 L1283.0,681.7 L1284.0,682.0 L1285.0,682.2 L1286.0,682.5 L1287.0,682.9 L1288.0,683.3 L1289.0,683.7 L1290.0,684.2 L1291.0,684.6 L1292.0,685.1 L1293.0,685.6 L1294.0,686.1 L1295.0,686.3 L1296.0,686.5 L1297.0,686.8 L1298.0,687.1 L1299.0,687.4 L1300.0,687.7 L1301.0,688.0 L1302.0,688.3 L1303.0,688.6 L1304.0,688.8" fill="none" stroke="#ff0000" stroke-width="2.4" stroke-linejoin="round" stroke-linecap="round"/>
<path d="M0.0,690.6 L44.8,700.6 L74.7,698.0 L99.6,689.4 L124.5,681.4 L139.4,683.0 L169.3,686.9 L194.2,693.0 L219.0,690.6 L249.0,695.6 L288.8,701.8 L300.0,698.0 L327.4,689.4 L339.8,686.9 L354.8,689.4 L379.7,696.8 L399.6,699.3 L419.5,703.0 L434.4,699.3 L474.3,701.8 L494.2,700.6 L514.1,694.3 L548.9,689.4 L573.8,689.4 L581.3,696.8 L600.0,709.5 L624.9,710.5 L674.7,709.0 L699.6,700.6 L724.5,695.6 L754.3,696.8 L779.2,705.5 L809.1,714.3 L836.5,706.8 L856.4,703.0 L873.8,705.5 L900.0,703.0 L937.3,703.0 L967.2,696.8 L987.1,685.6 L1012.0,683.0 L1039.4,679.4 L1054.3,674.4 L1074.3,679.4 L1099.2,683.0 L1124.0,681.9 L1148.9,690.6 L1163.9,689.4 L1178.8,689.4 L1190.0,689.4 L1207.4,683.1 L1227.3,683.1 L1239.8,684.4 L1257.2,683.1 L1267.2,679.9 L1277.1,681.9 L1289.6,689.4 L1304.5,695.6" fill="none" stroke="#ffffff" stroke-width="1.8" stroke-linejoin="round" stroke-linecap="round"/>
<text x="1500" y="278.3" font-size="16" fill="#fff">55.000,0000</text>
<text x="1500" y="348.8" font-size="16" fill="#fff">50.000,0000</text>
<text x="1500" y="418.8" font-size="16" fill="#fff">45.000,0000</text>
<text x="1500" y="490.3" font-size="16" fill="#fff">40.000,0000</text>
<rect x="1493" y="93" width="91" height="19" rx="2" fill="#fff"/>
<text x="1494" y="108.3" font-size="16" fill="#000"></text>
<rect x="1493" y="124" width="91" height="17" rx="2" fill="#fff"/>
<text x="1494" y="138.3" font-size="16" fill="#000">6</text>
<rect x="1493" y="196" width="91" height="20" rx="2" fill="#fff"/>
<text x="1494" y="211.8" font-size="16" fill="#000"></text>
<rect x="1493" y="236" width="89" height="14" rx="2" fill="#fff"/>
<text x="1494" y="248.8" font-size="16" fill="#000"></text>
<path d="M1491,81.7 L1502,70 L1586,70 L1586,93.4 L1502,93.4 Z" fill="#00e1ff"/>
<text x="1504" y="87.5" font-size="16" fill="#000">68.362,9967</text>
<path d="M1491,105.2 L1502,93.4 L1586,93.4 L1586,117 L1502,117 Z" fill="#ff00ff"/>
<text x="1504" y="111.0" font-size="16" fill="#000">66.728,0982</text>
<path d="M1491,124.0 L1502,115 L1586,115 L1586,133 L1502,133 Z" fill="#008000"/>
<text x="1504" y="129.8" font-size="16" fill="#fff">65.518,2483</text>
<path d="M1491,146.5 L1502,134 L1586,134 L1586,159 L1502,159 Z" fill="#ff00ff"/>
<text x="1504" y="152.3" font-size="16" fill="#000">63.874,7685</text>
<rect x="1493" y="184" width="93" height="12" fill="#ff00ff"/>
<text x="1503" y="197" font-size="16" fill="#000">61.621,455</text>
<rect x="1491" y="167.2" width="95" height="23.3" fill="#ad0000"/>
<text x="1497.5" y="185.5" font-size="18" font-weight="bold" fill="#fff">61.568,345</text>
<path d="M1491,210.5 L1502,198 L1586,198 L1586,223 L1502,223 Z" fill="#ff5000"/>
<text x="1504" y="216.3" font-size="16" fill="#000">59.240,3067</text>
<path d="M1491,251.0 L1502,239.2 L1586,239.2 L1586,262.8 L1502,262.8 Z" fill="#ff0000"/>
<text x="1504" y="256.8" font-size="16" fill="#fff">56.395,5583</text>
<rect x="1493" y="280" width="91" height="18" rx="2" fill="#fff"/>
<text x="1494" y="294.8" font-size="16" fill="#000">53.709,2017</text>
<rect x="1493" y="298" width="91" height="15.600000000000023" rx="2" fill="#00bfff"/>
<text x="1494" y="311.6" font-size="16" fill="#000">52.607,2993</text>
<rect x="1493" y="324" width="90.5" height="17.30000000000001" rx="2" fill="#fff"/>
<text x="1494" y="338.45" font-size="16" fill="#000">50.600,3918</text>
<rect x="1493" y="415" width="90.5" height="18.30000000000001" rx="2" fill="#ff00ff"/>
<text x="1494" y="429.95" font-size="16" fill="#000">44.154,3396</text>
<rect x="1493" y="466" width="90.5" height="18" rx="2" fill="#fff"/>
<text x="1494" y="480.8" font-size="16" fill="#000">40.536,2782</text>
<ellipse cx="1523.7" cy="185" rx="34" ry="17.5" fill="none" stroke="#f8f000" stroke-width="5"/>
<text x="1506" y="570.8" font-size="16" fill="#fff">80,00 %</text>
<text x="1506" y="583.8" font-size="16" fill="#fff">50,00 %</text>
<path d="M1491,592.25 L1502,580 L1567,580 L1567,604.5 L1502,604.5 Z" fill="#ff0000"/>
<text x="1504" y="598.05" font-size="16" fill="#fff">16,27 %</text>
<text x="1506" y="632.8" font-size="16" fill="#fff">70,00 %</text>
<text x="1506" y="653.8" font-size="16" fill="#fff">30,00 %</text>
<path d="M1491,643.0 L1502,631 L1567,631 L1567,655 L1502,655 Z" fill="#ffffff"/>
<text x="1504" y="648.8" font-size="16" fill="#000">37,55 %</text>
<path d="M1491,690.5 L1502,678 L1575,678 L1575,703 L1502,703 Z" fill="#ff0000"/>
<text x="1504" y="696.3" font-size="16" fill="#fff">924,7082</text>
<path d="M1498,694 L1506,700 L1502,706 Z" fill="#fff"/>
<path d="M1491,706.5 L1502,694 L1581,694 L1581,719 L1502,719 Z" fill="#00bfef"/>
<text x="1504" y="712.3" font-size="16" fill="#000">-534,9513</text>
</svg>
<div id="tabs" class="abs">
 <div class="tab" style="left:0;width:82px;background:#fff;color:#2a86ee;text-align:left;padding-left:7.8px;">Bitcoin (USD)</div>
 <div class="tab" style="left:85.2px;width:97.6px;">Cardano (USD)</div>
 <div class="tab" style="left:186px;width:102.8px;">Ethereum (USD)</div>
 <div class="tab" style="left:292px;width:115.6px;">Germany 40 - Cash</div>
 <div class="tab" style="left:411.3px;width:115.3px;">Germany 40 - Cash</div>
 <div class="tab" style="left:529.9px;width:61px;">Crypto</div>
 <div class="tab" style="left:594.2px;width:61.8px;">Indizes</div>
 <div class="tab" style="left:659.3px;width:91.7px;">Positionen (1)</div>
</div>
<div id="bar2" class="abs">
 <div class="abs" style="left:0;top:0;width:15.6px;height:24px;background:linear-gradient(#cfcfcf,#c4c4c4);border-right:1px solid #bbb;"></div>
 <div class="abs" style="left:0;top:8px;width:7px;height:2px;background:#555;"></div>
 <div class="abs" style="left:0;top:11.5px;width:7px;height:2px;background:#555;"></div>
 <div class="abs" style="left:0;top:15px;width:7px;height:2px;background:#555;"></div>
 <div class="abs" style="left:15.6px;top:0;width:106px;height:25px;background:#fff;"></div>
 <div class="abs" style="left:22px;top:5.3px;width:12.6px;height:12.6px;border:1px solid #666;border-radius:50%;font-size:9px;line-height:11px;text-align:center;color:#555;">1</div>
 <div class="abs" style="left:40.4px;top:-1px;font-size:9.6px;line-height:24px;color:#111;">Bitcoin (USD)</div>
 <div class="abs" style="left:103px;top:6px;width:8.5px;height:8.5px;border:1.2px solid #666;border-radius:50%;"></div>
 <div class="abs" style="left:110px;top:15.2px;width:5px;height:1.3px;background:#666;transform:rotate(45deg);"></div>
 <div class="abs" style="left:130px;top:10.3px;width:9px;height:1.6px;background:#8a8a8a;"></div>
 <div class="abs" style="left:133.7px;top:6.6px;width:1.6px;height:9px;background:#8a8a8a;"></div>
 <div class="abs" style="left:1362px;top:0;width:49px;height:24.3px;background:#fff;"></div>
 <div class="abs" style="left:1367.5px;top:4px;width:0;height:0;border-left:3.8px solid transparent;border-right:3.8px solid transparent;border-top:6.5px solid #c00000;"></div>
 <div class="abs" style="left:1362px;width:45.5px;text-align:right;top:1.5px;font-size:9.6px;line-height:10px;color:#b83030;">1,76 %</div>
 <div class="abs" style="left:1362px;width:45.5px;text-align:right;top:11px;font-size:9.6px;line-height:10px;color:#b83030;">1.105,155</div>
 <div class="abs" style="left:1411px;top:0;width:65px;height:24.3px;background:#c0852a;"></div>
 <div class="abs" style="left:1476px;top:0;width:64px;height:24.3px;background:#27a4bf;"></div>
 <div class="abs" style="left:1411px;top:2.5px;width:65px;text-align:center;font-size:10px;line-height:12px;color:#fff;font-weight:bold;">61.508,345</div>
 <div class="abs" style="left:1476px;top:2.5px;width:64px;text-align:center;font-size:10px;line-height:12px;color:#fff;font-weight:bold;">61.628,345</div>
 <div class="abs" style="left:1449px;top:16.5px;width:0;height:0;border-left:3.5px solid transparent;border-right:3.5px solid transparent;border-top:5.5px solid #ff3030;"></div>
 <div class="abs" style="left:1498px;top:16.5px;width:0;height:0;border-left:3.5px solid transparent;border-right:3.5px solid transparent;border-top:5.5px solid #ff3030;"></div>
 <div class="abs" style="left:1457px;top:16px;width:38px;height:8.5px;background:#6a6a6a;border-radius:1px;font-size:9px;line-height:9px;text-align:center;color:#fff;">120,000</div>
 <div class="abs" style="left:1540px;top:0;width:12px;height:24px;background:#c9c9c9;"></div>
 <div class="abs" style="left:1541px;top:2.5px;width:9px;height:1px;background:#8a8a8a;"></div>
 <div class="abs" style="left:1541px;top:7px;width:9px;height:1px;background:#8a8a8a;"></div>
 <div class="abs" style="left:1541px;top:10.7px;width:9px;height:1px;background:#8a8a8a;"></div>
 <div class="abs" style="left:1541px;top:14.4px;width:9px;height:1px;background:#8a8a8a;"></div>
 <div class="abs" style="left:1541px;top:18.5px;width:9px;height:1px;background:#8a8a8a;"></div>
 <div class="abs" style="left:1557px;top:3px;font-size:11px;line-height:14px;color:#777;">&#x2197;</div>
 <div class="abs" style="left:1575px;top:4px;font-size:13px;line-height:14px;color:#666;">&#x2715;</div>
</div>
<div id="tool" class="abs">
 <div class="abs" style="left:0;top:3px;width:10px;height:11px;border:1px solid #999;border-left:none;"></div>
 <div class="abs" style="left:2px;top:6px;width:6px;height:1px;background:#bbb;"></div>
 <div class="abs" style="left:2px;top:8.5px;width:6px;height:1px;background:#bbb;"></div>
 <div class="abs" style="left:2px;top:11px;width:6px;height:1px;background:#bbb;"></div>
 <div class="sep" style="left:16.6px;"></div>
 <div class="abs" style="left:24px;top:3.3px;width:12px;height:11px;border:1px dashed #aaa;"></div>
 <div class="abs" style="left:29.5px;top:3.3px;width:1px;height:11px;background:#ccc;"></div>
 <div class="abs" style="left:24px;top:8.5px;width:12px;height:1px;background:#ccc;"></div>
 <div class="sep" style="left:43.4px;"></div>
 <div class="tt" style="left:49.4px;">4 stunden</div>
 <div class="sep" style="left:111.5px;"></div>
 <div class="tt bl" style="left:116px;">15m</div>
 <div class="sep" style="left:134.2px;"></div>
 <div class="tt bl" style="left:138.7px;">1std</div>
 <div class="sep" style="left:157.3px;"></div>
 <div class="tt" style="left:162.6px;">3 Monate</div>
 <div class="sep" style="left:229.7px;"></div>
 <div class="tt bl" style="left:234.8px;">1T</div>
 <div class="sep" style="left:247.4px;"></div>
 <div class="tt bl" style="left:251.9px;">1W</div>
 <div class="sep" style="left:266.5px;"></div>
 <svg class="abs" style="left:275px;top:2px" width="13" height="13" viewBox="0 0 13 13"><g stroke="#777" stroke-width="1.1"><line x1="1" y1="2.5" x2="12" y2="2.5"/><line x1="1" y1="6.5" x2="12" y2="6.5"/><line x1="1" y1="10.5" x2="12" y2="10.5"/><line x1="4" y1="0.5" x2="4" y2="4.5"/><line x1="9" y1="4.5" x2="9" y2="8.5"/><line x1="5" y1="8.5" x2="5" y2="12.5"/></g></svg>
 <div class="tt" style="left:293px;">Voreinstellungen</div>
 <div class="sep" style="left:372.8px;"></div>
 <svg class="abs" style="left:381px;top:2.5px" width="13" height="12" viewBox="0 0 13 12"><g stroke="#777" stroke-width="1" fill="none"><rect x="1" y="4" width="2.5" height="5"/><line x1="2.25" y1="2" x2="2.25" y2="11"/><rect x="5.2" y="2.5" width="2.5" height="5"/><line x1="6.45" y1="1" x2="6.45" y2="9.5"/><rect x="9.5" y="3" width="2.5" height="4.5"/><line x1="10.75" y1="0.5" x2="10.75" y2="9"/></g></svg>
 <div class="tt" style="left:399.2px;">Mittel</div>
 <div class="sep" style="left:429.5px;"></div>
 <svg class="abs" style="left:438px;top:3px" width="14" height="12" viewBox="0 0 14 12"><path d="M1,1 H13 V8 H6 L3,11 V8 H1 Z" fill="none" stroke="#777" stroke-width="1"/></svg>
 <div class="tt" style="left:456.7px;">Forum</div>
 <div class="sep" style="left:492.6px;"></div>
 <div class="sep" style="left:1499px;"></div>
 <svg class="abs" style="left:1508px;top:2.5px" width="13" height="13" viewBox="0 0 13 13"><circle cx="6.5" cy="6.5" r="3.6" fill="none" stroke="#555" stroke-width="1.1"/><g stroke="#555" stroke-width="1.2"><line x1="6.5" y1="0.5" x2="6.5" y2="2.5"/><line x1="6.5" y1="10.5" x2="6.5" y2="12.5"/><line x1="0.5" y1="6.5" x2="2.5" y2="6.5"/><line x1="10.5" y1="6.5" x2="12.5" y2="6.5"/><line x1="2.2" y1="2.2" x2="3.6" y2="3.6"/><line x1="9.4" y1="9.4" x2="10.8" y2="10.8"/><line x1="2.2" y1="10.8" x2="3.6" y2="9.4"/><line x1="9.4" y1="3.6" x2="10.8" y2="2.2"/></g></svg>
 <div class="tt" style="left:1525.6px;">Einstellungen</div>
</div>
</body></html>
